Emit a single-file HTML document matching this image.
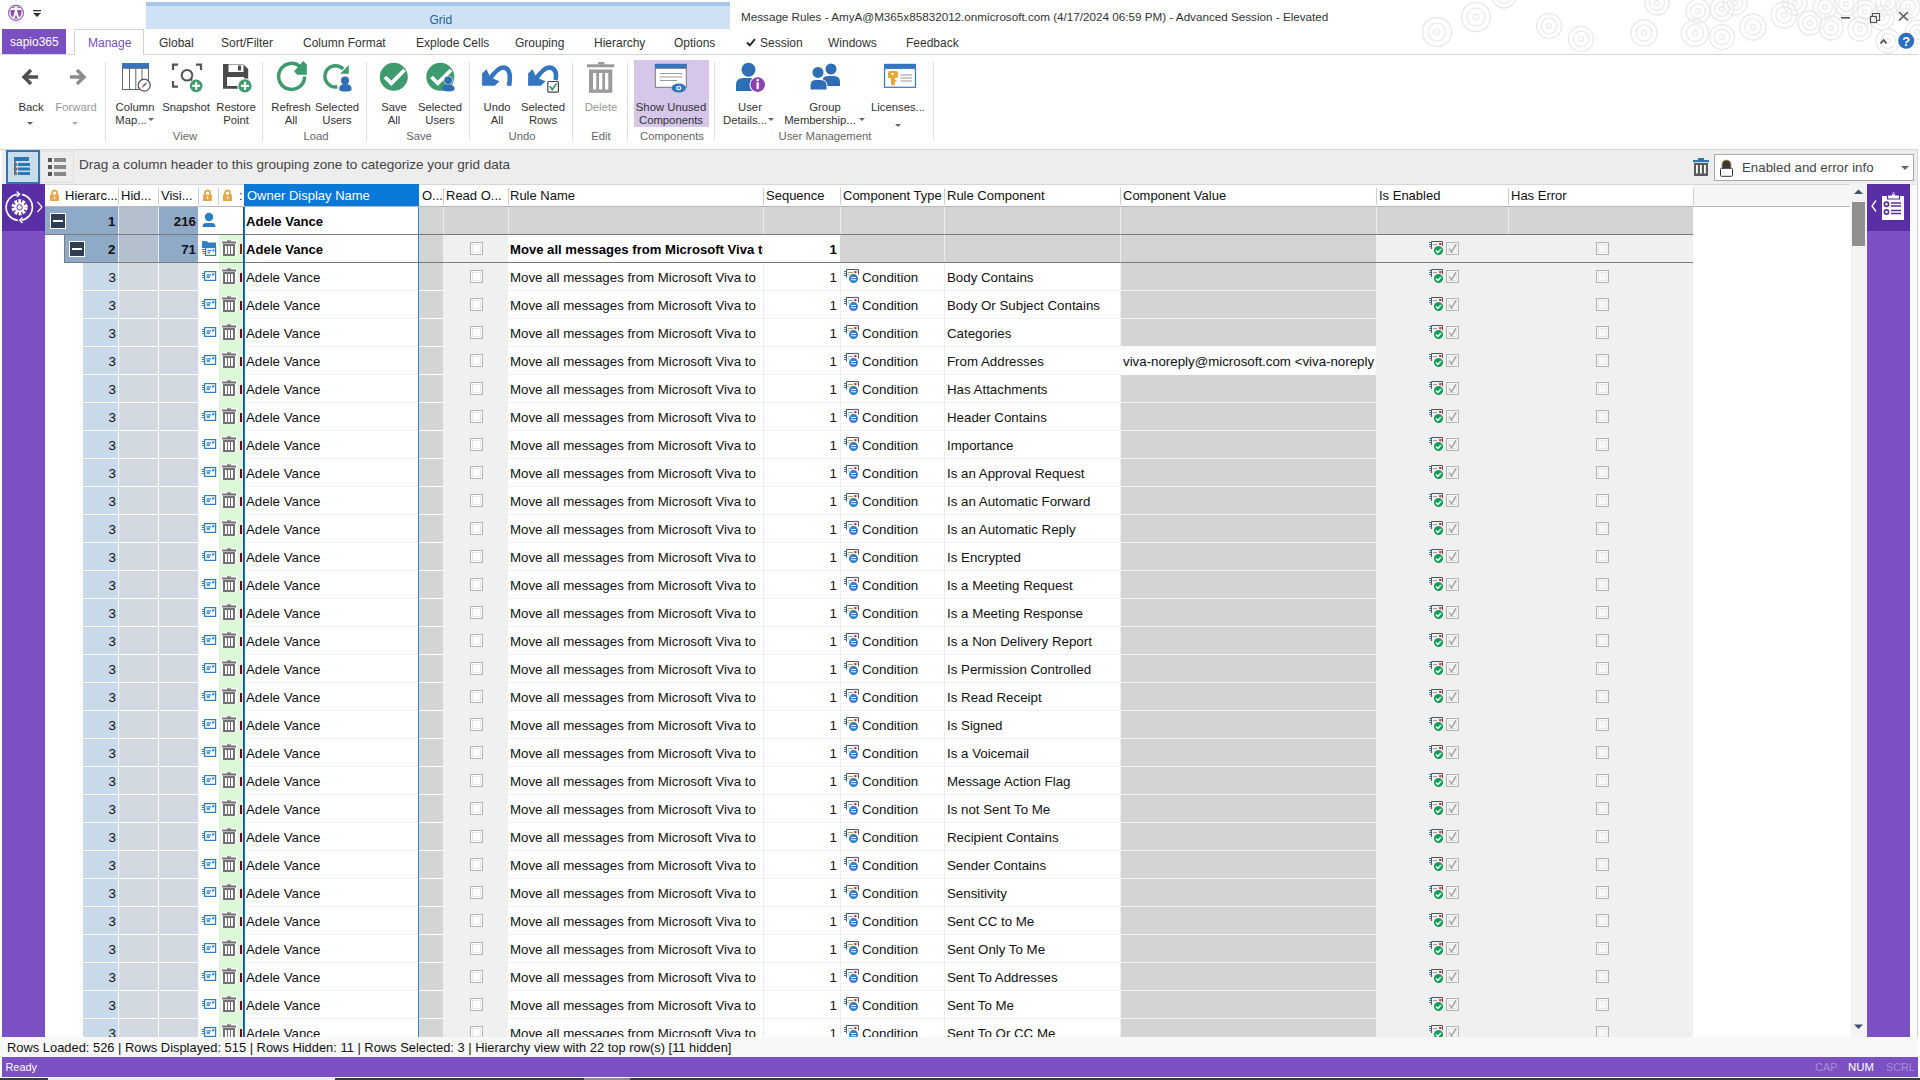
<!DOCTYPE html><html><head><meta charset="utf-8"><style>
*{margin:0;padding:0;box-sizing:border-box}
html,body{width:1920px;height:1080px;overflow:hidden;background:#fff;font-family:"Liberation Sans",sans-serif;color:#222}
.a{position:absolute}
.t{position:absolute;white-space:nowrap;line-height:1}
</style></head><body>
<svg class="a" style="left:0;top:0" width="1920" height="56"><circle cx="1437" cy="32" r="14.5" fill="none" stroke="#e9e9e9" stroke-width="1.3"/><circle cx="1437" cy="32" r="9.0" fill="none" stroke="#e9e9e9" stroke-width="1.2"/><circle cx="1437" cy="32" r="2.9" fill="none" stroke="#e9e9e9" stroke-width="1.1"/><circle cx="1476" cy="17" r="14.5" fill="none" stroke="#e9e9e9" stroke-width="1.3"/><circle cx="1476" cy="17" r="9.0" fill="none" stroke="#e9e9e9" stroke-width="1.2"/><circle cx="1476" cy="17" r="2.9" fill="none" stroke="#e9e9e9" stroke-width="1.1"/><circle cx="1504" cy="-4" r="12" fill="none" stroke="#e9e9e9" stroke-width="1.3"/><circle cx="1504" cy="-4" r="7.4" fill="none" stroke="#e9e9e9" stroke-width="1.2"/><circle cx="1504" cy="-4" r="2.4" fill="none" stroke="#e9e9e9" stroke-width="1.1"/><circle cx="1549" cy="26" r="12.5" fill="none" stroke="#e9e9e9" stroke-width="1.3"/><circle cx="1549" cy="26" r="7.8" fill="none" stroke="#e9e9e9" stroke-width="1.2"/><circle cx="1549" cy="26" r="2.5" fill="none" stroke="#e9e9e9" stroke-width="1.1"/><circle cx="1581" cy="39" r="12.5" fill="none" stroke="#e9e9e9" stroke-width="1.3"/><circle cx="1581" cy="39" r="7.8" fill="none" stroke="#e9e9e9" stroke-width="1.2"/><circle cx="1581" cy="39" r="2.5" fill="none" stroke="#e9e9e9" stroke-width="1.1"/><circle cx="1644" cy="33" r="13" fill="none" stroke="#e9e9e9" stroke-width="1.3"/><circle cx="1644" cy="33" r="8.1" fill="none" stroke="#e9e9e9" stroke-width="1.2"/><circle cx="1644" cy="33" r="2.6" fill="none" stroke="#e9e9e9" stroke-width="1.1"/><circle cx="1657" cy="3" r="12" fill="none" stroke="#e9e9e9" stroke-width="1.3"/><circle cx="1657" cy="3" r="7.4" fill="none" stroke="#e9e9e9" stroke-width="1.2"/><circle cx="1657" cy="3" r="2.4" fill="none" stroke="#e9e9e9" stroke-width="1.1"/><circle cx="1698" cy="11" r="12" fill="none" stroke="#e9e9e9" stroke-width="1.3"/><circle cx="1698" cy="11" r="7.4" fill="none" stroke="#e9e9e9" stroke-width="1.2"/><circle cx="1698" cy="11" r="2.4" fill="none" stroke="#e9e9e9" stroke-width="1.1"/><circle cx="1695" cy="33" r="13.5" fill="none" stroke="#e9e9e9" stroke-width="1.3"/><circle cx="1695" cy="33" r="8.4" fill="none" stroke="#e9e9e9" stroke-width="1.2"/><circle cx="1695" cy="33" r="2.7" fill="none" stroke="#e9e9e9" stroke-width="1.1"/><circle cx="1722" cy="37" r="12.5" fill="none" stroke="#e9e9e9" stroke-width="1.3"/><circle cx="1722" cy="37" r="7.8" fill="none" stroke="#e9e9e9" stroke-width="1.2"/><circle cx="1722" cy="37" r="2.5" fill="none" stroke="#e9e9e9" stroke-width="1.1"/><circle cx="1722" cy="9" r="12" fill="none" stroke="#e9e9e9" stroke-width="1.3"/><circle cx="1722" cy="9" r="7.4" fill="none" stroke="#e9e9e9" stroke-width="1.2"/><circle cx="1722" cy="9" r="2.4" fill="none" stroke="#e9e9e9" stroke-width="1.1"/><circle cx="1735" cy="3" r="12" fill="none" stroke="#e9e9e9" stroke-width="1.3"/><circle cx="1735" cy="3" r="7.4" fill="none" stroke="#e9e9e9" stroke-width="1.2"/><circle cx="1735" cy="3" r="2.4" fill="none" stroke="#e9e9e9" stroke-width="1.1"/><circle cx="1753" cy="27" r="13" fill="none" stroke="#e9e9e9" stroke-width="1.3"/><circle cx="1753" cy="27" r="8.1" fill="none" stroke="#e9e9e9" stroke-width="1.2"/><circle cx="1753" cy="27" r="2.6" fill="none" stroke="#e9e9e9" stroke-width="1.1"/><circle cx="1784" cy="15" r="13" fill="none" stroke="#e9e9e9" stroke-width="1.3"/><circle cx="1784" cy="15" r="8.1" fill="none" stroke="#e9e9e9" stroke-width="1.2"/><circle cx="1784" cy="15" r="2.6" fill="none" stroke="#e9e9e9" stroke-width="1.1"/><circle cx="1795" cy="3" r="12" fill="none" stroke="#e9e9e9" stroke-width="1.3"/><circle cx="1795" cy="3" r="7.4" fill="none" stroke="#e9e9e9" stroke-width="1.2"/><circle cx="1795" cy="3" r="2.4" fill="none" stroke="#e9e9e9" stroke-width="1.1"/><circle cx="1810" cy="23" r="12" fill="none" stroke="#e9e9e9" stroke-width="1.3"/><circle cx="1810" cy="23" r="7.4" fill="none" stroke="#e9e9e9" stroke-width="1.2"/><circle cx="1810" cy="23" r="2.4" fill="none" stroke="#e9e9e9" stroke-width="1.1"/><circle cx="1825" cy="7" r="12" fill="none" stroke="#e9e9e9" stroke-width="1.3"/><circle cx="1825" cy="7" r="7.4" fill="none" stroke="#e9e9e9" stroke-width="1.2"/><circle cx="1825" cy="7" r="2.4" fill="none" stroke="#e9e9e9" stroke-width="1.1"/><circle cx="1831" cy="28" r="12" fill="none" stroke="#e9e9e9" stroke-width="1.3"/><circle cx="1831" cy="28" r="7.4" fill="none" stroke="#e9e9e9" stroke-width="1.2"/><circle cx="1831" cy="28" r="2.4" fill="none" stroke="#e9e9e9" stroke-width="1.1"/><circle cx="1846" cy="4" r="12" fill="none" stroke="#e9e9e9" stroke-width="1.3"/><circle cx="1846" cy="4" r="7.4" fill="none" stroke="#e9e9e9" stroke-width="1.2"/><circle cx="1846" cy="4" r="2.4" fill="none" stroke="#e9e9e9" stroke-width="1.1"/><circle cx="1860" cy="29" r="12" fill="none" stroke="#e9e9e9" stroke-width="1.3"/><circle cx="1860" cy="29" r="7.4" fill="none" stroke="#e9e9e9" stroke-width="1.2"/><circle cx="1860" cy="29" r="2.4" fill="none" stroke="#e9e9e9" stroke-width="1.1"/><circle cx="1865" cy="12" r="12" fill="none" stroke="#e9e9e9" stroke-width="1.3"/><circle cx="1865" cy="12" r="7.4" fill="none" stroke="#e9e9e9" stroke-width="1.2"/><circle cx="1865" cy="12" r="2.4" fill="none" stroke="#e9e9e9" stroke-width="1.1"/><circle cx="1882" cy="18" r="12" fill="none" stroke="#e9e9e9" stroke-width="1.3"/><circle cx="1882" cy="18" r="7.4" fill="none" stroke="#e9e9e9" stroke-width="1.2"/><circle cx="1882" cy="18" r="2.4" fill="none" stroke="#e9e9e9" stroke-width="1.1"/><circle cx="1888" cy="41" r="12" fill="none" stroke="#e9e9e9" stroke-width="1.3"/><circle cx="1888" cy="41" r="7.4" fill="none" stroke="#e9e9e9" stroke-width="1.2"/><circle cx="1888" cy="41" r="2.4" fill="none" stroke="#e9e9e9" stroke-width="1.1"/><circle cx="1888" cy="3" r="12" fill="none" stroke="#e9e9e9" stroke-width="1.3"/><circle cx="1888" cy="3" r="7.4" fill="none" stroke="#e9e9e9" stroke-width="1.2"/><circle cx="1888" cy="3" r="2.4" fill="none" stroke="#e9e9e9" stroke-width="1.1"/><circle cx="1908" cy="7" r="12" fill="none" stroke="#e9e9e9" stroke-width="1.3"/><circle cx="1908" cy="7" r="7.4" fill="none" stroke="#e9e9e9" stroke-width="1.2"/><circle cx="1908" cy="7" r="2.4" fill="none" stroke="#e9e9e9" stroke-width="1.1"/><circle cx="1917" cy="32" r="12" fill="none" stroke="#e9e9e9" stroke-width="1.3"/><circle cx="1917" cy="32" r="7.4" fill="none" stroke="#e9e9e9" stroke-width="1.2"/><circle cx="1917" cy="32" r="2.4" fill="none" stroke="#e9e9e9" stroke-width="1.1"/></svg>
<svg class="a" style="left:4px;top:2px" width="24" height="24"><circle cx="12" cy="10.9" r="7.5" fill="#fff" stroke="#9050b0" stroke-width="1.1"/><path d="M8 5.9 Q9.5 4 11 5.9Z M13 5.9 Q14.5 4 16 5.9Z" fill="#9050b0"/><path d="M6.4 8 H11 L9.4 14.2 Q8.5 15.6 7.4 14.2 Q6 11 6.4 8Z M17.6 8 H13 L14.6 14.2 Q15.5 15.6 16.6 14.2 Q18 11 17.6 8Z M10.4 16.7 L12 12.5 L13.6 16.7Z" fill="#9050b0"/></svg>
<svg class="a" style="left:33px;top:10px" width="9" height="8"><rect x="0" y="0" width="8" height="1.3" fill="#333"/><path d="M0 3 L8 3 L4 7Z" fill="#333"/></svg>
<div class="a" style="left:146px;top:2px;width:584px;height:4px;background:#a5c8e8"></div>
<div class="a" style="left:146px;top:6px;width:584px;height:23px;background:#cfe2f5"></div>
<div class="t" style="left:429.5px;top:14px;font-size:12px;color:#1f5d9e;">Grid</div>
<div class="t" style="left:741px;top:10.5px;font-size:11.68px;color:#333;">Message Rules - AmyA@M365x85832012.onmicrosoft.com (4/17/2024 06:59 PM) - Advanced Session - Elevated</div>
<svg class="a" style="left:1830px;top:0px" width="90" height="54"><rect x="11" y="17" width="9" height="1.6" fill="#555"/><rect x="40.5" y="16.5" width="6" height="6" fill="none" stroke="#555" stroke-width="1.2"/><path d="M42.5 16.5 V13.5 H49.5 V20.5 H46.5" fill="none" stroke="#555" stroke-width="1.2"/><path d="M69 12 L78 20.5 M78 12 L69 20.5" stroke="#555" stroke-width="1.5"/><path d="M50.5 43.5 L53.5 40 L56.5 43.5" fill="none" stroke="#444" stroke-width="1.6"/><circle cx="76.2" cy="40.8" r="8" fill="#2a6fc0"/><text x="76.2" y="45.5" text-anchor="middle" font-family="Liberation Sans" font-weight="bold" font-size="13" fill="#fff">?</text></svg>
<div class="a" style="left:2px;top:29px;width:64px;height:25px;background:#7a4fc2"></div>
<div class="t" style="left:10px;top:36px;font-size:12px;color:#fff;">sapio365</div>
<div class="a" style="left:0px;top:54px;width:1918px;height:1px;background:#d6d6d6"></div>
<div class="a" style="left:74px;top:29px;width:70px;height:26px;background:#fff;border:1px solid #d2d2d2;border-bottom:none"></div>
<div class="t" style="left:88px;top:37px;font-size:12px;color:#7a4fc2;">Manage</div>
<div class="t" style="left:159px;top:37px;font-size:12px;color:#333;">Global</div>
<div class="t" style="left:221px;top:37px;font-size:12px;color:#333;">Sort/Filter</div>
<div class="t" style="left:303px;top:37px;font-size:12px;color:#333;">Column Format</div>
<div class="t" style="left:416px;top:37px;font-size:12px;color:#333;">Explode Cells</div>
<div class="t" style="left:515px;top:37px;font-size:12px;color:#333;">Grouping</div>
<div class="t" style="left:594px;top:37px;font-size:12px;color:#333;">Hierarchy</div>
<div class="t" style="left:674px;top:37px;font-size:12px;color:#333;">Options</div>
<div class="t" style="left:760px;top:37px;font-size:12px;color:#333;">Session</div>
<div class="t" style="left:828px;top:37px;font-size:12px;color:#333;">Windows</div>
<div class="t" style="left:906px;top:37px;font-size:12px;color:#333;">Feedback</div>
<svg class="a" style="left:746px;top:38px" width="10" height="9"><path d="M1 4.5 L3.8 7.3 L9 1.2" fill="none" stroke="#2a2a2a" stroke-width="2"/></svg>
<div class="a" style="left:0px;top:149px;width:1918px;height:1px;background:#d6d6d6"></div>
<div class="a" style="left:105px;top:62px;width:1px;height:80px;background:#e2e2e2"></div>
<div class="a" style="left:262px;top:62px;width:1px;height:80px;background:#e2e2e2"></div>
<div class="a" style="left:366px;top:62px;width:1px;height:80px;background:#e2e2e2"></div>
<div class="a" style="left:469px;top:62px;width:1px;height:80px;background:#e2e2e2"></div>
<div class="a" style="left:572px;top:62px;width:1px;height:80px;background:#e2e2e2"></div>
<div class="a" style="left:627px;top:62px;width:1px;height:80px;background:#e2e2e2"></div>
<div class="a" style="left:714px;top:62px;width:1px;height:80px;background:#e2e2e2"></div>
<div class="a" style="left:933px;top:62px;width:1px;height:80px;background:#e2e2e2"></div>
<svg class="a" style="left:0px;top:0px" width="960" height="150"><path d="M31 70 L24 77 L31 84 M24 77 H38" fill="none" stroke="#505050" stroke-width="3.4"/><path d="M77 70 L84 77 L77 84 M84 77 H70" fill="none" stroke="#8c8c8c" stroke-width="3.4"/><rect x="122" y="63" width="27" height="5.3" fill="#3574c0"/><rect x="122.5" y="68.3" width="26" height="21.2" fill="#fff" stroke="#666" stroke-width="1"/><path d="M129.5 68 V90 M135.8 68 V90 M142 68 V80" stroke="#666" stroke-width="1"/><circle cx="144.2" cy="85.2" r="6" fill="#fff" stroke="#555" stroke-width="1.2"/><path d="M141.2 88.2 L143.6 84.6 L147.2 82.2 L144.8 85.8Z" fill="#e04a2a"/><path d="M143.6 84.6 L147.2 82.2 L144.8 85.8Z" fill="#3574c0"/><path d="M173 70 V64.7 H178 M196 64.7 H201 V70 M173 81 V86.6 H178" fill="none" stroke="#555" stroke-width="2.2"/><circle cx="187" cy="75.3" r="5.3" fill="none" stroke="#555" stroke-width="2"/><path d="M190.5 79 L193 81.5" stroke="#555" stroke-width="2"/><circle cx="196.2" cy="85.9" r="7" fill="#fff"/><circle cx="196.2" cy="85.9" r="6.3" fill="#3d9b6e"/><path d="M196.2 82 V89.8 M192.3 85.9 H200.1" stroke="#fff" stroke-width="2.2"/><path d="M223 64 H243 L248.2 69 V88.7 H223Z" fill="#4b4b4b"/><rect x="228.5" y="64.5" width="15" height="7.5" fill="#fff"/><rect x="238" y="65.5" width="3" height="5" fill="#4b4b4b"/><rect x="227" y="77" width="17" height="9" fill="#fff"/><circle cx="245" cy="85.9" r="7.6" fill="#fff"/><circle cx="245" cy="85.9" r="6.6" fill="#3d9b6e"/><path d="M245 81.8 V90 M240.9 85.9 H249.1" stroke="#fff" stroke-width="2.2"/><path d="M304.6 76.4 A13 13 0 1 1 299.9 66.4" fill="none" stroke="#3d9b6e" stroke-width="3.5"/><path d="M303.3 60.9 L306.8 64.4 V74.75 H297.2 L294.1 71.2Z" fill="#3d9b6e"/><path d="M337.4 86.8 A10.6 10.6 0 1 1 343.1 68.9" fill="none" stroke="#3d9b6e" stroke-width="3.5"/><path d="M348.8 65.1 V73.8 H340.1Z" fill="#3d9b6e"/><circle cx="345" cy="80.4" r="4" fill="#2f6db5"/><path d="M339.2 89 Q339.2 84.1 345.4 84.1 Q351.6 84.1 351.6 89 Q351.6 91.6 345.4 91.6 Q339.2 91.6 339.2 89Z" fill="#2f6db5"/><circle cx="393.8" cy="76.8" r="14" fill="#3d9b6e"/><path d="M385 77 L391.3 83.3 L404.5 70" fill="none" stroke="#fff" stroke-width="3.8"/><circle cx="440.3" cy="76.8" r="14" fill="#3d9b6e"/><path d="M431.5 77 L437.8 83.3 L451 70" fill="none" stroke="#fff" stroke-width="3.8"/><circle cx="448.2" cy="80.3" r="4.6" fill="#cfe3d8"/><circle cx="448.2" cy="80.3" r="3.8" fill="#2f6db5"/><path d="M442 89 Q442 84.5 448.3 84.5 Q454.6 84.5 454.6 89 Q454.6 91.4 448.3 91.4 Q442 91.4 442 89Z" fill="#2f6db5"/><path d="M489.5 79.5 C494 73, 499 67.5, 503 67.5 C508 67.5, 511.5 72, 509 85.8" fill="none" stroke="#3574c0" stroke-width="4.6"/><path d="M482.1 73.5 L486.5 69.2 L490.5 77.5 L499.5 81.3 L494.8 85.8 L482.1 85.8Z" fill="#3574c0"/><path d="M535.5 79.5 C540 73, 545 67.5, 549 67.5 C554 67.5, 557.5 72, 555.5 80" fill="none" stroke="#3574c0" stroke-width="4.6"/><path d="M528.1 73.5 L532.5 69.2 L536.5 77.5 L545.5 81.3 L540.8 85.8 L528.1 85.8Z" fill="#3574c0"/><rect x="547.8" y="81.5" width="10.6" height="10.6" rx="1" fill="#fff" stroke="#444" stroke-width="1.2"/><path d="M549.8 86.3 L552.3 89.6 L556.6 83.5" fill="none" stroke="#3d9b6e" stroke-width="1.8"/><rect x="598" y="62" width="6.5" height="2.5" fill="#9b9b9b"/><rect x="586.8" y="64.3" width="27.4" height="3" fill="#9b9b9b"/><rect x="589" y="69.5" width="23.3" height="23.3" fill="#9b9b9b"/><rect x="593" y="73" width="3.3" height="16.5" fill="#fff"/><rect x="599" y="73" width="3.3" height="16.5" fill="#fff"/><rect x="605" y="73" width="3.3" height="16.5" fill="#fff"/></svg>
<div class="t" style="left:-29px;width:120px;text-align:center;top:101.5px;font-size:11.3px;color:#333">Back</div>
<svg class="a" style="left:27px;top:122px" width="6" height="4"><path d="M0 0 H6 L3 3Z" fill="#666"/></svg>
<div class="t" style="left:16px;width:120px;text-align:center;top:101.5px;font-size:11.3px;color:#999">Forward</div>
<svg class="a" style="left:72px;top:122px" width="6" height="4"><path d="M0 0 H6 L3 3Z" fill="#aaa"/></svg>
<div class="t" style="left:75px;width:120px;text-align:center;top:101.5px;font-size:11.3px;color:#333">Column</div>
<div class="t" style="left:71px;width:120px;text-align:center;top:114.5px;font-size:11.3px;color:#333">Map...</div>
<svg class="a" style="left:148px;top:118px" width="6" height="4"><path d="M0 0 H6 L3 3Z" fill="#666"/></svg>
<div class="t" style="left:126px;width:120px;text-align:center;top:101.5px;font-size:11.3px;color:#333">Snapshot</div>
<div class="t" style="left:176px;width:120px;text-align:center;top:101.5px;font-size:11.3px;color:#333">Restore</div>
<div class="t" style="left:176px;width:120px;text-align:center;top:114.5px;font-size:11.3px;color:#333">Point</div>
<div class="t" style="left:125px;width:120px;text-align:center;top:130.5px;font-size:11.3px;color:#666">View</div>
<div class="t" style="left:231px;width:120px;text-align:center;top:101.5px;font-size:11.3px;color:#333">Refresh</div>
<div class="t" style="left:231px;width:120px;text-align:center;top:114.5px;font-size:11.3px;color:#333">All</div>
<div class="t" style="left:277px;width:120px;text-align:center;top:101.5px;font-size:11.3px;color:#333">Selected</div>
<div class="t" style="left:277px;width:120px;text-align:center;top:114.5px;font-size:11.3px;color:#333">Users</div>
<div class="t" style="left:256px;width:120px;text-align:center;top:130.5px;font-size:11.3px;color:#666">Load</div>
<div class="t" style="left:334px;width:120px;text-align:center;top:101.5px;font-size:11.3px;color:#333">Save</div>
<div class="t" style="left:334px;width:120px;text-align:center;top:114.5px;font-size:11.3px;color:#333">All</div>
<div class="t" style="left:380px;width:120px;text-align:center;top:101.5px;font-size:11.3px;color:#333">Selected</div>
<div class="t" style="left:380px;width:120px;text-align:center;top:114.5px;font-size:11.3px;color:#333">Users</div>
<div class="t" style="left:359px;width:120px;text-align:center;top:130.5px;font-size:11.3px;color:#666">Save</div>
<div class="t" style="left:437px;width:120px;text-align:center;top:101.5px;font-size:11.3px;color:#333">Undo</div>
<div class="t" style="left:437px;width:120px;text-align:center;top:114.5px;font-size:11.3px;color:#333">All</div>
<div class="t" style="left:483px;width:120px;text-align:center;top:101.5px;font-size:11.3px;color:#333">Selected</div>
<div class="t" style="left:483px;width:120px;text-align:center;top:114.5px;font-size:11.3px;color:#333">Rows</div>
<div class="t" style="left:462px;width:120px;text-align:center;top:130.5px;font-size:11.3px;color:#666">Undo</div>
<div class="t" style="left:541px;width:120px;text-align:center;top:101.5px;font-size:11.3px;color:#999">Delete</div>
<div class="t" style="left:541px;width:120px;text-align:center;top:130.5px;font-size:11.3px;color:#666">Edit</div>
<div class="a" style="left:634px;top:60px;width:75px;height:67px;background:#d5c6ea"></div>
<svg class="a" style="left:0px;top:0px" width="960" height="150"><rect x="654.8" y="63.8" width="32" height="4.5" fill="#3574c0"/><rect x="655.3" y="68.3" width="31" height="19" fill="#fff" stroke="#777" stroke-width="1"/><path d="M660 73.5 H682 M660 77 H682 M660 80.5 H677" stroke="#9a9a9a" stroke-width="1"/><ellipse cx="678.75" cy="88" rx="7.2" ry="4.6" fill="#3574c0"/><ellipse cx="678.75" cy="88" rx="2.6" ry="2.2" fill="#fff"/><circle cx="678.75" cy="88" r="1.2" fill="#3574c0"/><circle cx="748.5" cy="69.8" r="7" fill="#2f6db5"/><path d="M736 91 V85 Q736 78 743 78 H755 Q762 78 762 85 V91Z" fill="#2f6db5"/><circle cx="757.7" cy="84.6" r="8.3" fill="#fff"/><circle cx="757.7" cy="84.6" r="7.3" fill="#8b3fb0"/><rect x="756.5" y="82.3" width="2.4" height="6.8" fill="#fff"/><rect x="756.5" y="79" width="2.4" height="2.2" fill="#fff"/><circle cx="831" cy="69" r="5.5" fill="#2f6db5"/><path d="M822 86 V82 Q822 76 828 76 H834 Q840 76 840 82 V86Z" fill="#2f6db5"/><circle cx="818" cy="72.4" r="6.3" fill="#fff"/><circle cx="818" cy="72.4" r="5.5" fill="#2f6db5"/><path d="M810 90 V86 Q810 79.5 816 79.5 H820 Q827 79.5 827 86 V90Z" fill="#2f6db5" stroke="#fff" stroke-width="1"/><rect x="884" y="63.8" width="32" height="4.5" fill="#3574c0"/><rect x="884.5" y="68.3" width="31" height="19" fill="#fff" stroke="#3574c0" stroke-width="1.2"/><path d="M888 73 Q888 71 890 71 H896 Q898 71 898 73 V76 Q898 78 896 78 H888Z" fill="#e8a838"/><rect x="891" y="73" width="3" height="1.6" fill="#fff"/><path d="M891 78 H895 V84 L893 86 L891 84Z" fill="#e8a838"/><rect x="895" y="80" width="1.5" height="1.5" fill="#e8a838"/><path d="M900.5 75 H912 M900.5 78 H912 M900.5 81 H912" stroke="#999" stroke-width="1"/></svg>
<div class="t" style="left:611px;width:120px;text-align:center;top:101.5px;font-size:11.3px;color:#333">Show Unused</div>
<div class="t" style="left:611px;width:120px;text-align:center;top:114.5px;font-size:11.3px;color:#333">Components</div>
<div class="t" style="left:612px;width:120px;text-align:center;top:130.5px;font-size:11.3px;color:#666">Components</div>
<div class="t" style="left:690px;width:120px;text-align:center;top:101.5px;font-size:11.3px;color:#333">User</div>
<div class="t" style="left:685px;width:120px;text-align:center;top:114.5px;font-size:11.3px;color:#333">Details...</div>
<svg class="a" style="left:768px;top:118px" width="6" height="4"><path d="M0 0 H6 L3 3Z" fill="#666"/></svg>
<div class="t" style="left:765px;width:120px;text-align:center;top:101.5px;font-size:11.3px;color:#333">Group</div>
<div class="t" style="left:760px;width:120px;text-align:center;top:114.5px;font-size:11.3px;color:#333">Membership...</div>
<svg class="a" style="left:859px;top:118px" width="6" height="4"><path d="M0 0 H6 L3 3Z" fill="#666"/></svg>
<div class="t" style="left:838px;width:120px;text-align:center;top:101.5px;font-size:11.3px;color:#333">Licenses...</div>
<svg class="a" style="left:895px;top:124px" width="6" height="4"><path d="M0 0 H6 L3 3Z" fill="#666"/></svg>
<div class="t" style="left:765px;width:120px;text-align:center;top:130.5px;font-size:11.3px;color:#666">User Management</div>
<div class="a" style="left:2px;top:150px;width:1916px;height:34px;background:#ededed;border-right:1px solid #d8d8d8"></div>
<div class="a" style="left:6px;top:150px;width:34px;height:34px;background:#c9dcec;border:2px solid #2e75b6"></div>
<svg class="a" style="left:14px;top:157px" width="18" height="20"><rect x="0" y="0" width="15" height="4" fill="#2e75b6"/><rect x="4" y="6" width="12" height="3" fill="#2e75b6"/><rect x="4" y="10.5" width="12" height="3" fill="#2e75b6"/><rect x="4" y="15" width="12" height="3" fill="#2e75b6"/><path d="M1 4 V17" stroke="#444" stroke-width="1"/><circle cx="1.5" cy="7.5" r="1.3" fill="none" stroke="#444"/><circle cx="1.5" cy="12" r="1.3" fill="none" stroke="#444"/><circle cx="1.5" cy="16.5" r="1.3" fill="none" stroke="#444"/></svg>
<div class="a" style="left:40px;top:151px;width:34px;height:32px;border:1px solid #dedede"></div>
<svg class="a" style="left:47px;top:157px" width="20" height="20"><rect x="1" y="1" width="4" height="4" fill="#555"/><rect x="7" y="1" width="12" height="4" fill="#888"/><rect x="1" y="8" width="4" height="4" fill="#555"/><rect x="7" y="8" width="12" height="4" fill="#888"/><rect x="1" y="15" width="4" height="4" fill="#555"/><rect x="7" y="15" width="12" height="4" fill="#888"/></svg>
<div class="t" style="left:79px;top:157.5px;font-size:13.54px;color:#444;">Drag a column header to this grouping zone to categorize your grid data</div>
<svg class="a" style="left:1692px;top:157px" width="18" height="20"><rect x="6" y="1" width="6" height="2" fill="#2e75b6"/><rect x="1" y="3" width="16" height="2.2" fill="#2e75b6"/><rect x="2" y="6" width="14" height="13" fill="#5a5a5a"/><rect x="4" y="8" width="1.8" height="8.5" fill="#fff"/><rect x="8" y="8" width="1.8" height="8.5" fill="#fff"/><rect x="12" y="8" width="1.8" height="8.5" fill="#fff"/></svg>
<div class="a" style="left:1714px;top:154px;width:200px;height:27px;background:#fff;border:1px solid #a9a9a9"></div>
<svg class="a" style="left:1719px;top:159px" width="15" height="18"><path d="M3 9.5 V5.5 A4.5 4.5 0 0 1 12 5.5 V9.5Z" fill="#3a3a3a"/><path d="M3 9.5 V5.5 A4.5 4.5 0 0 1 12 5.5 V9.5" fill="none" stroke="#c89040" stroke-width="0.8"/><rect x="1.5" y="9.3" width="12" height="8" rx="1" fill="#fff" stroke="#333" stroke-width="1"/></svg>
<div class="t" style="left:1742px;top:161px;font-size:13.3px;color:#444;">Enabled and error info</div>
<svg class="a" style="left:1901px;top:166px" width="8" height="5"><path d="M0 0 H8 L4 4Z" fill="#666"/></svg>
<div class="a" style="left:2px;top:184px;width:43px;height:853px;background:#7a50c2"></div>
<div class="a" style="left:2px;top:184px;width:43px;height:47px;background:#5a2fa6"></div>
<svg class="a" style="left:0px;top:184px" width="45" height="47"><path d="M17.5 10.2 A13.2 13.2 0 0 0 17.8 36.4" fill="none" stroke="#fff" stroke-width="1.6"/><path d="M22 10.4 A13.2 13.2 0 0 1 21.5 36.3" fill="none" stroke="#fff" stroke-width="1.6"/><path d="M16.8 7.5 L19.5 10.2 L16.8 12.9" fill="none" stroke="#fff" stroke-width="1.5"/><path d="M22.5 33.5 L19.8 36.3 L22.5 39" fill="none" stroke="#fff" stroke-width="1.5"/><circle cx="19.6" cy="23.3" r="6.4" fill="none" stroke="#fff" stroke-width="3.4" stroke-dasharray="2.7 1.32"/><circle cx="19.6" cy="23.3" r="5.2" fill="#fff"/><circle cx="19.6" cy="23.3" r="2.7" fill="none" stroke="#5a2fa6" stroke-width="1"/><path d="M37.5 17.8 L42 23 L37.5 28" fill="none" stroke="#fff" stroke-width="1.2"/></svg>
<div class="a" style="left:1867px;top:184px;width:43px;height:853px;background:#7a50c2"></div>
<div class="a" style="left:1867px;top:184px;width:43px;height:47px;background:#5a2fa6"></div>
<svg class="a" style="left:1867px;top:184px" width="43" height="47"><path d="M9 16.5 L5 22 L9 27.5" fill="none" stroke="#fff" stroke-width="1.3"/><rect x="15" y="12" width="22" height="24" fill="#fff"/><path d="M20.5 15 V11 H24.5 Q25 7.5 26.5 7.5 Q28 7.5 28.5 11 H32.5 V15Z" fill="#fff" stroke="#5a2fa6" stroke-width="1.2"/><circle cx="26.5" cy="9.8" r="0.8" fill="#5a2fa6"/><circle cx="19.5" cy="20.3" r="2.1" fill="none" stroke="#5a2fa6" stroke-width="1.7"/><circle cx="19.5" cy="28" r="2.1" fill="none" stroke="#5a2fa6" stroke-width="1.7"/><path d="M24 19 H34 M24 22 H34 M24 26.5 H34 M24 29.5 H34" stroke="#5a2fa6" stroke-width="1.3"/></svg>
<div class="a" style="left:1910px;top:184px;width:8px;height:853px;background:#fafafa;border-right:1px solid #d0d0d0;border-top:1px solid #e0e0e0"></div>
<div class="a" style="left:1850px;top:184px;width:17px;height:853px;background:#f3f3f3;border-left:1px solid #fafafa"></div>
<svg class="a" style="left:1854px;top:189px" width="9" height="6"><path d="M0 5 L4.5 0.5 L9 5Z" fill="#3f4f6a"/></svg>
<div class="a" style="left:1852px;top:202px;width:13px;height:44px;background:#8f8f8f"></div>
<svg class="a" style="left:1854px;top:1024px" width="9" height="6"><path d="M0 0.5 L4.5 5 L9 0.5Z" fill="#3f4f6a"/></svg>
<div class="a" style="left:45px;top:184px;width:1805px;height:22px;background:#fff"></div>
<div class="a" style="left:1693px;top:184px;width:157px;height:22px;background:#f6f6f6"></div>
<div class="a" style="left:45px;top:206px;width:1805px;height:1px;background:#b9b9b9"></div>
<div class="a" style="left:45px;top:184px;width:1805px;height:1px;background:#d6d6d6"></div>
<div class="a" style="left:244px;top:184px;width:175px;height:22px;background:#0a78d7"></div>
<div class="a" style="left:118px;top:188px;width:1px;height:17px;background:#cfcfcf"></div>
<div class="a" style="left:158px;top:188px;width:1px;height:17px;background:#cfcfcf"></div>
<div class="a" style="left:198px;top:188px;width:1px;height:17px;background:#cfcfcf"></div>
<div class="a" style="left:218px;top:188px;width:1px;height:17px;background:#cfcfcf"></div>
<div class="a" style="left:443px;top:188px;width:1px;height:17px;background:#cfcfcf"></div>
<div class="a" style="left:508px;top:188px;width:1px;height:17px;background:#cfcfcf"></div>
<div class="a" style="left:763px;top:188px;width:1px;height:17px;background:#cfcfcf"></div>
<div class="a" style="left:840px;top:188px;width:1px;height:17px;background:#cfcfcf"></div>
<div class="a" style="left:944px;top:188px;width:1px;height:17px;background:#cfcfcf"></div>
<div class="a" style="left:1120px;top:188px;width:1px;height:17px;background:#cfcfcf"></div>
<div class="a" style="left:1376px;top:188px;width:1px;height:17px;background:#cfcfcf"></div>
<div class="a" style="left:1508px;top:188px;width:1px;height:17px;background:#cfcfcf"></div>
<div class="a" style="left:1693px;top:188px;width:1px;height:17px;background:#cfcfcf"></div>
<svg class="a" style="left:50px;top:189px" width="9" height="12"><path d="M2 6 V4 A2.5 2.5 0 0 1 7 4 V6" fill="none" stroke="#e3a94a" stroke-width="1.8"/><rect x="0" y="5.5" width="9" height="6.5" fill="#e3a94a"/><rect x="4" y="7.5" width="1.2" height="2.5" fill="#fff"/></svg>
<svg class="a" style="left:203px;top:189px" width="9" height="12"><path d="M2 6 V4 A2.5 2.5 0 0 1 7 4 V6" fill="none" stroke="#e3a94a" stroke-width="1.8"/><rect x="0" y="5.5" width="9" height="6.5" fill="#e3a94a"/><rect x="4" y="7.5" width="1.2" height="2.5" fill="#fff"/></svg>
<svg class="a" style="left:223px;top:189px" width="9" height="12"><path d="M2 6 V4 A2.5 2.5 0 0 1 7 4 V6" fill="none" stroke="#e3a94a" stroke-width="1.8"/><rect x="0" y="5.5" width="9" height="6.5" fill="#e3a94a"/><rect x="4" y="7.5" width="1.2" height="2.5" fill="#fff"/></svg>
<div class="t" style="left:65px;top:188.5px;font-size:13.0px;color:#111;">Hierarc...</div>
<div class="t" style="left:121px;top:188.5px;font-size:13.0px;color:#111;">Hid...</div>
<div class="t" style="left:161px;top:188.5px;font-size:13.0px;color:#111;">Visi...</div>
<div class="t" style="left:239px;top:188.5px;font-size:13.0px;color:#111;">:</div>
<div class="t" style="left:247px;top:188.5px;font-size:13.0px;color:#fff;">Owner Display Name</div>
<div class="t" style="left:422px;top:188.5px;font-size:13.0px;color:#111;">O...</div>
<div class="t" style="left:446px;top:188.5px;font-size:13.0px;color:#111;">Read O...</div>
<div class="t" style="left:510px;top:188.5px;font-size:13.0px;color:#111;">Rule Name</div>
<div class="t" style="left:766px;top:188.5px;font-size:13.0px;color:#111;">Sequence</div>
<div class="t" style="left:843px;top:188.5px;font-size:13.0px;color:#111;">Component Type</div>
<div class="t" style="left:947px;top:188.5px;font-size:13.0px;color:#111;">Rule Component</div>
<div class="t" style="left:1123px;top:188.5px;font-size:13.0px;color:#111;">Component Value</div>
<div class="t" style="left:1379px;top:188.5px;font-size:13.0px;color:#111;">Is Enabled</div>
<div class="t" style="left:1511px;top:188.5px;font-size:13.0px;color:#111;">Has Error</div>
<div class="a" style="left:45px;top:207px;width:73px;height:27px;background:#8eaac8"></div>
<div class="a" style="left:118px;top:207px;width:1px;height:27px;background:#e8edf2"></div>
<div class="a" style="left:119px;top:207px;width:39px;height:27px;background:#b4c0cd"></div>
<div class="a" style="left:158px;top:207px;width:1px;height:27px;background:#e8edf2"></div>
<div class="a" style="left:159px;top:207px;width:39px;height:27px;background:#8eaac8"></div>
<div class="a" style="left:198px;top:207px;width:46px;height:27px;background:#fff"></div>
<div class="a" style="left:50px;top:213px;width:16px;height:16px;background:#2f3e52;border:1px solid #fff"><div class="a" style="left:2px;top:6px;width:10px;height:2px;background:#fff"></div></div>
<div class="t" style="left:15.5px;width:100px;text-align:right;top:215px;font-size:13.3px;color:#111;font-weight:bold">1</div>
<div class="t" style="left:96px;width:100px;text-align:right;top:215px;font-size:13.3px;color:#111;font-weight:bold">216</div>
<svg class="a" style="left:202px;top:212px" width="16" height="16"><circle cx="7" cy="5" r="4.2" fill="#2f7ec1"/><path d="M0.5 15 Q0.5 11 4 11 H10 Q13.5 11 13.5 15Z" fill="#2f7ec1"/></svg>
<div class="a" style="left:244px;top:207px;width:175px;height:27px;background:#fff"></div>
<div class="t" style="left:246px;top:214.5px;font-size:13.1px;color:#000;font-weight:bold">Adele Vance</div>
<div class="a" style="left:419px;top:207px;width:1274px;height:27px;background:#d4d4d4"></div>
<div class="a" style="left:443px;top:207px;width:1px;height:27px;background:#ebebeb"></div>
<div class="a" style="left:508px;top:207px;width:1px;height:27px;background:#ebebeb"></div>
<div class="a" style="left:763px;top:207px;width:1px;height:27px;background:#ebebeb"></div>
<div class="a" style="left:840px;top:207px;width:1px;height:27px;background:#ebebeb"></div>
<div class="a" style="left:944px;top:207px;width:1px;height:27px;background:#ebebeb"></div>
<div class="a" style="left:1120px;top:207px;width:1px;height:27px;background:#ebebeb"></div>
<div class="a" style="left:1376px;top:207px;width:1px;height:27px;background:#ebebeb"></div>
<div class="a" style="left:1508px;top:207px;width:1px;height:27px;background:#ebebeb"></div>
<div class="a" style="left:45px;top:234px;width:1648px;height:1px;background:#7c7c7c"></div>
<div class="a" style="left:64px;top:235px;width:54px;height:27px;background:#8eaac8"></div>
<div class="a" style="left:118px;top:235px;width:1px;height:27px;background:#e8edf2"></div>
<div class="a" style="left:119px;top:235px;width:39px;height:27px;background:#b4c0cd"></div>
<div class="a" style="left:158px;top:235px;width:1px;height:27px;background:#e8edf2"></div>
<div class="a" style="left:159px;top:235px;width:39px;height:27px;background:#8eaac8"></div>
<div class="a" style="left:198px;top:235px;width:21px;height:27px;background:#fff"></div>
<div class="a" style="left:219px;top:235px;width:25px;height:27px;background:#dcf8d8"></div>
<div class="a" style="left:69px;top:241px;width:16px;height:16px;background:#2f3e52;border:1px solid #fff"><div class="a" style="left:2px;top:6px;width:10px;height:2px;background:#fff"></div></div>
<div class="t" style="left:15.5px;width:100px;text-align:right;top:243px;font-size:13.3px;color:#111;font-weight:bold">2</div>
<div class="t" style="left:96px;width:100px;text-align:right;top:243px;font-size:13.3px;color:#111;font-weight:bold">71</div>
<svg class="a" style="left:200px;top:240px" width="17" height="17"><path d="M2 8 V1.5 Q2 1 2.6 1 H6.8 L8.2 2.6 H16 V7 H5 V8Z" fill="#2f7ec1"/><rect x="5.6" y="7.6" width="10" height="7.8" fill="#fff" stroke="#2f7ec1" stroke-width="1.2"/><path d="M7.5 10.6 H11.5 M7.5 12.6 H10" stroke="#2f7ec1" stroke-width="1.3"/><rect x="12.4" y="9.4" width="2" height="2" fill="#2f7ec1"/><path d="M2 9.5 H5 M2 11.5 H5 M3 13.5 H5" stroke="#2f7ec1" stroke-width="1"/></svg>
<svg class="a" style="left:221px;top:240px" width="16" height="16"><rect x="0" y="0" width="16" height="16" fill="#fff"/><rect x="6" y="0.3" width="4" height="1.5" fill="#737373"/><rect x="1" y="1.5" width="14" height="2" fill="#737373"/><rect x="2" y="4" width="12" height="12" fill="#737373"/><rect x="4" y="6" width="2" height="8" fill="#fff"/><rect x="7" y="6" width="2" height="8" fill="#fff"/><rect x="10" y="6" width="2" height="8" fill="#fff"/></svg>
<div class="a" style="left:240px;top:244px;width:1.5px;height:10px;background:#7a2a10"></div>
<div class="a" style="left:244px;top:235px;width:175px;height:27px;background:#fff"></div>
<div class="t" style="left:246px;top:242.5px;font-size:13.1px;color:#000;font-weight:bold">Adele Vance</div>
<div class="a" style="left:419px;top:235px;width:24px;height:27px;background:#d4d4d4"></div>
<div class="a" style="left:443px;top:235px;width:65px;height:27px;background:#f0f0f0"></div>
<div class="a" style="left:470px;top:242px;width:13px;height:13px;border:1px solid #b4b4b4;background:#fcfcfc"><div class="a" style="left:1px;top:1px;width:9px;height:9px;border:1px solid #e6e6e6"></div></div>
<div class="a" style="left:508px;top:235px;width:255px;height:27px;background:#fff;overflow:hidden"><div class="t" style="left:2px;top:8px;font-size:13.1px;font-weight:bold;color:#000">Move all messages from Microsoft Viva to</div></div>
<div class="a" style="left:763px;top:235px;width:77px;height:27px;background:#fff"></div>
<div class="t" style="left:737px;width:100px;text-align:right;top:243px;font-size:13.3px;color:#000;font-weight:bold">1</div>
<div class="a" style="left:840px;top:235px;width:536px;height:27px;background:#d4d4d4"></div>
<div class="a" style="left:944px;top:235px;width:1px;height:27px;background:#ebebeb"></div>
<div class="a" style="left:1120px;top:235px;width:1px;height:27px;background:#ebebeb"></div>
<div class="a" style="left:1376px;top:235px;width:317px;height:27px;background:#f0f0f0"></div>
<svg class="a" style="left:1428px;top:240px" width="16" height="16"><path d="M3.5 9 V1.5 H14.5 V6" fill="none" stroke="#555" stroke-width="1"/><rect x="11.2" y="3" width="2.2" height="2.2" fill="#d42a2a"/><path d="M5.2 4.5 H9" stroke="#9a9a9a" stroke-width="1"/><path d="M1 2.5 H3 M1 4.5 H3 M1 6.5 H3" stroke="#2f7ec1" stroke-width="1"/><circle cx="10.5" cy="10.6" r="5.3" fill="#fff"/><circle cx="10.5" cy="10.6" r="4.6" fill="#16a05a"/><path d="M8 10.6 L9.8 12.4 L13 9" fill="none" stroke="#fff" stroke-width="1.4"/></svg>
<div class="a" style="left:1446px;top:242px;width:13px;height:13px;border:1px solid #b4b4b4;background:#f7f7f7"><div class="a" style="left:1px;top:1px;width:9px;height:9px;border:1px solid #e6e6e6"></div></div><svg class="a" style="left:1446px;top:242px" width="13" height="13"><path d="M3.5 6.5 L5.5 10 L10 2.5" fill="none" stroke="#a4a4a4" stroke-width="1.5"/></svg>
<div class="a" style="left:1596px;top:242px;width:13px;height:13px;border:1px solid #b4b4b4;background:#f7f7f7"><div class="a" style="left:1px;top:1px;width:9px;height:9px;border:1px solid #e6e6e6"></div></div>
<div class="a" style="left:64px;top:262px;width:1629px;height:1px;background:#7c7c7c"></div>
<div class="a" style="left:64px;top:235px;width:1px;height:27px;background:#7c7c7c"></div>
<div class="a" style="left:83px;top:263px;width:35px;height:27px;background:#c8d9e9"></div>
<div class="a" style="left:119px;top:263px;width:39px;height:27px;background:#d3d9e0"></div>
<div class="a" style="left:159px;top:263px;width:39px;height:27px;background:#d3d9e0"></div>
<div class="a" style="left:83px;top:290px;width:115px;height:1px;background:#fff"></div>
<div class="a" style="left:118px;top:263px;width:1px;height:28px;background:#fff"></div>
<div class="a" style="left:158px;top:263px;width:1px;height:28px;background:#fff"></div>
<div class="t" style="left:16px;width:100px;text-align:right;top:271px;font-size:13.3px;color:#111;">3</div>
<svg class="a" style="left:200px;top:269px" width="17" height="17"><rect x="4.6" y="2.6" width="11" height="8.8" fill="#fff" stroke="#2f7ec1" stroke-width="1.2"/><path d="M6.5 5.8 H11 M6.5 8 H10" stroke="#2f7ec1" stroke-width="1.3"/><rect x="12.2" y="4.3" width="2.1" height="2.1" fill="#2f7ec1"/><path d="M2 4.5 H4.6 M2 6.5 H4.6 M2 8.5 H4.6" stroke="#2f7ec1" stroke-width="1"/></svg>
<div class="a" style="left:219px;top:263px;width:25px;height:28px;background:#dcf8d8"></div>
<svg class="a" style="left:221px;top:268px" width="16" height="16"><rect x="0" y="0" width="16" height="16" fill="#fff"/><rect x="6" y="0.3" width="4" height="1.5" fill="#737373"/><rect x="1" y="1.5" width="14" height="2" fill="#737373"/><rect x="2" y="4" width="12" height="12" fill="#737373"/><rect x="4" y="6" width="2" height="8" fill="#fff"/><rect x="7" y="6" width="2" height="8" fill="#fff"/><rect x="10" y="6" width="2" height="8" fill="#fff"/></svg>
<div class="a" style="left:240px;top:273px;width:1.5px;height:9px;background:#6b0a2a"></div>
<div class="t" style="left:246px;top:271px;font-size:13.3px;color:#111;">Adele Vance</div>
<div class="a" style="left:244px;top:290px;width:175px;height:1px;background:#f0f0f0"></div>
<div class="a" style="left:419px;top:263px;width:24px;height:28px;background:#d4d4d4"></div>
<div class="a" style="left:419px;top:290px;width:24px;height:1px;background:#fff"></div>
<div class="a" style="left:443px;top:263px;width:65px;height:28px;background:#f0f0f0"></div>
<div class="a" style="left:470px;top:270px;width:13px;height:13px;border:1px solid #b4b4b4;background:#fcfcfc"><div class="a" style="left:1px;top:1px;width:9px;height:9px;border:1px solid #e6e6e6"></div></div>
<div class="t" style="left:510px;top:271px;font-size:13.3px;color:#111;">Move all messages from Microsoft Viva to</div>
<div class="a" style="left:508px;top:290px;width:612px;height:1px;background:#f0f0f0"></div>
<div class="t" style="left:737px;width:100px;text-align:right;top:271px;font-size:13.3px;color:#111;">1</div>
<svg class="a" style="left:844px;top:269px" width="16" height="16"><path d="M2.5 8.5 V0.5 H14.5 V5.5" fill="none" stroke="#555" stroke-width="1"/><rect x="10.3" y="2" width="2.2" height="2.2" fill="#d42a2a"/><path d="M4.2 3.5 H9" stroke="#9a9a9a" stroke-width="1"/><rect x="4.2" y="5.2" width="1.2" height="1.2" fill="#999"/><path d="M0 2.5 H2 M0 4.5 H2 M0 6.5 H2" stroke="#2f7ec1" stroke-width="1"/><circle cx="9.5" cy="9.6" r="4.7" fill="#fff"/><circle cx="9.5" cy="9.6" r="4.5" fill="#2f7ec1"/><path d="M7 8.5 H12 M7 10.8 H12" stroke="#fff" stroke-width="1.1"/></svg>
<div class="t" style="left:862px;top:271px;font-size:13.3px;color:#111;">Condition</div>
<div class="t" style="left:947px;top:271px;font-size:13.3px;color:#111;">Body Contains</div>
<div class="a" style="left:1120px;top:263px;width:256px;height:28px;background:#d4d4d4"></div>
<div class="a" style="left:1120px;top:290px;width:256px;height:1px;background:#f4f4f4"></div>
<div class="a" style="left:1120px;top:263px;width:1px;height:28px;background:#f0f0f0"></div>
<div class="a" style="left:1376px;top:263px;width:317px;height:28px;background:#f0f0f0"></div>
<svg class="a" style="left:1428px;top:268px" width="16" height="16"><path d="M3.5 9 V1.5 H14.5 V6" fill="none" stroke="#555" stroke-width="1"/><rect x="11.2" y="3" width="2.2" height="2.2" fill="#d42a2a"/><path d="M5.2 4.5 H9" stroke="#9a9a9a" stroke-width="1"/><path d="M1 2.5 H3 M1 4.5 H3 M1 6.5 H3" stroke="#2f7ec1" stroke-width="1"/><circle cx="10.5" cy="10.6" r="5.3" fill="#fff"/><circle cx="10.5" cy="10.6" r="4.6" fill="#16a05a"/><path d="M8 10.6 L9.8 12.4 L13 9" fill="none" stroke="#fff" stroke-width="1.4"/></svg>
<div class="a" style="left:1446px;top:270px;width:13px;height:13px;border:1px solid #b4b4b4;background:#f7f7f7"><div class="a" style="left:1px;top:1px;width:9px;height:9px;border:1px solid #e6e6e6"></div></div><svg class="a" style="left:1446px;top:270px" width="13" height="13"><path d="M3.5 6.5 L5.5 10 L10 2.5" fill="none" stroke="#a4a4a4" stroke-width="1.5"/></svg>
<div class="a" style="left:1596px;top:270px;width:13px;height:13px;border:1px solid #b4b4b4;background:#f7f7f7"><div class="a" style="left:1px;top:1px;width:9px;height:9px;border:1px solid #e6e6e6"></div></div>
<div class="a" style="left:83px;top:291px;width:35px;height:27px;background:#c8d9e9"></div>
<div class="a" style="left:119px;top:291px;width:39px;height:27px;background:#d3d9e0"></div>
<div class="a" style="left:159px;top:291px;width:39px;height:27px;background:#d3d9e0"></div>
<div class="a" style="left:83px;top:318px;width:115px;height:1px;background:#fff"></div>
<div class="a" style="left:118px;top:291px;width:1px;height:28px;background:#fff"></div>
<div class="a" style="left:158px;top:291px;width:1px;height:28px;background:#fff"></div>
<div class="t" style="left:16px;width:100px;text-align:right;top:299px;font-size:13.3px;color:#111;">3</div>
<svg class="a" style="left:200px;top:297px" width="17" height="17"><rect x="4.6" y="2.6" width="11" height="8.8" fill="#fff" stroke="#2f7ec1" stroke-width="1.2"/><path d="M6.5 5.8 H11 M6.5 8 H10" stroke="#2f7ec1" stroke-width="1.3"/><rect x="12.2" y="4.3" width="2.1" height="2.1" fill="#2f7ec1"/><path d="M2 4.5 H4.6 M2 6.5 H4.6 M2 8.5 H4.6" stroke="#2f7ec1" stroke-width="1"/></svg>
<div class="a" style="left:219px;top:291px;width:25px;height:28px;background:#dcf8d8"></div>
<svg class="a" style="left:221px;top:296px" width="16" height="16"><rect x="0" y="0" width="16" height="16" fill="#fff"/><rect x="6" y="0.3" width="4" height="1.5" fill="#737373"/><rect x="1" y="1.5" width="14" height="2" fill="#737373"/><rect x="2" y="4" width="12" height="12" fill="#737373"/><rect x="4" y="6" width="2" height="8" fill="#fff"/><rect x="7" y="6" width="2" height="8" fill="#fff"/><rect x="10" y="6" width="2" height="8" fill="#fff"/></svg>
<div class="a" style="left:240px;top:301px;width:1.5px;height:9px;background:#6b0a2a"></div>
<div class="t" style="left:246px;top:299px;font-size:13.3px;color:#111;">Adele Vance</div>
<div class="a" style="left:244px;top:318px;width:175px;height:1px;background:#f0f0f0"></div>
<div class="a" style="left:419px;top:291px;width:24px;height:28px;background:#d4d4d4"></div>
<div class="a" style="left:419px;top:318px;width:24px;height:1px;background:#fff"></div>
<div class="a" style="left:443px;top:291px;width:65px;height:28px;background:#f0f0f0"></div>
<div class="a" style="left:470px;top:298px;width:13px;height:13px;border:1px solid #b4b4b4;background:#fcfcfc"><div class="a" style="left:1px;top:1px;width:9px;height:9px;border:1px solid #e6e6e6"></div></div>
<div class="t" style="left:510px;top:299px;font-size:13.3px;color:#111;">Move all messages from Microsoft Viva to</div>
<div class="a" style="left:508px;top:318px;width:612px;height:1px;background:#f0f0f0"></div>
<div class="t" style="left:737px;width:100px;text-align:right;top:299px;font-size:13.3px;color:#111;">1</div>
<svg class="a" style="left:844px;top:297px" width="16" height="16"><path d="M2.5 8.5 V0.5 H14.5 V5.5" fill="none" stroke="#555" stroke-width="1"/><rect x="10.3" y="2" width="2.2" height="2.2" fill="#d42a2a"/><path d="M4.2 3.5 H9" stroke="#9a9a9a" stroke-width="1"/><rect x="4.2" y="5.2" width="1.2" height="1.2" fill="#999"/><path d="M0 2.5 H2 M0 4.5 H2 M0 6.5 H2" stroke="#2f7ec1" stroke-width="1"/><circle cx="9.5" cy="9.6" r="4.7" fill="#fff"/><circle cx="9.5" cy="9.6" r="4.5" fill="#2f7ec1"/><path d="M7 8.5 H12 M7 10.8 H12" stroke="#fff" stroke-width="1.1"/></svg>
<div class="t" style="left:862px;top:299px;font-size:13.3px;color:#111;">Condition</div>
<div class="t" style="left:947px;top:299px;font-size:13.3px;color:#111;">Body Or Subject Contains</div>
<div class="a" style="left:1120px;top:291px;width:256px;height:28px;background:#d4d4d4"></div>
<div class="a" style="left:1120px;top:318px;width:256px;height:1px;background:#f4f4f4"></div>
<div class="a" style="left:1120px;top:291px;width:1px;height:28px;background:#f0f0f0"></div>
<div class="a" style="left:1376px;top:291px;width:317px;height:28px;background:#f0f0f0"></div>
<svg class="a" style="left:1428px;top:296px" width="16" height="16"><path d="M3.5 9 V1.5 H14.5 V6" fill="none" stroke="#555" stroke-width="1"/><rect x="11.2" y="3" width="2.2" height="2.2" fill="#d42a2a"/><path d="M5.2 4.5 H9" stroke="#9a9a9a" stroke-width="1"/><path d="M1 2.5 H3 M1 4.5 H3 M1 6.5 H3" stroke="#2f7ec1" stroke-width="1"/><circle cx="10.5" cy="10.6" r="5.3" fill="#fff"/><circle cx="10.5" cy="10.6" r="4.6" fill="#16a05a"/><path d="M8 10.6 L9.8 12.4 L13 9" fill="none" stroke="#fff" stroke-width="1.4"/></svg>
<div class="a" style="left:1446px;top:298px;width:13px;height:13px;border:1px solid #b4b4b4;background:#f7f7f7"><div class="a" style="left:1px;top:1px;width:9px;height:9px;border:1px solid #e6e6e6"></div></div><svg class="a" style="left:1446px;top:298px" width="13" height="13"><path d="M3.5 6.5 L5.5 10 L10 2.5" fill="none" stroke="#a4a4a4" stroke-width="1.5"/></svg>
<div class="a" style="left:1596px;top:298px;width:13px;height:13px;border:1px solid #b4b4b4;background:#f7f7f7"><div class="a" style="left:1px;top:1px;width:9px;height:9px;border:1px solid #e6e6e6"></div></div>
<div class="a" style="left:83px;top:319px;width:35px;height:27px;background:#c8d9e9"></div>
<div class="a" style="left:119px;top:319px;width:39px;height:27px;background:#d3d9e0"></div>
<div class="a" style="left:159px;top:319px;width:39px;height:27px;background:#d3d9e0"></div>
<div class="a" style="left:83px;top:346px;width:115px;height:1px;background:#fff"></div>
<div class="a" style="left:118px;top:319px;width:1px;height:28px;background:#fff"></div>
<div class="a" style="left:158px;top:319px;width:1px;height:28px;background:#fff"></div>
<div class="t" style="left:16px;width:100px;text-align:right;top:327px;font-size:13.3px;color:#111;">3</div>
<svg class="a" style="left:200px;top:325px" width="17" height="17"><rect x="4.6" y="2.6" width="11" height="8.8" fill="#fff" stroke="#2f7ec1" stroke-width="1.2"/><path d="M6.5 5.8 H11 M6.5 8 H10" stroke="#2f7ec1" stroke-width="1.3"/><rect x="12.2" y="4.3" width="2.1" height="2.1" fill="#2f7ec1"/><path d="M2 4.5 H4.6 M2 6.5 H4.6 M2 8.5 H4.6" stroke="#2f7ec1" stroke-width="1"/></svg>
<div class="a" style="left:219px;top:319px;width:25px;height:28px;background:#dcf8d8"></div>
<svg class="a" style="left:221px;top:324px" width="16" height="16"><rect x="0" y="0" width="16" height="16" fill="#fff"/><rect x="6" y="0.3" width="4" height="1.5" fill="#737373"/><rect x="1" y="1.5" width="14" height="2" fill="#737373"/><rect x="2" y="4" width="12" height="12" fill="#737373"/><rect x="4" y="6" width="2" height="8" fill="#fff"/><rect x="7" y="6" width="2" height="8" fill="#fff"/><rect x="10" y="6" width="2" height="8" fill="#fff"/></svg>
<div class="a" style="left:240px;top:329px;width:1.5px;height:9px;background:#6b0a2a"></div>
<div class="t" style="left:246px;top:327px;font-size:13.3px;color:#111;">Adele Vance</div>
<div class="a" style="left:244px;top:346px;width:175px;height:1px;background:#f0f0f0"></div>
<div class="a" style="left:419px;top:319px;width:24px;height:28px;background:#d4d4d4"></div>
<div class="a" style="left:419px;top:346px;width:24px;height:1px;background:#fff"></div>
<div class="a" style="left:443px;top:319px;width:65px;height:28px;background:#f0f0f0"></div>
<div class="a" style="left:470px;top:326px;width:13px;height:13px;border:1px solid #b4b4b4;background:#fcfcfc"><div class="a" style="left:1px;top:1px;width:9px;height:9px;border:1px solid #e6e6e6"></div></div>
<div class="t" style="left:510px;top:327px;font-size:13.3px;color:#111;">Move all messages from Microsoft Viva to</div>
<div class="a" style="left:508px;top:346px;width:612px;height:1px;background:#f0f0f0"></div>
<div class="t" style="left:737px;width:100px;text-align:right;top:327px;font-size:13.3px;color:#111;">1</div>
<svg class="a" style="left:844px;top:325px" width="16" height="16"><path d="M2.5 8.5 V0.5 H14.5 V5.5" fill="none" stroke="#555" stroke-width="1"/><rect x="10.3" y="2" width="2.2" height="2.2" fill="#d42a2a"/><path d="M4.2 3.5 H9" stroke="#9a9a9a" stroke-width="1"/><rect x="4.2" y="5.2" width="1.2" height="1.2" fill="#999"/><path d="M0 2.5 H2 M0 4.5 H2 M0 6.5 H2" stroke="#2f7ec1" stroke-width="1"/><circle cx="9.5" cy="9.6" r="4.7" fill="#fff"/><circle cx="9.5" cy="9.6" r="4.5" fill="#2f7ec1"/><path d="M7 8.5 H12 M7 10.8 H12" stroke="#fff" stroke-width="1.1"/></svg>
<div class="t" style="left:862px;top:327px;font-size:13.3px;color:#111;">Condition</div>
<div class="t" style="left:947px;top:327px;font-size:13.3px;color:#111;">Categories</div>
<div class="a" style="left:1120px;top:319px;width:256px;height:28px;background:#d4d4d4"></div>
<div class="a" style="left:1120px;top:346px;width:256px;height:1px;background:#f4f4f4"></div>
<div class="a" style="left:1120px;top:319px;width:1px;height:28px;background:#f0f0f0"></div>
<div class="a" style="left:1376px;top:319px;width:317px;height:28px;background:#f0f0f0"></div>
<svg class="a" style="left:1428px;top:324px" width="16" height="16"><path d="M3.5 9 V1.5 H14.5 V6" fill="none" stroke="#555" stroke-width="1"/><rect x="11.2" y="3" width="2.2" height="2.2" fill="#d42a2a"/><path d="M5.2 4.5 H9" stroke="#9a9a9a" stroke-width="1"/><path d="M1 2.5 H3 M1 4.5 H3 M1 6.5 H3" stroke="#2f7ec1" stroke-width="1"/><circle cx="10.5" cy="10.6" r="5.3" fill="#fff"/><circle cx="10.5" cy="10.6" r="4.6" fill="#16a05a"/><path d="M8 10.6 L9.8 12.4 L13 9" fill="none" stroke="#fff" stroke-width="1.4"/></svg>
<div class="a" style="left:1446px;top:326px;width:13px;height:13px;border:1px solid #b4b4b4;background:#f7f7f7"><div class="a" style="left:1px;top:1px;width:9px;height:9px;border:1px solid #e6e6e6"></div></div><svg class="a" style="left:1446px;top:326px" width="13" height="13"><path d="M3.5 6.5 L5.5 10 L10 2.5" fill="none" stroke="#a4a4a4" stroke-width="1.5"/></svg>
<div class="a" style="left:1596px;top:326px;width:13px;height:13px;border:1px solid #b4b4b4;background:#f7f7f7"><div class="a" style="left:1px;top:1px;width:9px;height:9px;border:1px solid #e6e6e6"></div></div>
<div class="a" style="left:83px;top:347px;width:35px;height:27px;background:#c8d9e9"></div>
<div class="a" style="left:119px;top:347px;width:39px;height:27px;background:#d3d9e0"></div>
<div class="a" style="left:159px;top:347px;width:39px;height:27px;background:#d3d9e0"></div>
<div class="a" style="left:83px;top:374px;width:115px;height:1px;background:#fff"></div>
<div class="a" style="left:118px;top:347px;width:1px;height:28px;background:#fff"></div>
<div class="a" style="left:158px;top:347px;width:1px;height:28px;background:#fff"></div>
<div class="t" style="left:16px;width:100px;text-align:right;top:355px;font-size:13.3px;color:#111;">3</div>
<svg class="a" style="left:200px;top:353px" width="17" height="17"><rect x="4.6" y="2.6" width="11" height="8.8" fill="#fff" stroke="#2f7ec1" stroke-width="1.2"/><path d="M6.5 5.8 H11 M6.5 8 H10" stroke="#2f7ec1" stroke-width="1.3"/><rect x="12.2" y="4.3" width="2.1" height="2.1" fill="#2f7ec1"/><path d="M2 4.5 H4.6 M2 6.5 H4.6 M2 8.5 H4.6" stroke="#2f7ec1" stroke-width="1"/></svg>
<div class="a" style="left:219px;top:347px;width:25px;height:28px;background:#dcf8d8"></div>
<svg class="a" style="left:221px;top:352px" width="16" height="16"><rect x="0" y="0" width="16" height="16" fill="#fff"/><rect x="6" y="0.3" width="4" height="1.5" fill="#737373"/><rect x="1" y="1.5" width="14" height="2" fill="#737373"/><rect x="2" y="4" width="12" height="12" fill="#737373"/><rect x="4" y="6" width="2" height="8" fill="#fff"/><rect x="7" y="6" width="2" height="8" fill="#fff"/><rect x="10" y="6" width="2" height="8" fill="#fff"/></svg>
<div class="a" style="left:240px;top:357px;width:1.5px;height:9px;background:#6b0a2a"></div>
<div class="t" style="left:246px;top:355px;font-size:13.3px;color:#111;">Adele Vance</div>
<div class="a" style="left:244px;top:374px;width:175px;height:1px;background:#f0f0f0"></div>
<div class="a" style="left:419px;top:347px;width:24px;height:28px;background:#d4d4d4"></div>
<div class="a" style="left:419px;top:374px;width:24px;height:1px;background:#fff"></div>
<div class="a" style="left:443px;top:347px;width:65px;height:28px;background:#f0f0f0"></div>
<div class="a" style="left:470px;top:354px;width:13px;height:13px;border:1px solid #b4b4b4;background:#fcfcfc"><div class="a" style="left:1px;top:1px;width:9px;height:9px;border:1px solid #e6e6e6"></div></div>
<div class="t" style="left:510px;top:355px;font-size:13.3px;color:#111;">Move all messages from Microsoft Viva to</div>
<div class="a" style="left:508px;top:374px;width:612px;height:1px;background:#f0f0f0"></div>
<div class="t" style="left:737px;width:100px;text-align:right;top:355px;font-size:13.3px;color:#111;">1</div>
<svg class="a" style="left:844px;top:353px" width="16" height="16"><path d="M2.5 8.5 V0.5 H14.5 V5.5" fill="none" stroke="#555" stroke-width="1"/><rect x="10.3" y="2" width="2.2" height="2.2" fill="#d42a2a"/><path d="M4.2 3.5 H9" stroke="#9a9a9a" stroke-width="1"/><rect x="4.2" y="5.2" width="1.2" height="1.2" fill="#999"/><path d="M0 2.5 H2 M0 4.5 H2 M0 6.5 H2" stroke="#2f7ec1" stroke-width="1"/><circle cx="9.5" cy="9.6" r="4.7" fill="#fff"/><circle cx="9.5" cy="9.6" r="4.5" fill="#2f7ec1"/><path d="M7 8.5 H12 M7 10.8 H12" stroke="#fff" stroke-width="1.1"/></svg>
<div class="t" style="left:862px;top:355px;font-size:13.3px;color:#111;">Condition</div>
<div class="t" style="left:947px;top:355px;font-size:13.3px;color:#111;">From Addresses</div>
<div class="a" style="left:1120px;top:347px;width:256px;height:28px;background:#fcfcfc"></div>
<div class="t" style="left:1123px;top:355px;font-size:13.3px;color:#111;">viva-noreply@microsoft.com &lt;viva-noreply</div>
<div class="a" style="left:1376px;top:347px;width:317px;height:28px;background:#f0f0f0"></div>
<svg class="a" style="left:1428px;top:352px" width="16" height="16"><path d="M3.5 9 V1.5 H14.5 V6" fill="none" stroke="#555" stroke-width="1"/><rect x="11.2" y="3" width="2.2" height="2.2" fill="#d42a2a"/><path d="M5.2 4.5 H9" stroke="#9a9a9a" stroke-width="1"/><path d="M1 2.5 H3 M1 4.5 H3 M1 6.5 H3" stroke="#2f7ec1" stroke-width="1"/><circle cx="10.5" cy="10.6" r="5.3" fill="#fff"/><circle cx="10.5" cy="10.6" r="4.6" fill="#16a05a"/><path d="M8 10.6 L9.8 12.4 L13 9" fill="none" stroke="#fff" stroke-width="1.4"/></svg>
<div class="a" style="left:1446px;top:354px;width:13px;height:13px;border:1px solid #b4b4b4;background:#f7f7f7"><div class="a" style="left:1px;top:1px;width:9px;height:9px;border:1px solid #e6e6e6"></div></div><svg class="a" style="left:1446px;top:354px" width="13" height="13"><path d="M3.5 6.5 L5.5 10 L10 2.5" fill="none" stroke="#a4a4a4" stroke-width="1.5"/></svg>
<div class="a" style="left:1596px;top:354px;width:13px;height:13px;border:1px solid #b4b4b4;background:#f7f7f7"><div class="a" style="left:1px;top:1px;width:9px;height:9px;border:1px solid #e6e6e6"></div></div>
<div class="a" style="left:83px;top:375px;width:35px;height:27px;background:#c8d9e9"></div>
<div class="a" style="left:119px;top:375px;width:39px;height:27px;background:#d3d9e0"></div>
<div class="a" style="left:159px;top:375px;width:39px;height:27px;background:#d3d9e0"></div>
<div class="a" style="left:83px;top:402px;width:115px;height:1px;background:#fff"></div>
<div class="a" style="left:118px;top:375px;width:1px;height:28px;background:#fff"></div>
<div class="a" style="left:158px;top:375px;width:1px;height:28px;background:#fff"></div>
<div class="t" style="left:16px;width:100px;text-align:right;top:383px;font-size:13.3px;color:#111;">3</div>
<svg class="a" style="left:200px;top:381px" width="17" height="17"><rect x="4.6" y="2.6" width="11" height="8.8" fill="#fff" stroke="#2f7ec1" stroke-width="1.2"/><path d="M6.5 5.8 H11 M6.5 8 H10" stroke="#2f7ec1" stroke-width="1.3"/><rect x="12.2" y="4.3" width="2.1" height="2.1" fill="#2f7ec1"/><path d="M2 4.5 H4.6 M2 6.5 H4.6 M2 8.5 H4.6" stroke="#2f7ec1" stroke-width="1"/></svg>
<div class="a" style="left:219px;top:375px;width:25px;height:28px;background:#dcf8d8"></div>
<svg class="a" style="left:221px;top:380px" width="16" height="16"><rect x="0" y="0" width="16" height="16" fill="#fff"/><rect x="6" y="0.3" width="4" height="1.5" fill="#737373"/><rect x="1" y="1.5" width="14" height="2" fill="#737373"/><rect x="2" y="4" width="12" height="12" fill="#737373"/><rect x="4" y="6" width="2" height="8" fill="#fff"/><rect x="7" y="6" width="2" height="8" fill="#fff"/><rect x="10" y="6" width="2" height="8" fill="#fff"/></svg>
<div class="a" style="left:240px;top:385px;width:1.5px;height:9px;background:#6b0a2a"></div>
<div class="t" style="left:246px;top:383px;font-size:13.3px;color:#111;">Adele Vance</div>
<div class="a" style="left:244px;top:402px;width:175px;height:1px;background:#f0f0f0"></div>
<div class="a" style="left:419px;top:375px;width:24px;height:28px;background:#d4d4d4"></div>
<div class="a" style="left:419px;top:402px;width:24px;height:1px;background:#fff"></div>
<div class="a" style="left:443px;top:375px;width:65px;height:28px;background:#f0f0f0"></div>
<div class="a" style="left:470px;top:382px;width:13px;height:13px;border:1px solid #b4b4b4;background:#fcfcfc"><div class="a" style="left:1px;top:1px;width:9px;height:9px;border:1px solid #e6e6e6"></div></div>
<div class="t" style="left:510px;top:383px;font-size:13.3px;color:#111;">Move all messages from Microsoft Viva to</div>
<div class="a" style="left:508px;top:402px;width:612px;height:1px;background:#f0f0f0"></div>
<div class="t" style="left:737px;width:100px;text-align:right;top:383px;font-size:13.3px;color:#111;">1</div>
<svg class="a" style="left:844px;top:381px" width="16" height="16"><path d="M2.5 8.5 V0.5 H14.5 V5.5" fill="none" stroke="#555" stroke-width="1"/><rect x="10.3" y="2" width="2.2" height="2.2" fill="#d42a2a"/><path d="M4.2 3.5 H9" stroke="#9a9a9a" stroke-width="1"/><rect x="4.2" y="5.2" width="1.2" height="1.2" fill="#999"/><path d="M0 2.5 H2 M0 4.5 H2 M0 6.5 H2" stroke="#2f7ec1" stroke-width="1"/><circle cx="9.5" cy="9.6" r="4.7" fill="#fff"/><circle cx="9.5" cy="9.6" r="4.5" fill="#2f7ec1"/><path d="M7 8.5 H12 M7 10.8 H12" stroke="#fff" stroke-width="1.1"/></svg>
<div class="t" style="left:862px;top:383px;font-size:13.3px;color:#111;">Condition</div>
<div class="t" style="left:947px;top:383px;font-size:13.3px;color:#111;">Has Attachments</div>
<div class="a" style="left:1120px;top:375px;width:256px;height:28px;background:#d4d4d4"></div>
<div class="a" style="left:1120px;top:402px;width:256px;height:1px;background:#f4f4f4"></div>
<div class="a" style="left:1120px;top:375px;width:1px;height:28px;background:#f0f0f0"></div>
<div class="a" style="left:1376px;top:375px;width:317px;height:28px;background:#f0f0f0"></div>
<svg class="a" style="left:1428px;top:380px" width="16" height="16"><path d="M3.5 9 V1.5 H14.5 V6" fill="none" stroke="#555" stroke-width="1"/><rect x="11.2" y="3" width="2.2" height="2.2" fill="#d42a2a"/><path d="M5.2 4.5 H9" stroke="#9a9a9a" stroke-width="1"/><path d="M1 2.5 H3 M1 4.5 H3 M1 6.5 H3" stroke="#2f7ec1" stroke-width="1"/><circle cx="10.5" cy="10.6" r="5.3" fill="#fff"/><circle cx="10.5" cy="10.6" r="4.6" fill="#16a05a"/><path d="M8 10.6 L9.8 12.4 L13 9" fill="none" stroke="#fff" stroke-width="1.4"/></svg>
<div class="a" style="left:1446px;top:382px;width:13px;height:13px;border:1px solid #b4b4b4;background:#f7f7f7"><div class="a" style="left:1px;top:1px;width:9px;height:9px;border:1px solid #e6e6e6"></div></div><svg class="a" style="left:1446px;top:382px" width="13" height="13"><path d="M3.5 6.5 L5.5 10 L10 2.5" fill="none" stroke="#a4a4a4" stroke-width="1.5"/></svg>
<div class="a" style="left:1596px;top:382px;width:13px;height:13px;border:1px solid #b4b4b4;background:#f7f7f7"><div class="a" style="left:1px;top:1px;width:9px;height:9px;border:1px solid #e6e6e6"></div></div>
<div class="a" style="left:83px;top:403px;width:35px;height:27px;background:#c8d9e9"></div>
<div class="a" style="left:119px;top:403px;width:39px;height:27px;background:#d3d9e0"></div>
<div class="a" style="left:159px;top:403px;width:39px;height:27px;background:#d3d9e0"></div>
<div class="a" style="left:83px;top:430px;width:115px;height:1px;background:#fff"></div>
<div class="a" style="left:118px;top:403px;width:1px;height:28px;background:#fff"></div>
<div class="a" style="left:158px;top:403px;width:1px;height:28px;background:#fff"></div>
<div class="t" style="left:16px;width:100px;text-align:right;top:411px;font-size:13.3px;color:#111;">3</div>
<svg class="a" style="left:200px;top:409px" width="17" height="17"><rect x="4.6" y="2.6" width="11" height="8.8" fill="#fff" stroke="#2f7ec1" stroke-width="1.2"/><path d="M6.5 5.8 H11 M6.5 8 H10" stroke="#2f7ec1" stroke-width="1.3"/><rect x="12.2" y="4.3" width="2.1" height="2.1" fill="#2f7ec1"/><path d="M2 4.5 H4.6 M2 6.5 H4.6 M2 8.5 H4.6" stroke="#2f7ec1" stroke-width="1"/></svg>
<div class="a" style="left:219px;top:403px;width:25px;height:28px;background:#dcf8d8"></div>
<svg class="a" style="left:221px;top:408px" width="16" height="16"><rect x="0" y="0" width="16" height="16" fill="#fff"/><rect x="6" y="0.3" width="4" height="1.5" fill="#737373"/><rect x="1" y="1.5" width="14" height="2" fill="#737373"/><rect x="2" y="4" width="12" height="12" fill="#737373"/><rect x="4" y="6" width="2" height="8" fill="#fff"/><rect x="7" y="6" width="2" height="8" fill="#fff"/><rect x="10" y="6" width="2" height="8" fill="#fff"/></svg>
<div class="a" style="left:240px;top:413px;width:1.5px;height:9px;background:#6b0a2a"></div>
<div class="t" style="left:246px;top:411px;font-size:13.3px;color:#111;">Adele Vance</div>
<div class="a" style="left:244px;top:430px;width:175px;height:1px;background:#f0f0f0"></div>
<div class="a" style="left:419px;top:403px;width:24px;height:28px;background:#d4d4d4"></div>
<div class="a" style="left:419px;top:430px;width:24px;height:1px;background:#fff"></div>
<div class="a" style="left:443px;top:403px;width:65px;height:28px;background:#f0f0f0"></div>
<div class="a" style="left:470px;top:410px;width:13px;height:13px;border:1px solid #b4b4b4;background:#fcfcfc"><div class="a" style="left:1px;top:1px;width:9px;height:9px;border:1px solid #e6e6e6"></div></div>
<div class="t" style="left:510px;top:411px;font-size:13.3px;color:#111;">Move all messages from Microsoft Viva to</div>
<div class="a" style="left:508px;top:430px;width:612px;height:1px;background:#f0f0f0"></div>
<div class="t" style="left:737px;width:100px;text-align:right;top:411px;font-size:13.3px;color:#111;">1</div>
<svg class="a" style="left:844px;top:409px" width="16" height="16"><path d="M2.5 8.5 V0.5 H14.5 V5.5" fill="none" stroke="#555" stroke-width="1"/><rect x="10.3" y="2" width="2.2" height="2.2" fill="#d42a2a"/><path d="M4.2 3.5 H9" stroke="#9a9a9a" stroke-width="1"/><rect x="4.2" y="5.2" width="1.2" height="1.2" fill="#999"/><path d="M0 2.5 H2 M0 4.5 H2 M0 6.5 H2" stroke="#2f7ec1" stroke-width="1"/><circle cx="9.5" cy="9.6" r="4.7" fill="#fff"/><circle cx="9.5" cy="9.6" r="4.5" fill="#2f7ec1"/><path d="M7 8.5 H12 M7 10.8 H12" stroke="#fff" stroke-width="1.1"/></svg>
<div class="t" style="left:862px;top:411px;font-size:13.3px;color:#111;">Condition</div>
<div class="t" style="left:947px;top:411px;font-size:13.3px;color:#111;">Header Contains</div>
<div class="a" style="left:1120px;top:403px;width:256px;height:28px;background:#d4d4d4"></div>
<div class="a" style="left:1120px;top:430px;width:256px;height:1px;background:#f4f4f4"></div>
<div class="a" style="left:1120px;top:403px;width:1px;height:28px;background:#f0f0f0"></div>
<div class="a" style="left:1376px;top:403px;width:317px;height:28px;background:#f0f0f0"></div>
<svg class="a" style="left:1428px;top:408px" width="16" height="16"><path d="M3.5 9 V1.5 H14.5 V6" fill="none" stroke="#555" stroke-width="1"/><rect x="11.2" y="3" width="2.2" height="2.2" fill="#d42a2a"/><path d="M5.2 4.5 H9" stroke="#9a9a9a" stroke-width="1"/><path d="M1 2.5 H3 M1 4.5 H3 M1 6.5 H3" stroke="#2f7ec1" stroke-width="1"/><circle cx="10.5" cy="10.6" r="5.3" fill="#fff"/><circle cx="10.5" cy="10.6" r="4.6" fill="#16a05a"/><path d="M8 10.6 L9.8 12.4 L13 9" fill="none" stroke="#fff" stroke-width="1.4"/></svg>
<div class="a" style="left:1446px;top:410px;width:13px;height:13px;border:1px solid #b4b4b4;background:#f7f7f7"><div class="a" style="left:1px;top:1px;width:9px;height:9px;border:1px solid #e6e6e6"></div></div><svg class="a" style="left:1446px;top:410px" width="13" height="13"><path d="M3.5 6.5 L5.5 10 L10 2.5" fill="none" stroke="#a4a4a4" stroke-width="1.5"/></svg>
<div class="a" style="left:1596px;top:410px;width:13px;height:13px;border:1px solid #b4b4b4;background:#f7f7f7"><div class="a" style="left:1px;top:1px;width:9px;height:9px;border:1px solid #e6e6e6"></div></div>
<div class="a" style="left:83px;top:431px;width:35px;height:27px;background:#c8d9e9"></div>
<div class="a" style="left:119px;top:431px;width:39px;height:27px;background:#d3d9e0"></div>
<div class="a" style="left:159px;top:431px;width:39px;height:27px;background:#d3d9e0"></div>
<div class="a" style="left:83px;top:458px;width:115px;height:1px;background:#fff"></div>
<div class="a" style="left:118px;top:431px;width:1px;height:28px;background:#fff"></div>
<div class="a" style="left:158px;top:431px;width:1px;height:28px;background:#fff"></div>
<div class="t" style="left:16px;width:100px;text-align:right;top:439px;font-size:13.3px;color:#111;">3</div>
<svg class="a" style="left:200px;top:437px" width="17" height="17"><rect x="4.6" y="2.6" width="11" height="8.8" fill="#fff" stroke="#2f7ec1" stroke-width="1.2"/><path d="M6.5 5.8 H11 M6.5 8 H10" stroke="#2f7ec1" stroke-width="1.3"/><rect x="12.2" y="4.3" width="2.1" height="2.1" fill="#2f7ec1"/><path d="M2 4.5 H4.6 M2 6.5 H4.6 M2 8.5 H4.6" stroke="#2f7ec1" stroke-width="1"/></svg>
<div class="a" style="left:219px;top:431px;width:25px;height:28px;background:#dcf8d8"></div>
<svg class="a" style="left:221px;top:436px" width="16" height="16"><rect x="0" y="0" width="16" height="16" fill="#fff"/><rect x="6" y="0.3" width="4" height="1.5" fill="#737373"/><rect x="1" y="1.5" width="14" height="2" fill="#737373"/><rect x="2" y="4" width="12" height="12" fill="#737373"/><rect x="4" y="6" width="2" height="8" fill="#fff"/><rect x="7" y="6" width="2" height="8" fill="#fff"/><rect x="10" y="6" width="2" height="8" fill="#fff"/></svg>
<div class="a" style="left:240px;top:441px;width:1.5px;height:9px;background:#6b0a2a"></div>
<div class="t" style="left:246px;top:439px;font-size:13.3px;color:#111;">Adele Vance</div>
<div class="a" style="left:244px;top:458px;width:175px;height:1px;background:#f0f0f0"></div>
<div class="a" style="left:419px;top:431px;width:24px;height:28px;background:#d4d4d4"></div>
<div class="a" style="left:419px;top:458px;width:24px;height:1px;background:#fff"></div>
<div class="a" style="left:443px;top:431px;width:65px;height:28px;background:#f0f0f0"></div>
<div class="a" style="left:470px;top:438px;width:13px;height:13px;border:1px solid #b4b4b4;background:#fcfcfc"><div class="a" style="left:1px;top:1px;width:9px;height:9px;border:1px solid #e6e6e6"></div></div>
<div class="t" style="left:510px;top:439px;font-size:13.3px;color:#111;">Move all messages from Microsoft Viva to</div>
<div class="a" style="left:508px;top:458px;width:612px;height:1px;background:#f0f0f0"></div>
<div class="t" style="left:737px;width:100px;text-align:right;top:439px;font-size:13.3px;color:#111;">1</div>
<svg class="a" style="left:844px;top:437px" width="16" height="16"><path d="M2.5 8.5 V0.5 H14.5 V5.5" fill="none" stroke="#555" stroke-width="1"/><rect x="10.3" y="2" width="2.2" height="2.2" fill="#d42a2a"/><path d="M4.2 3.5 H9" stroke="#9a9a9a" stroke-width="1"/><rect x="4.2" y="5.2" width="1.2" height="1.2" fill="#999"/><path d="M0 2.5 H2 M0 4.5 H2 M0 6.5 H2" stroke="#2f7ec1" stroke-width="1"/><circle cx="9.5" cy="9.6" r="4.7" fill="#fff"/><circle cx="9.5" cy="9.6" r="4.5" fill="#2f7ec1"/><path d="M7 8.5 H12 M7 10.8 H12" stroke="#fff" stroke-width="1.1"/></svg>
<div class="t" style="left:862px;top:439px;font-size:13.3px;color:#111;">Condition</div>
<div class="t" style="left:947px;top:439px;font-size:13.3px;color:#111;">Importance</div>
<div class="a" style="left:1120px;top:431px;width:256px;height:28px;background:#d4d4d4"></div>
<div class="a" style="left:1120px;top:458px;width:256px;height:1px;background:#f4f4f4"></div>
<div class="a" style="left:1120px;top:431px;width:1px;height:28px;background:#f0f0f0"></div>
<div class="a" style="left:1376px;top:431px;width:317px;height:28px;background:#f0f0f0"></div>
<svg class="a" style="left:1428px;top:436px" width="16" height="16"><path d="M3.5 9 V1.5 H14.5 V6" fill="none" stroke="#555" stroke-width="1"/><rect x="11.2" y="3" width="2.2" height="2.2" fill="#d42a2a"/><path d="M5.2 4.5 H9" stroke="#9a9a9a" stroke-width="1"/><path d="M1 2.5 H3 M1 4.5 H3 M1 6.5 H3" stroke="#2f7ec1" stroke-width="1"/><circle cx="10.5" cy="10.6" r="5.3" fill="#fff"/><circle cx="10.5" cy="10.6" r="4.6" fill="#16a05a"/><path d="M8 10.6 L9.8 12.4 L13 9" fill="none" stroke="#fff" stroke-width="1.4"/></svg>
<div class="a" style="left:1446px;top:438px;width:13px;height:13px;border:1px solid #b4b4b4;background:#f7f7f7"><div class="a" style="left:1px;top:1px;width:9px;height:9px;border:1px solid #e6e6e6"></div></div><svg class="a" style="left:1446px;top:438px" width="13" height="13"><path d="M3.5 6.5 L5.5 10 L10 2.5" fill="none" stroke="#a4a4a4" stroke-width="1.5"/></svg>
<div class="a" style="left:1596px;top:438px;width:13px;height:13px;border:1px solid #b4b4b4;background:#f7f7f7"><div class="a" style="left:1px;top:1px;width:9px;height:9px;border:1px solid #e6e6e6"></div></div>
<div class="a" style="left:83px;top:459px;width:35px;height:27px;background:#c8d9e9"></div>
<div class="a" style="left:119px;top:459px;width:39px;height:27px;background:#d3d9e0"></div>
<div class="a" style="left:159px;top:459px;width:39px;height:27px;background:#d3d9e0"></div>
<div class="a" style="left:83px;top:486px;width:115px;height:1px;background:#fff"></div>
<div class="a" style="left:118px;top:459px;width:1px;height:28px;background:#fff"></div>
<div class="a" style="left:158px;top:459px;width:1px;height:28px;background:#fff"></div>
<div class="t" style="left:16px;width:100px;text-align:right;top:467px;font-size:13.3px;color:#111;">3</div>
<svg class="a" style="left:200px;top:465px" width="17" height="17"><rect x="4.6" y="2.6" width="11" height="8.8" fill="#fff" stroke="#2f7ec1" stroke-width="1.2"/><path d="M6.5 5.8 H11 M6.5 8 H10" stroke="#2f7ec1" stroke-width="1.3"/><rect x="12.2" y="4.3" width="2.1" height="2.1" fill="#2f7ec1"/><path d="M2 4.5 H4.6 M2 6.5 H4.6 M2 8.5 H4.6" stroke="#2f7ec1" stroke-width="1"/></svg>
<div class="a" style="left:219px;top:459px;width:25px;height:28px;background:#dcf8d8"></div>
<svg class="a" style="left:221px;top:464px" width="16" height="16"><rect x="0" y="0" width="16" height="16" fill="#fff"/><rect x="6" y="0.3" width="4" height="1.5" fill="#737373"/><rect x="1" y="1.5" width="14" height="2" fill="#737373"/><rect x="2" y="4" width="12" height="12" fill="#737373"/><rect x="4" y="6" width="2" height="8" fill="#fff"/><rect x="7" y="6" width="2" height="8" fill="#fff"/><rect x="10" y="6" width="2" height="8" fill="#fff"/></svg>
<div class="a" style="left:240px;top:469px;width:1.5px;height:9px;background:#6b0a2a"></div>
<div class="t" style="left:246px;top:467px;font-size:13.3px;color:#111;">Adele Vance</div>
<div class="a" style="left:244px;top:486px;width:175px;height:1px;background:#f0f0f0"></div>
<div class="a" style="left:419px;top:459px;width:24px;height:28px;background:#d4d4d4"></div>
<div class="a" style="left:419px;top:486px;width:24px;height:1px;background:#fff"></div>
<div class="a" style="left:443px;top:459px;width:65px;height:28px;background:#f0f0f0"></div>
<div class="a" style="left:470px;top:466px;width:13px;height:13px;border:1px solid #b4b4b4;background:#fcfcfc"><div class="a" style="left:1px;top:1px;width:9px;height:9px;border:1px solid #e6e6e6"></div></div>
<div class="t" style="left:510px;top:467px;font-size:13.3px;color:#111;">Move all messages from Microsoft Viva to</div>
<div class="a" style="left:508px;top:486px;width:612px;height:1px;background:#f0f0f0"></div>
<div class="t" style="left:737px;width:100px;text-align:right;top:467px;font-size:13.3px;color:#111;">1</div>
<svg class="a" style="left:844px;top:465px" width="16" height="16"><path d="M2.5 8.5 V0.5 H14.5 V5.5" fill="none" stroke="#555" stroke-width="1"/><rect x="10.3" y="2" width="2.2" height="2.2" fill="#d42a2a"/><path d="M4.2 3.5 H9" stroke="#9a9a9a" stroke-width="1"/><rect x="4.2" y="5.2" width="1.2" height="1.2" fill="#999"/><path d="M0 2.5 H2 M0 4.5 H2 M0 6.5 H2" stroke="#2f7ec1" stroke-width="1"/><circle cx="9.5" cy="9.6" r="4.7" fill="#fff"/><circle cx="9.5" cy="9.6" r="4.5" fill="#2f7ec1"/><path d="M7 8.5 H12 M7 10.8 H12" stroke="#fff" stroke-width="1.1"/></svg>
<div class="t" style="left:862px;top:467px;font-size:13.3px;color:#111;">Condition</div>
<div class="t" style="left:947px;top:467px;font-size:13.3px;color:#111;">Is an Approval Request</div>
<div class="a" style="left:1120px;top:459px;width:256px;height:28px;background:#d4d4d4"></div>
<div class="a" style="left:1120px;top:486px;width:256px;height:1px;background:#f4f4f4"></div>
<div class="a" style="left:1120px;top:459px;width:1px;height:28px;background:#f0f0f0"></div>
<div class="a" style="left:1376px;top:459px;width:317px;height:28px;background:#f0f0f0"></div>
<svg class="a" style="left:1428px;top:464px" width="16" height="16"><path d="M3.5 9 V1.5 H14.5 V6" fill="none" stroke="#555" stroke-width="1"/><rect x="11.2" y="3" width="2.2" height="2.2" fill="#d42a2a"/><path d="M5.2 4.5 H9" stroke="#9a9a9a" stroke-width="1"/><path d="M1 2.5 H3 M1 4.5 H3 M1 6.5 H3" stroke="#2f7ec1" stroke-width="1"/><circle cx="10.5" cy="10.6" r="5.3" fill="#fff"/><circle cx="10.5" cy="10.6" r="4.6" fill="#16a05a"/><path d="M8 10.6 L9.8 12.4 L13 9" fill="none" stroke="#fff" stroke-width="1.4"/></svg>
<div class="a" style="left:1446px;top:466px;width:13px;height:13px;border:1px solid #b4b4b4;background:#f7f7f7"><div class="a" style="left:1px;top:1px;width:9px;height:9px;border:1px solid #e6e6e6"></div></div><svg class="a" style="left:1446px;top:466px" width="13" height="13"><path d="M3.5 6.5 L5.5 10 L10 2.5" fill="none" stroke="#a4a4a4" stroke-width="1.5"/></svg>
<div class="a" style="left:1596px;top:466px;width:13px;height:13px;border:1px solid #b4b4b4;background:#f7f7f7"><div class="a" style="left:1px;top:1px;width:9px;height:9px;border:1px solid #e6e6e6"></div></div>
<div class="a" style="left:83px;top:487px;width:35px;height:27px;background:#c8d9e9"></div>
<div class="a" style="left:119px;top:487px;width:39px;height:27px;background:#d3d9e0"></div>
<div class="a" style="left:159px;top:487px;width:39px;height:27px;background:#d3d9e0"></div>
<div class="a" style="left:83px;top:514px;width:115px;height:1px;background:#fff"></div>
<div class="a" style="left:118px;top:487px;width:1px;height:28px;background:#fff"></div>
<div class="a" style="left:158px;top:487px;width:1px;height:28px;background:#fff"></div>
<div class="t" style="left:16px;width:100px;text-align:right;top:495px;font-size:13.3px;color:#111;">3</div>
<svg class="a" style="left:200px;top:493px" width="17" height="17"><rect x="4.6" y="2.6" width="11" height="8.8" fill="#fff" stroke="#2f7ec1" stroke-width="1.2"/><path d="M6.5 5.8 H11 M6.5 8 H10" stroke="#2f7ec1" stroke-width="1.3"/><rect x="12.2" y="4.3" width="2.1" height="2.1" fill="#2f7ec1"/><path d="M2 4.5 H4.6 M2 6.5 H4.6 M2 8.5 H4.6" stroke="#2f7ec1" stroke-width="1"/></svg>
<div class="a" style="left:219px;top:487px;width:25px;height:28px;background:#dcf8d8"></div>
<svg class="a" style="left:221px;top:492px" width="16" height="16"><rect x="0" y="0" width="16" height="16" fill="#fff"/><rect x="6" y="0.3" width="4" height="1.5" fill="#737373"/><rect x="1" y="1.5" width="14" height="2" fill="#737373"/><rect x="2" y="4" width="12" height="12" fill="#737373"/><rect x="4" y="6" width="2" height="8" fill="#fff"/><rect x="7" y="6" width="2" height="8" fill="#fff"/><rect x="10" y="6" width="2" height="8" fill="#fff"/></svg>
<div class="a" style="left:240px;top:497px;width:1.5px;height:9px;background:#6b0a2a"></div>
<div class="t" style="left:246px;top:495px;font-size:13.3px;color:#111;">Adele Vance</div>
<div class="a" style="left:244px;top:514px;width:175px;height:1px;background:#f0f0f0"></div>
<div class="a" style="left:419px;top:487px;width:24px;height:28px;background:#d4d4d4"></div>
<div class="a" style="left:419px;top:514px;width:24px;height:1px;background:#fff"></div>
<div class="a" style="left:443px;top:487px;width:65px;height:28px;background:#f0f0f0"></div>
<div class="a" style="left:470px;top:494px;width:13px;height:13px;border:1px solid #b4b4b4;background:#fcfcfc"><div class="a" style="left:1px;top:1px;width:9px;height:9px;border:1px solid #e6e6e6"></div></div>
<div class="t" style="left:510px;top:495px;font-size:13.3px;color:#111;">Move all messages from Microsoft Viva to</div>
<div class="a" style="left:508px;top:514px;width:612px;height:1px;background:#f0f0f0"></div>
<div class="t" style="left:737px;width:100px;text-align:right;top:495px;font-size:13.3px;color:#111;">1</div>
<svg class="a" style="left:844px;top:493px" width="16" height="16"><path d="M2.5 8.5 V0.5 H14.5 V5.5" fill="none" stroke="#555" stroke-width="1"/><rect x="10.3" y="2" width="2.2" height="2.2" fill="#d42a2a"/><path d="M4.2 3.5 H9" stroke="#9a9a9a" stroke-width="1"/><rect x="4.2" y="5.2" width="1.2" height="1.2" fill="#999"/><path d="M0 2.5 H2 M0 4.5 H2 M0 6.5 H2" stroke="#2f7ec1" stroke-width="1"/><circle cx="9.5" cy="9.6" r="4.7" fill="#fff"/><circle cx="9.5" cy="9.6" r="4.5" fill="#2f7ec1"/><path d="M7 8.5 H12 M7 10.8 H12" stroke="#fff" stroke-width="1.1"/></svg>
<div class="t" style="left:862px;top:495px;font-size:13.3px;color:#111;">Condition</div>
<div class="t" style="left:947px;top:495px;font-size:13.3px;color:#111;">Is an Automatic Forward</div>
<div class="a" style="left:1120px;top:487px;width:256px;height:28px;background:#d4d4d4"></div>
<div class="a" style="left:1120px;top:514px;width:256px;height:1px;background:#f4f4f4"></div>
<div class="a" style="left:1120px;top:487px;width:1px;height:28px;background:#f0f0f0"></div>
<div class="a" style="left:1376px;top:487px;width:317px;height:28px;background:#f0f0f0"></div>
<svg class="a" style="left:1428px;top:492px" width="16" height="16"><path d="M3.5 9 V1.5 H14.5 V6" fill="none" stroke="#555" stroke-width="1"/><rect x="11.2" y="3" width="2.2" height="2.2" fill="#d42a2a"/><path d="M5.2 4.5 H9" stroke="#9a9a9a" stroke-width="1"/><path d="M1 2.5 H3 M1 4.5 H3 M1 6.5 H3" stroke="#2f7ec1" stroke-width="1"/><circle cx="10.5" cy="10.6" r="5.3" fill="#fff"/><circle cx="10.5" cy="10.6" r="4.6" fill="#16a05a"/><path d="M8 10.6 L9.8 12.4 L13 9" fill="none" stroke="#fff" stroke-width="1.4"/></svg>
<div class="a" style="left:1446px;top:494px;width:13px;height:13px;border:1px solid #b4b4b4;background:#f7f7f7"><div class="a" style="left:1px;top:1px;width:9px;height:9px;border:1px solid #e6e6e6"></div></div><svg class="a" style="left:1446px;top:494px" width="13" height="13"><path d="M3.5 6.5 L5.5 10 L10 2.5" fill="none" stroke="#a4a4a4" stroke-width="1.5"/></svg>
<div class="a" style="left:1596px;top:494px;width:13px;height:13px;border:1px solid #b4b4b4;background:#f7f7f7"><div class="a" style="left:1px;top:1px;width:9px;height:9px;border:1px solid #e6e6e6"></div></div>
<div class="a" style="left:83px;top:515px;width:35px;height:27px;background:#c8d9e9"></div>
<div class="a" style="left:119px;top:515px;width:39px;height:27px;background:#d3d9e0"></div>
<div class="a" style="left:159px;top:515px;width:39px;height:27px;background:#d3d9e0"></div>
<div class="a" style="left:83px;top:542px;width:115px;height:1px;background:#fff"></div>
<div class="a" style="left:118px;top:515px;width:1px;height:28px;background:#fff"></div>
<div class="a" style="left:158px;top:515px;width:1px;height:28px;background:#fff"></div>
<div class="t" style="left:16px;width:100px;text-align:right;top:523px;font-size:13.3px;color:#111;">3</div>
<svg class="a" style="left:200px;top:521px" width="17" height="17"><rect x="4.6" y="2.6" width="11" height="8.8" fill="#fff" stroke="#2f7ec1" stroke-width="1.2"/><path d="M6.5 5.8 H11 M6.5 8 H10" stroke="#2f7ec1" stroke-width="1.3"/><rect x="12.2" y="4.3" width="2.1" height="2.1" fill="#2f7ec1"/><path d="M2 4.5 H4.6 M2 6.5 H4.6 M2 8.5 H4.6" stroke="#2f7ec1" stroke-width="1"/></svg>
<div class="a" style="left:219px;top:515px;width:25px;height:28px;background:#dcf8d8"></div>
<svg class="a" style="left:221px;top:520px" width="16" height="16"><rect x="0" y="0" width="16" height="16" fill="#fff"/><rect x="6" y="0.3" width="4" height="1.5" fill="#737373"/><rect x="1" y="1.5" width="14" height="2" fill="#737373"/><rect x="2" y="4" width="12" height="12" fill="#737373"/><rect x="4" y="6" width="2" height="8" fill="#fff"/><rect x="7" y="6" width="2" height="8" fill="#fff"/><rect x="10" y="6" width="2" height="8" fill="#fff"/></svg>
<div class="a" style="left:240px;top:525px;width:1.5px;height:9px;background:#6b0a2a"></div>
<div class="t" style="left:246px;top:523px;font-size:13.3px;color:#111;">Adele Vance</div>
<div class="a" style="left:244px;top:542px;width:175px;height:1px;background:#f0f0f0"></div>
<div class="a" style="left:419px;top:515px;width:24px;height:28px;background:#d4d4d4"></div>
<div class="a" style="left:419px;top:542px;width:24px;height:1px;background:#fff"></div>
<div class="a" style="left:443px;top:515px;width:65px;height:28px;background:#f0f0f0"></div>
<div class="a" style="left:470px;top:522px;width:13px;height:13px;border:1px solid #b4b4b4;background:#fcfcfc"><div class="a" style="left:1px;top:1px;width:9px;height:9px;border:1px solid #e6e6e6"></div></div>
<div class="t" style="left:510px;top:523px;font-size:13.3px;color:#111;">Move all messages from Microsoft Viva to</div>
<div class="a" style="left:508px;top:542px;width:612px;height:1px;background:#f0f0f0"></div>
<div class="t" style="left:737px;width:100px;text-align:right;top:523px;font-size:13.3px;color:#111;">1</div>
<svg class="a" style="left:844px;top:521px" width="16" height="16"><path d="M2.5 8.5 V0.5 H14.5 V5.5" fill="none" stroke="#555" stroke-width="1"/><rect x="10.3" y="2" width="2.2" height="2.2" fill="#d42a2a"/><path d="M4.2 3.5 H9" stroke="#9a9a9a" stroke-width="1"/><rect x="4.2" y="5.2" width="1.2" height="1.2" fill="#999"/><path d="M0 2.5 H2 M0 4.5 H2 M0 6.5 H2" stroke="#2f7ec1" stroke-width="1"/><circle cx="9.5" cy="9.6" r="4.7" fill="#fff"/><circle cx="9.5" cy="9.6" r="4.5" fill="#2f7ec1"/><path d="M7 8.5 H12 M7 10.8 H12" stroke="#fff" stroke-width="1.1"/></svg>
<div class="t" style="left:862px;top:523px;font-size:13.3px;color:#111;">Condition</div>
<div class="t" style="left:947px;top:523px;font-size:13.3px;color:#111;">Is an Automatic Reply</div>
<div class="a" style="left:1120px;top:515px;width:256px;height:28px;background:#d4d4d4"></div>
<div class="a" style="left:1120px;top:542px;width:256px;height:1px;background:#f4f4f4"></div>
<div class="a" style="left:1120px;top:515px;width:1px;height:28px;background:#f0f0f0"></div>
<div class="a" style="left:1376px;top:515px;width:317px;height:28px;background:#f0f0f0"></div>
<svg class="a" style="left:1428px;top:520px" width="16" height="16"><path d="M3.5 9 V1.5 H14.5 V6" fill="none" stroke="#555" stroke-width="1"/><rect x="11.2" y="3" width="2.2" height="2.2" fill="#d42a2a"/><path d="M5.2 4.5 H9" stroke="#9a9a9a" stroke-width="1"/><path d="M1 2.5 H3 M1 4.5 H3 M1 6.5 H3" stroke="#2f7ec1" stroke-width="1"/><circle cx="10.5" cy="10.6" r="5.3" fill="#fff"/><circle cx="10.5" cy="10.6" r="4.6" fill="#16a05a"/><path d="M8 10.6 L9.8 12.4 L13 9" fill="none" stroke="#fff" stroke-width="1.4"/></svg>
<div class="a" style="left:1446px;top:522px;width:13px;height:13px;border:1px solid #b4b4b4;background:#f7f7f7"><div class="a" style="left:1px;top:1px;width:9px;height:9px;border:1px solid #e6e6e6"></div></div><svg class="a" style="left:1446px;top:522px" width="13" height="13"><path d="M3.5 6.5 L5.5 10 L10 2.5" fill="none" stroke="#a4a4a4" stroke-width="1.5"/></svg>
<div class="a" style="left:1596px;top:522px;width:13px;height:13px;border:1px solid #b4b4b4;background:#f7f7f7"><div class="a" style="left:1px;top:1px;width:9px;height:9px;border:1px solid #e6e6e6"></div></div>
<div class="a" style="left:83px;top:543px;width:35px;height:27px;background:#c8d9e9"></div>
<div class="a" style="left:119px;top:543px;width:39px;height:27px;background:#d3d9e0"></div>
<div class="a" style="left:159px;top:543px;width:39px;height:27px;background:#d3d9e0"></div>
<div class="a" style="left:83px;top:570px;width:115px;height:1px;background:#fff"></div>
<div class="a" style="left:118px;top:543px;width:1px;height:28px;background:#fff"></div>
<div class="a" style="left:158px;top:543px;width:1px;height:28px;background:#fff"></div>
<div class="t" style="left:16px;width:100px;text-align:right;top:551px;font-size:13.3px;color:#111;">3</div>
<svg class="a" style="left:200px;top:549px" width="17" height="17"><rect x="4.6" y="2.6" width="11" height="8.8" fill="#fff" stroke="#2f7ec1" stroke-width="1.2"/><path d="M6.5 5.8 H11 M6.5 8 H10" stroke="#2f7ec1" stroke-width="1.3"/><rect x="12.2" y="4.3" width="2.1" height="2.1" fill="#2f7ec1"/><path d="M2 4.5 H4.6 M2 6.5 H4.6 M2 8.5 H4.6" stroke="#2f7ec1" stroke-width="1"/></svg>
<div class="a" style="left:219px;top:543px;width:25px;height:28px;background:#dcf8d8"></div>
<svg class="a" style="left:221px;top:548px" width="16" height="16"><rect x="0" y="0" width="16" height="16" fill="#fff"/><rect x="6" y="0.3" width="4" height="1.5" fill="#737373"/><rect x="1" y="1.5" width="14" height="2" fill="#737373"/><rect x="2" y="4" width="12" height="12" fill="#737373"/><rect x="4" y="6" width="2" height="8" fill="#fff"/><rect x="7" y="6" width="2" height="8" fill="#fff"/><rect x="10" y="6" width="2" height="8" fill="#fff"/></svg>
<div class="a" style="left:240px;top:553px;width:1.5px;height:9px;background:#6b0a2a"></div>
<div class="t" style="left:246px;top:551px;font-size:13.3px;color:#111;">Adele Vance</div>
<div class="a" style="left:244px;top:570px;width:175px;height:1px;background:#f0f0f0"></div>
<div class="a" style="left:419px;top:543px;width:24px;height:28px;background:#d4d4d4"></div>
<div class="a" style="left:419px;top:570px;width:24px;height:1px;background:#fff"></div>
<div class="a" style="left:443px;top:543px;width:65px;height:28px;background:#f0f0f0"></div>
<div class="a" style="left:470px;top:550px;width:13px;height:13px;border:1px solid #b4b4b4;background:#fcfcfc"><div class="a" style="left:1px;top:1px;width:9px;height:9px;border:1px solid #e6e6e6"></div></div>
<div class="t" style="left:510px;top:551px;font-size:13.3px;color:#111;">Move all messages from Microsoft Viva to</div>
<div class="a" style="left:508px;top:570px;width:612px;height:1px;background:#f0f0f0"></div>
<div class="t" style="left:737px;width:100px;text-align:right;top:551px;font-size:13.3px;color:#111;">1</div>
<svg class="a" style="left:844px;top:549px" width="16" height="16"><path d="M2.5 8.5 V0.5 H14.5 V5.5" fill="none" stroke="#555" stroke-width="1"/><rect x="10.3" y="2" width="2.2" height="2.2" fill="#d42a2a"/><path d="M4.2 3.5 H9" stroke="#9a9a9a" stroke-width="1"/><rect x="4.2" y="5.2" width="1.2" height="1.2" fill="#999"/><path d="M0 2.5 H2 M0 4.5 H2 M0 6.5 H2" stroke="#2f7ec1" stroke-width="1"/><circle cx="9.5" cy="9.6" r="4.7" fill="#fff"/><circle cx="9.5" cy="9.6" r="4.5" fill="#2f7ec1"/><path d="M7 8.5 H12 M7 10.8 H12" stroke="#fff" stroke-width="1.1"/></svg>
<div class="t" style="left:862px;top:551px;font-size:13.3px;color:#111;">Condition</div>
<div class="t" style="left:947px;top:551px;font-size:13.3px;color:#111;">Is Encrypted</div>
<div class="a" style="left:1120px;top:543px;width:256px;height:28px;background:#d4d4d4"></div>
<div class="a" style="left:1120px;top:570px;width:256px;height:1px;background:#f4f4f4"></div>
<div class="a" style="left:1120px;top:543px;width:1px;height:28px;background:#f0f0f0"></div>
<div class="a" style="left:1376px;top:543px;width:317px;height:28px;background:#f0f0f0"></div>
<svg class="a" style="left:1428px;top:548px" width="16" height="16"><path d="M3.5 9 V1.5 H14.5 V6" fill="none" stroke="#555" stroke-width="1"/><rect x="11.2" y="3" width="2.2" height="2.2" fill="#d42a2a"/><path d="M5.2 4.5 H9" stroke="#9a9a9a" stroke-width="1"/><path d="M1 2.5 H3 M1 4.5 H3 M1 6.5 H3" stroke="#2f7ec1" stroke-width="1"/><circle cx="10.5" cy="10.6" r="5.3" fill="#fff"/><circle cx="10.5" cy="10.6" r="4.6" fill="#16a05a"/><path d="M8 10.6 L9.8 12.4 L13 9" fill="none" stroke="#fff" stroke-width="1.4"/></svg>
<div class="a" style="left:1446px;top:550px;width:13px;height:13px;border:1px solid #b4b4b4;background:#f7f7f7"><div class="a" style="left:1px;top:1px;width:9px;height:9px;border:1px solid #e6e6e6"></div></div><svg class="a" style="left:1446px;top:550px" width="13" height="13"><path d="M3.5 6.5 L5.5 10 L10 2.5" fill="none" stroke="#a4a4a4" stroke-width="1.5"/></svg>
<div class="a" style="left:1596px;top:550px;width:13px;height:13px;border:1px solid #b4b4b4;background:#f7f7f7"><div class="a" style="left:1px;top:1px;width:9px;height:9px;border:1px solid #e6e6e6"></div></div>
<div class="a" style="left:83px;top:571px;width:35px;height:27px;background:#c8d9e9"></div>
<div class="a" style="left:119px;top:571px;width:39px;height:27px;background:#d3d9e0"></div>
<div class="a" style="left:159px;top:571px;width:39px;height:27px;background:#d3d9e0"></div>
<div class="a" style="left:83px;top:598px;width:115px;height:1px;background:#fff"></div>
<div class="a" style="left:118px;top:571px;width:1px;height:28px;background:#fff"></div>
<div class="a" style="left:158px;top:571px;width:1px;height:28px;background:#fff"></div>
<div class="t" style="left:16px;width:100px;text-align:right;top:579px;font-size:13.3px;color:#111;">3</div>
<svg class="a" style="left:200px;top:577px" width="17" height="17"><rect x="4.6" y="2.6" width="11" height="8.8" fill="#fff" stroke="#2f7ec1" stroke-width="1.2"/><path d="M6.5 5.8 H11 M6.5 8 H10" stroke="#2f7ec1" stroke-width="1.3"/><rect x="12.2" y="4.3" width="2.1" height="2.1" fill="#2f7ec1"/><path d="M2 4.5 H4.6 M2 6.5 H4.6 M2 8.5 H4.6" stroke="#2f7ec1" stroke-width="1"/></svg>
<div class="a" style="left:219px;top:571px;width:25px;height:28px;background:#dcf8d8"></div>
<svg class="a" style="left:221px;top:576px" width="16" height="16"><rect x="0" y="0" width="16" height="16" fill="#fff"/><rect x="6" y="0.3" width="4" height="1.5" fill="#737373"/><rect x="1" y="1.5" width="14" height="2" fill="#737373"/><rect x="2" y="4" width="12" height="12" fill="#737373"/><rect x="4" y="6" width="2" height="8" fill="#fff"/><rect x="7" y="6" width="2" height="8" fill="#fff"/><rect x="10" y="6" width="2" height="8" fill="#fff"/></svg>
<div class="a" style="left:240px;top:581px;width:1.5px;height:9px;background:#6b0a2a"></div>
<div class="t" style="left:246px;top:579px;font-size:13.3px;color:#111;">Adele Vance</div>
<div class="a" style="left:244px;top:598px;width:175px;height:1px;background:#f0f0f0"></div>
<div class="a" style="left:419px;top:571px;width:24px;height:28px;background:#d4d4d4"></div>
<div class="a" style="left:419px;top:598px;width:24px;height:1px;background:#fff"></div>
<div class="a" style="left:443px;top:571px;width:65px;height:28px;background:#f0f0f0"></div>
<div class="a" style="left:470px;top:578px;width:13px;height:13px;border:1px solid #b4b4b4;background:#fcfcfc"><div class="a" style="left:1px;top:1px;width:9px;height:9px;border:1px solid #e6e6e6"></div></div>
<div class="t" style="left:510px;top:579px;font-size:13.3px;color:#111;">Move all messages from Microsoft Viva to</div>
<div class="a" style="left:508px;top:598px;width:612px;height:1px;background:#f0f0f0"></div>
<div class="t" style="left:737px;width:100px;text-align:right;top:579px;font-size:13.3px;color:#111;">1</div>
<svg class="a" style="left:844px;top:577px" width="16" height="16"><path d="M2.5 8.5 V0.5 H14.5 V5.5" fill="none" stroke="#555" stroke-width="1"/><rect x="10.3" y="2" width="2.2" height="2.2" fill="#d42a2a"/><path d="M4.2 3.5 H9" stroke="#9a9a9a" stroke-width="1"/><rect x="4.2" y="5.2" width="1.2" height="1.2" fill="#999"/><path d="M0 2.5 H2 M0 4.5 H2 M0 6.5 H2" stroke="#2f7ec1" stroke-width="1"/><circle cx="9.5" cy="9.6" r="4.7" fill="#fff"/><circle cx="9.5" cy="9.6" r="4.5" fill="#2f7ec1"/><path d="M7 8.5 H12 M7 10.8 H12" stroke="#fff" stroke-width="1.1"/></svg>
<div class="t" style="left:862px;top:579px;font-size:13.3px;color:#111;">Condition</div>
<div class="t" style="left:947px;top:579px;font-size:13.3px;color:#111;">Is a Meeting Request</div>
<div class="a" style="left:1120px;top:571px;width:256px;height:28px;background:#d4d4d4"></div>
<div class="a" style="left:1120px;top:598px;width:256px;height:1px;background:#f4f4f4"></div>
<div class="a" style="left:1120px;top:571px;width:1px;height:28px;background:#f0f0f0"></div>
<div class="a" style="left:1376px;top:571px;width:317px;height:28px;background:#f0f0f0"></div>
<svg class="a" style="left:1428px;top:576px" width="16" height="16"><path d="M3.5 9 V1.5 H14.5 V6" fill="none" stroke="#555" stroke-width="1"/><rect x="11.2" y="3" width="2.2" height="2.2" fill="#d42a2a"/><path d="M5.2 4.5 H9" stroke="#9a9a9a" stroke-width="1"/><path d="M1 2.5 H3 M1 4.5 H3 M1 6.5 H3" stroke="#2f7ec1" stroke-width="1"/><circle cx="10.5" cy="10.6" r="5.3" fill="#fff"/><circle cx="10.5" cy="10.6" r="4.6" fill="#16a05a"/><path d="M8 10.6 L9.8 12.4 L13 9" fill="none" stroke="#fff" stroke-width="1.4"/></svg>
<div class="a" style="left:1446px;top:578px;width:13px;height:13px;border:1px solid #b4b4b4;background:#f7f7f7"><div class="a" style="left:1px;top:1px;width:9px;height:9px;border:1px solid #e6e6e6"></div></div><svg class="a" style="left:1446px;top:578px" width="13" height="13"><path d="M3.5 6.5 L5.5 10 L10 2.5" fill="none" stroke="#a4a4a4" stroke-width="1.5"/></svg>
<div class="a" style="left:1596px;top:578px;width:13px;height:13px;border:1px solid #b4b4b4;background:#f7f7f7"><div class="a" style="left:1px;top:1px;width:9px;height:9px;border:1px solid #e6e6e6"></div></div>
<div class="a" style="left:83px;top:599px;width:35px;height:27px;background:#c8d9e9"></div>
<div class="a" style="left:119px;top:599px;width:39px;height:27px;background:#d3d9e0"></div>
<div class="a" style="left:159px;top:599px;width:39px;height:27px;background:#d3d9e0"></div>
<div class="a" style="left:83px;top:626px;width:115px;height:1px;background:#fff"></div>
<div class="a" style="left:118px;top:599px;width:1px;height:28px;background:#fff"></div>
<div class="a" style="left:158px;top:599px;width:1px;height:28px;background:#fff"></div>
<div class="t" style="left:16px;width:100px;text-align:right;top:607px;font-size:13.3px;color:#111;">3</div>
<svg class="a" style="left:200px;top:605px" width="17" height="17"><rect x="4.6" y="2.6" width="11" height="8.8" fill="#fff" stroke="#2f7ec1" stroke-width="1.2"/><path d="M6.5 5.8 H11 M6.5 8 H10" stroke="#2f7ec1" stroke-width="1.3"/><rect x="12.2" y="4.3" width="2.1" height="2.1" fill="#2f7ec1"/><path d="M2 4.5 H4.6 M2 6.5 H4.6 M2 8.5 H4.6" stroke="#2f7ec1" stroke-width="1"/></svg>
<div class="a" style="left:219px;top:599px;width:25px;height:28px;background:#dcf8d8"></div>
<svg class="a" style="left:221px;top:604px" width="16" height="16"><rect x="0" y="0" width="16" height="16" fill="#fff"/><rect x="6" y="0.3" width="4" height="1.5" fill="#737373"/><rect x="1" y="1.5" width="14" height="2" fill="#737373"/><rect x="2" y="4" width="12" height="12" fill="#737373"/><rect x="4" y="6" width="2" height="8" fill="#fff"/><rect x="7" y="6" width="2" height="8" fill="#fff"/><rect x="10" y="6" width="2" height="8" fill="#fff"/></svg>
<div class="a" style="left:240px;top:609px;width:1.5px;height:9px;background:#6b0a2a"></div>
<div class="t" style="left:246px;top:607px;font-size:13.3px;color:#111;">Adele Vance</div>
<div class="a" style="left:244px;top:626px;width:175px;height:1px;background:#f0f0f0"></div>
<div class="a" style="left:419px;top:599px;width:24px;height:28px;background:#d4d4d4"></div>
<div class="a" style="left:419px;top:626px;width:24px;height:1px;background:#fff"></div>
<div class="a" style="left:443px;top:599px;width:65px;height:28px;background:#f0f0f0"></div>
<div class="a" style="left:470px;top:606px;width:13px;height:13px;border:1px solid #b4b4b4;background:#fcfcfc"><div class="a" style="left:1px;top:1px;width:9px;height:9px;border:1px solid #e6e6e6"></div></div>
<div class="t" style="left:510px;top:607px;font-size:13.3px;color:#111;">Move all messages from Microsoft Viva to</div>
<div class="a" style="left:508px;top:626px;width:612px;height:1px;background:#f0f0f0"></div>
<div class="t" style="left:737px;width:100px;text-align:right;top:607px;font-size:13.3px;color:#111;">1</div>
<svg class="a" style="left:844px;top:605px" width="16" height="16"><path d="M2.5 8.5 V0.5 H14.5 V5.5" fill="none" stroke="#555" stroke-width="1"/><rect x="10.3" y="2" width="2.2" height="2.2" fill="#d42a2a"/><path d="M4.2 3.5 H9" stroke="#9a9a9a" stroke-width="1"/><rect x="4.2" y="5.2" width="1.2" height="1.2" fill="#999"/><path d="M0 2.5 H2 M0 4.5 H2 M0 6.5 H2" stroke="#2f7ec1" stroke-width="1"/><circle cx="9.5" cy="9.6" r="4.7" fill="#fff"/><circle cx="9.5" cy="9.6" r="4.5" fill="#2f7ec1"/><path d="M7 8.5 H12 M7 10.8 H12" stroke="#fff" stroke-width="1.1"/></svg>
<div class="t" style="left:862px;top:607px;font-size:13.3px;color:#111;">Condition</div>
<div class="t" style="left:947px;top:607px;font-size:13.3px;color:#111;">Is a Meeting Response</div>
<div class="a" style="left:1120px;top:599px;width:256px;height:28px;background:#d4d4d4"></div>
<div class="a" style="left:1120px;top:626px;width:256px;height:1px;background:#f4f4f4"></div>
<div class="a" style="left:1120px;top:599px;width:1px;height:28px;background:#f0f0f0"></div>
<div class="a" style="left:1376px;top:599px;width:317px;height:28px;background:#f0f0f0"></div>
<svg class="a" style="left:1428px;top:604px" width="16" height="16"><path d="M3.5 9 V1.5 H14.5 V6" fill="none" stroke="#555" stroke-width="1"/><rect x="11.2" y="3" width="2.2" height="2.2" fill="#d42a2a"/><path d="M5.2 4.5 H9" stroke="#9a9a9a" stroke-width="1"/><path d="M1 2.5 H3 M1 4.5 H3 M1 6.5 H3" stroke="#2f7ec1" stroke-width="1"/><circle cx="10.5" cy="10.6" r="5.3" fill="#fff"/><circle cx="10.5" cy="10.6" r="4.6" fill="#16a05a"/><path d="M8 10.6 L9.8 12.4 L13 9" fill="none" stroke="#fff" stroke-width="1.4"/></svg>
<div class="a" style="left:1446px;top:606px;width:13px;height:13px;border:1px solid #b4b4b4;background:#f7f7f7"><div class="a" style="left:1px;top:1px;width:9px;height:9px;border:1px solid #e6e6e6"></div></div><svg class="a" style="left:1446px;top:606px" width="13" height="13"><path d="M3.5 6.5 L5.5 10 L10 2.5" fill="none" stroke="#a4a4a4" stroke-width="1.5"/></svg>
<div class="a" style="left:1596px;top:606px;width:13px;height:13px;border:1px solid #b4b4b4;background:#f7f7f7"><div class="a" style="left:1px;top:1px;width:9px;height:9px;border:1px solid #e6e6e6"></div></div>
<div class="a" style="left:83px;top:627px;width:35px;height:27px;background:#c8d9e9"></div>
<div class="a" style="left:119px;top:627px;width:39px;height:27px;background:#d3d9e0"></div>
<div class="a" style="left:159px;top:627px;width:39px;height:27px;background:#d3d9e0"></div>
<div class="a" style="left:83px;top:654px;width:115px;height:1px;background:#fff"></div>
<div class="a" style="left:118px;top:627px;width:1px;height:28px;background:#fff"></div>
<div class="a" style="left:158px;top:627px;width:1px;height:28px;background:#fff"></div>
<div class="t" style="left:16px;width:100px;text-align:right;top:635px;font-size:13.3px;color:#111;">3</div>
<svg class="a" style="left:200px;top:633px" width="17" height="17"><rect x="4.6" y="2.6" width="11" height="8.8" fill="#fff" stroke="#2f7ec1" stroke-width="1.2"/><path d="M6.5 5.8 H11 M6.5 8 H10" stroke="#2f7ec1" stroke-width="1.3"/><rect x="12.2" y="4.3" width="2.1" height="2.1" fill="#2f7ec1"/><path d="M2 4.5 H4.6 M2 6.5 H4.6 M2 8.5 H4.6" stroke="#2f7ec1" stroke-width="1"/></svg>
<div class="a" style="left:219px;top:627px;width:25px;height:28px;background:#dcf8d8"></div>
<svg class="a" style="left:221px;top:632px" width="16" height="16"><rect x="0" y="0" width="16" height="16" fill="#fff"/><rect x="6" y="0.3" width="4" height="1.5" fill="#737373"/><rect x="1" y="1.5" width="14" height="2" fill="#737373"/><rect x="2" y="4" width="12" height="12" fill="#737373"/><rect x="4" y="6" width="2" height="8" fill="#fff"/><rect x="7" y="6" width="2" height="8" fill="#fff"/><rect x="10" y="6" width="2" height="8" fill="#fff"/></svg>
<div class="a" style="left:240px;top:637px;width:1.5px;height:9px;background:#6b0a2a"></div>
<div class="t" style="left:246px;top:635px;font-size:13.3px;color:#111;">Adele Vance</div>
<div class="a" style="left:244px;top:654px;width:175px;height:1px;background:#f0f0f0"></div>
<div class="a" style="left:419px;top:627px;width:24px;height:28px;background:#d4d4d4"></div>
<div class="a" style="left:419px;top:654px;width:24px;height:1px;background:#fff"></div>
<div class="a" style="left:443px;top:627px;width:65px;height:28px;background:#f0f0f0"></div>
<div class="a" style="left:470px;top:634px;width:13px;height:13px;border:1px solid #b4b4b4;background:#fcfcfc"><div class="a" style="left:1px;top:1px;width:9px;height:9px;border:1px solid #e6e6e6"></div></div>
<div class="t" style="left:510px;top:635px;font-size:13.3px;color:#111;">Move all messages from Microsoft Viva to</div>
<div class="a" style="left:508px;top:654px;width:612px;height:1px;background:#f0f0f0"></div>
<div class="t" style="left:737px;width:100px;text-align:right;top:635px;font-size:13.3px;color:#111;">1</div>
<svg class="a" style="left:844px;top:633px" width="16" height="16"><path d="M2.5 8.5 V0.5 H14.5 V5.5" fill="none" stroke="#555" stroke-width="1"/><rect x="10.3" y="2" width="2.2" height="2.2" fill="#d42a2a"/><path d="M4.2 3.5 H9" stroke="#9a9a9a" stroke-width="1"/><rect x="4.2" y="5.2" width="1.2" height="1.2" fill="#999"/><path d="M0 2.5 H2 M0 4.5 H2 M0 6.5 H2" stroke="#2f7ec1" stroke-width="1"/><circle cx="9.5" cy="9.6" r="4.7" fill="#fff"/><circle cx="9.5" cy="9.6" r="4.5" fill="#2f7ec1"/><path d="M7 8.5 H12 M7 10.8 H12" stroke="#fff" stroke-width="1.1"/></svg>
<div class="t" style="left:862px;top:635px;font-size:13.3px;color:#111;">Condition</div>
<div class="t" style="left:947px;top:635px;font-size:13.3px;color:#111;">Is a Non Delivery Report</div>
<div class="a" style="left:1120px;top:627px;width:256px;height:28px;background:#d4d4d4"></div>
<div class="a" style="left:1120px;top:654px;width:256px;height:1px;background:#f4f4f4"></div>
<div class="a" style="left:1120px;top:627px;width:1px;height:28px;background:#f0f0f0"></div>
<div class="a" style="left:1376px;top:627px;width:317px;height:28px;background:#f0f0f0"></div>
<svg class="a" style="left:1428px;top:632px" width="16" height="16"><path d="M3.5 9 V1.5 H14.5 V6" fill="none" stroke="#555" stroke-width="1"/><rect x="11.2" y="3" width="2.2" height="2.2" fill="#d42a2a"/><path d="M5.2 4.5 H9" stroke="#9a9a9a" stroke-width="1"/><path d="M1 2.5 H3 M1 4.5 H3 M1 6.5 H3" stroke="#2f7ec1" stroke-width="1"/><circle cx="10.5" cy="10.6" r="5.3" fill="#fff"/><circle cx="10.5" cy="10.6" r="4.6" fill="#16a05a"/><path d="M8 10.6 L9.8 12.4 L13 9" fill="none" stroke="#fff" stroke-width="1.4"/></svg>
<div class="a" style="left:1446px;top:634px;width:13px;height:13px;border:1px solid #b4b4b4;background:#f7f7f7"><div class="a" style="left:1px;top:1px;width:9px;height:9px;border:1px solid #e6e6e6"></div></div><svg class="a" style="left:1446px;top:634px" width="13" height="13"><path d="M3.5 6.5 L5.5 10 L10 2.5" fill="none" stroke="#a4a4a4" stroke-width="1.5"/></svg>
<div class="a" style="left:1596px;top:634px;width:13px;height:13px;border:1px solid #b4b4b4;background:#f7f7f7"><div class="a" style="left:1px;top:1px;width:9px;height:9px;border:1px solid #e6e6e6"></div></div>
<div class="a" style="left:83px;top:655px;width:35px;height:27px;background:#c8d9e9"></div>
<div class="a" style="left:119px;top:655px;width:39px;height:27px;background:#d3d9e0"></div>
<div class="a" style="left:159px;top:655px;width:39px;height:27px;background:#d3d9e0"></div>
<div class="a" style="left:83px;top:682px;width:115px;height:1px;background:#fff"></div>
<div class="a" style="left:118px;top:655px;width:1px;height:28px;background:#fff"></div>
<div class="a" style="left:158px;top:655px;width:1px;height:28px;background:#fff"></div>
<div class="t" style="left:16px;width:100px;text-align:right;top:663px;font-size:13.3px;color:#111;">3</div>
<svg class="a" style="left:200px;top:661px" width="17" height="17"><rect x="4.6" y="2.6" width="11" height="8.8" fill="#fff" stroke="#2f7ec1" stroke-width="1.2"/><path d="M6.5 5.8 H11 M6.5 8 H10" stroke="#2f7ec1" stroke-width="1.3"/><rect x="12.2" y="4.3" width="2.1" height="2.1" fill="#2f7ec1"/><path d="M2 4.5 H4.6 M2 6.5 H4.6 M2 8.5 H4.6" stroke="#2f7ec1" stroke-width="1"/></svg>
<div class="a" style="left:219px;top:655px;width:25px;height:28px;background:#dcf8d8"></div>
<svg class="a" style="left:221px;top:660px" width="16" height="16"><rect x="0" y="0" width="16" height="16" fill="#fff"/><rect x="6" y="0.3" width="4" height="1.5" fill="#737373"/><rect x="1" y="1.5" width="14" height="2" fill="#737373"/><rect x="2" y="4" width="12" height="12" fill="#737373"/><rect x="4" y="6" width="2" height="8" fill="#fff"/><rect x="7" y="6" width="2" height="8" fill="#fff"/><rect x="10" y="6" width="2" height="8" fill="#fff"/></svg>
<div class="a" style="left:240px;top:665px;width:1.5px;height:9px;background:#6b0a2a"></div>
<div class="t" style="left:246px;top:663px;font-size:13.3px;color:#111;">Adele Vance</div>
<div class="a" style="left:244px;top:682px;width:175px;height:1px;background:#f0f0f0"></div>
<div class="a" style="left:419px;top:655px;width:24px;height:28px;background:#d4d4d4"></div>
<div class="a" style="left:419px;top:682px;width:24px;height:1px;background:#fff"></div>
<div class="a" style="left:443px;top:655px;width:65px;height:28px;background:#f0f0f0"></div>
<div class="a" style="left:470px;top:662px;width:13px;height:13px;border:1px solid #b4b4b4;background:#fcfcfc"><div class="a" style="left:1px;top:1px;width:9px;height:9px;border:1px solid #e6e6e6"></div></div>
<div class="t" style="left:510px;top:663px;font-size:13.3px;color:#111;">Move all messages from Microsoft Viva to</div>
<div class="a" style="left:508px;top:682px;width:612px;height:1px;background:#f0f0f0"></div>
<div class="t" style="left:737px;width:100px;text-align:right;top:663px;font-size:13.3px;color:#111;">1</div>
<svg class="a" style="left:844px;top:661px" width="16" height="16"><path d="M2.5 8.5 V0.5 H14.5 V5.5" fill="none" stroke="#555" stroke-width="1"/><rect x="10.3" y="2" width="2.2" height="2.2" fill="#d42a2a"/><path d="M4.2 3.5 H9" stroke="#9a9a9a" stroke-width="1"/><rect x="4.2" y="5.2" width="1.2" height="1.2" fill="#999"/><path d="M0 2.5 H2 M0 4.5 H2 M0 6.5 H2" stroke="#2f7ec1" stroke-width="1"/><circle cx="9.5" cy="9.6" r="4.7" fill="#fff"/><circle cx="9.5" cy="9.6" r="4.5" fill="#2f7ec1"/><path d="M7 8.5 H12 M7 10.8 H12" stroke="#fff" stroke-width="1.1"/></svg>
<div class="t" style="left:862px;top:663px;font-size:13.3px;color:#111;">Condition</div>
<div class="t" style="left:947px;top:663px;font-size:13.3px;color:#111;">Is Permission Controlled</div>
<div class="a" style="left:1120px;top:655px;width:256px;height:28px;background:#d4d4d4"></div>
<div class="a" style="left:1120px;top:682px;width:256px;height:1px;background:#f4f4f4"></div>
<div class="a" style="left:1120px;top:655px;width:1px;height:28px;background:#f0f0f0"></div>
<div class="a" style="left:1376px;top:655px;width:317px;height:28px;background:#f0f0f0"></div>
<svg class="a" style="left:1428px;top:660px" width="16" height="16"><path d="M3.5 9 V1.5 H14.5 V6" fill="none" stroke="#555" stroke-width="1"/><rect x="11.2" y="3" width="2.2" height="2.2" fill="#d42a2a"/><path d="M5.2 4.5 H9" stroke="#9a9a9a" stroke-width="1"/><path d="M1 2.5 H3 M1 4.5 H3 M1 6.5 H3" stroke="#2f7ec1" stroke-width="1"/><circle cx="10.5" cy="10.6" r="5.3" fill="#fff"/><circle cx="10.5" cy="10.6" r="4.6" fill="#16a05a"/><path d="M8 10.6 L9.8 12.4 L13 9" fill="none" stroke="#fff" stroke-width="1.4"/></svg>
<div class="a" style="left:1446px;top:662px;width:13px;height:13px;border:1px solid #b4b4b4;background:#f7f7f7"><div class="a" style="left:1px;top:1px;width:9px;height:9px;border:1px solid #e6e6e6"></div></div><svg class="a" style="left:1446px;top:662px" width="13" height="13"><path d="M3.5 6.5 L5.5 10 L10 2.5" fill="none" stroke="#a4a4a4" stroke-width="1.5"/></svg>
<div class="a" style="left:1596px;top:662px;width:13px;height:13px;border:1px solid #b4b4b4;background:#f7f7f7"><div class="a" style="left:1px;top:1px;width:9px;height:9px;border:1px solid #e6e6e6"></div></div>
<div class="a" style="left:83px;top:683px;width:35px;height:27px;background:#c8d9e9"></div>
<div class="a" style="left:119px;top:683px;width:39px;height:27px;background:#d3d9e0"></div>
<div class="a" style="left:159px;top:683px;width:39px;height:27px;background:#d3d9e0"></div>
<div class="a" style="left:83px;top:710px;width:115px;height:1px;background:#fff"></div>
<div class="a" style="left:118px;top:683px;width:1px;height:28px;background:#fff"></div>
<div class="a" style="left:158px;top:683px;width:1px;height:28px;background:#fff"></div>
<div class="t" style="left:16px;width:100px;text-align:right;top:691px;font-size:13.3px;color:#111;">3</div>
<svg class="a" style="left:200px;top:689px" width="17" height="17"><rect x="4.6" y="2.6" width="11" height="8.8" fill="#fff" stroke="#2f7ec1" stroke-width="1.2"/><path d="M6.5 5.8 H11 M6.5 8 H10" stroke="#2f7ec1" stroke-width="1.3"/><rect x="12.2" y="4.3" width="2.1" height="2.1" fill="#2f7ec1"/><path d="M2 4.5 H4.6 M2 6.5 H4.6 M2 8.5 H4.6" stroke="#2f7ec1" stroke-width="1"/></svg>
<div class="a" style="left:219px;top:683px;width:25px;height:28px;background:#dcf8d8"></div>
<svg class="a" style="left:221px;top:688px" width="16" height="16"><rect x="0" y="0" width="16" height="16" fill="#fff"/><rect x="6" y="0.3" width="4" height="1.5" fill="#737373"/><rect x="1" y="1.5" width="14" height="2" fill="#737373"/><rect x="2" y="4" width="12" height="12" fill="#737373"/><rect x="4" y="6" width="2" height="8" fill="#fff"/><rect x="7" y="6" width="2" height="8" fill="#fff"/><rect x="10" y="6" width="2" height="8" fill="#fff"/></svg>
<div class="a" style="left:240px;top:693px;width:1.5px;height:9px;background:#6b0a2a"></div>
<div class="t" style="left:246px;top:691px;font-size:13.3px;color:#111;">Adele Vance</div>
<div class="a" style="left:244px;top:710px;width:175px;height:1px;background:#f0f0f0"></div>
<div class="a" style="left:419px;top:683px;width:24px;height:28px;background:#d4d4d4"></div>
<div class="a" style="left:419px;top:710px;width:24px;height:1px;background:#fff"></div>
<div class="a" style="left:443px;top:683px;width:65px;height:28px;background:#f0f0f0"></div>
<div class="a" style="left:470px;top:690px;width:13px;height:13px;border:1px solid #b4b4b4;background:#fcfcfc"><div class="a" style="left:1px;top:1px;width:9px;height:9px;border:1px solid #e6e6e6"></div></div>
<div class="t" style="left:510px;top:691px;font-size:13.3px;color:#111;">Move all messages from Microsoft Viva to</div>
<div class="a" style="left:508px;top:710px;width:612px;height:1px;background:#f0f0f0"></div>
<div class="t" style="left:737px;width:100px;text-align:right;top:691px;font-size:13.3px;color:#111;">1</div>
<svg class="a" style="left:844px;top:689px" width="16" height="16"><path d="M2.5 8.5 V0.5 H14.5 V5.5" fill="none" stroke="#555" stroke-width="1"/><rect x="10.3" y="2" width="2.2" height="2.2" fill="#d42a2a"/><path d="M4.2 3.5 H9" stroke="#9a9a9a" stroke-width="1"/><rect x="4.2" y="5.2" width="1.2" height="1.2" fill="#999"/><path d="M0 2.5 H2 M0 4.5 H2 M0 6.5 H2" stroke="#2f7ec1" stroke-width="1"/><circle cx="9.5" cy="9.6" r="4.7" fill="#fff"/><circle cx="9.5" cy="9.6" r="4.5" fill="#2f7ec1"/><path d="M7 8.5 H12 M7 10.8 H12" stroke="#fff" stroke-width="1.1"/></svg>
<div class="t" style="left:862px;top:691px;font-size:13.3px;color:#111;">Condition</div>
<div class="t" style="left:947px;top:691px;font-size:13.3px;color:#111;">Is Read Receipt</div>
<div class="a" style="left:1120px;top:683px;width:256px;height:28px;background:#d4d4d4"></div>
<div class="a" style="left:1120px;top:710px;width:256px;height:1px;background:#f4f4f4"></div>
<div class="a" style="left:1120px;top:683px;width:1px;height:28px;background:#f0f0f0"></div>
<div class="a" style="left:1376px;top:683px;width:317px;height:28px;background:#f0f0f0"></div>
<svg class="a" style="left:1428px;top:688px" width="16" height="16"><path d="M3.5 9 V1.5 H14.5 V6" fill="none" stroke="#555" stroke-width="1"/><rect x="11.2" y="3" width="2.2" height="2.2" fill="#d42a2a"/><path d="M5.2 4.5 H9" stroke="#9a9a9a" stroke-width="1"/><path d="M1 2.5 H3 M1 4.5 H3 M1 6.5 H3" stroke="#2f7ec1" stroke-width="1"/><circle cx="10.5" cy="10.6" r="5.3" fill="#fff"/><circle cx="10.5" cy="10.6" r="4.6" fill="#16a05a"/><path d="M8 10.6 L9.8 12.4 L13 9" fill="none" stroke="#fff" stroke-width="1.4"/></svg>
<div class="a" style="left:1446px;top:690px;width:13px;height:13px;border:1px solid #b4b4b4;background:#f7f7f7"><div class="a" style="left:1px;top:1px;width:9px;height:9px;border:1px solid #e6e6e6"></div></div><svg class="a" style="left:1446px;top:690px" width="13" height="13"><path d="M3.5 6.5 L5.5 10 L10 2.5" fill="none" stroke="#a4a4a4" stroke-width="1.5"/></svg>
<div class="a" style="left:1596px;top:690px;width:13px;height:13px;border:1px solid #b4b4b4;background:#f7f7f7"><div class="a" style="left:1px;top:1px;width:9px;height:9px;border:1px solid #e6e6e6"></div></div>
<div class="a" style="left:83px;top:711px;width:35px;height:27px;background:#c8d9e9"></div>
<div class="a" style="left:119px;top:711px;width:39px;height:27px;background:#d3d9e0"></div>
<div class="a" style="left:159px;top:711px;width:39px;height:27px;background:#d3d9e0"></div>
<div class="a" style="left:83px;top:738px;width:115px;height:1px;background:#fff"></div>
<div class="a" style="left:118px;top:711px;width:1px;height:28px;background:#fff"></div>
<div class="a" style="left:158px;top:711px;width:1px;height:28px;background:#fff"></div>
<div class="t" style="left:16px;width:100px;text-align:right;top:719px;font-size:13.3px;color:#111;">3</div>
<svg class="a" style="left:200px;top:717px" width="17" height="17"><rect x="4.6" y="2.6" width="11" height="8.8" fill="#fff" stroke="#2f7ec1" stroke-width="1.2"/><path d="M6.5 5.8 H11 M6.5 8 H10" stroke="#2f7ec1" stroke-width="1.3"/><rect x="12.2" y="4.3" width="2.1" height="2.1" fill="#2f7ec1"/><path d="M2 4.5 H4.6 M2 6.5 H4.6 M2 8.5 H4.6" stroke="#2f7ec1" stroke-width="1"/></svg>
<div class="a" style="left:219px;top:711px;width:25px;height:28px;background:#dcf8d8"></div>
<svg class="a" style="left:221px;top:716px" width="16" height="16"><rect x="0" y="0" width="16" height="16" fill="#fff"/><rect x="6" y="0.3" width="4" height="1.5" fill="#737373"/><rect x="1" y="1.5" width="14" height="2" fill="#737373"/><rect x="2" y="4" width="12" height="12" fill="#737373"/><rect x="4" y="6" width="2" height="8" fill="#fff"/><rect x="7" y="6" width="2" height="8" fill="#fff"/><rect x="10" y="6" width="2" height="8" fill="#fff"/></svg>
<div class="a" style="left:240px;top:721px;width:1.5px;height:9px;background:#6b0a2a"></div>
<div class="t" style="left:246px;top:719px;font-size:13.3px;color:#111;">Adele Vance</div>
<div class="a" style="left:244px;top:738px;width:175px;height:1px;background:#f0f0f0"></div>
<div class="a" style="left:419px;top:711px;width:24px;height:28px;background:#d4d4d4"></div>
<div class="a" style="left:419px;top:738px;width:24px;height:1px;background:#fff"></div>
<div class="a" style="left:443px;top:711px;width:65px;height:28px;background:#f0f0f0"></div>
<div class="a" style="left:470px;top:718px;width:13px;height:13px;border:1px solid #b4b4b4;background:#fcfcfc"><div class="a" style="left:1px;top:1px;width:9px;height:9px;border:1px solid #e6e6e6"></div></div>
<div class="t" style="left:510px;top:719px;font-size:13.3px;color:#111;">Move all messages from Microsoft Viva to</div>
<div class="a" style="left:508px;top:738px;width:612px;height:1px;background:#f0f0f0"></div>
<div class="t" style="left:737px;width:100px;text-align:right;top:719px;font-size:13.3px;color:#111;">1</div>
<svg class="a" style="left:844px;top:717px" width="16" height="16"><path d="M2.5 8.5 V0.5 H14.5 V5.5" fill="none" stroke="#555" stroke-width="1"/><rect x="10.3" y="2" width="2.2" height="2.2" fill="#d42a2a"/><path d="M4.2 3.5 H9" stroke="#9a9a9a" stroke-width="1"/><rect x="4.2" y="5.2" width="1.2" height="1.2" fill="#999"/><path d="M0 2.5 H2 M0 4.5 H2 M0 6.5 H2" stroke="#2f7ec1" stroke-width="1"/><circle cx="9.5" cy="9.6" r="4.7" fill="#fff"/><circle cx="9.5" cy="9.6" r="4.5" fill="#2f7ec1"/><path d="M7 8.5 H12 M7 10.8 H12" stroke="#fff" stroke-width="1.1"/></svg>
<div class="t" style="left:862px;top:719px;font-size:13.3px;color:#111;">Condition</div>
<div class="t" style="left:947px;top:719px;font-size:13.3px;color:#111;">Is Signed</div>
<div class="a" style="left:1120px;top:711px;width:256px;height:28px;background:#d4d4d4"></div>
<div class="a" style="left:1120px;top:738px;width:256px;height:1px;background:#f4f4f4"></div>
<div class="a" style="left:1120px;top:711px;width:1px;height:28px;background:#f0f0f0"></div>
<div class="a" style="left:1376px;top:711px;width:317px;height:28px;background:#f0f0f0"></div>
<svg class="a" style="left:1428px;top:716px" width="16" height="16"><path d="M3.5 9 V1.5 H14.5 V6" fill="none" stroke="#555" stroke-width="1"/><rect x="11.2" y="3" width="2.2" height="2.2" fill="#d42a2a"/><path d="M5.2 4.5 H9" stroke="#9a9a9a" stroke-width="1"/><path d="M1 2.5 H3 M1 4.5 H3 M1 6.5 H3" stroke="#2f7ec1" stroke-width="1"/><circle cx="10.5" cy="10.6" r="5.3" fill="#fff"/><circle cx="10.5" cy="10.6" r="4.6" fill="#16a05a"/><path d="M8 10.6 L9.8 12.4 L13 9" fill="none" stroke="#fff" stroke-width="1.4"/></svg>
<div class="a" style="left:1446px;top:718px;width:13px;height:13px;border:1px solid #b4b4b4;background:#f7f7f7"><div class="a" style="left:1px;top:1px;width:9px;height:9px;border:1px solid #e6e6e6"></div></div><svg class="a" style="left:1446px;top:718px" width="13" height="13"><path d="M3.5 6.5 L5.5 10 L10 2.5" fill="none" stroke="#a4a4a4" stroke-width="1.5"/></svg>
<div class="a" style="left:1596px;top:718px;width:13px;height:13px;border:1px solid #b4b4b4;background:#f7f7f7"><div class="a" style="left:1px;top:1px;width:9px;height:9px;border:1px solid #e6e6e6"></div></div>
<div class="a" style="left:83px;top:739px;width:35px;height:27px;background:#c8d9e9"></div>
<div class="a" style="left:119px;top:739px;width:39px;height:27px;background:#d3d9e0"></div>
<div class="a" style="left:159px;top:739px;width:39px;height:27px;background:#d3d9e0"></div>
<div class="a" style="left:83px;top:766px;width:115px;height:1px;background:#fff"></div>
<div class="a" style="left:118px;top:739px;width:1px;height:28px;background:#fff"></div>
<div class="a" style="left:158px;top:739px;width:1px;height:28px;background:#fff"></div>
<div class="t" style="left:16px;width:100px;text-align:right;top:747px;font-size:13.3px;color:#111;">3</div>
<svg class="a" style="left:200px;top:745px" width="17" height="17"><rect x="4.6" y="2.6" width="11" height="8.8" fill="#fff" stroke="#2f7ec1" stroke-width="1.2"/><path d="M6.5 5.8 H11 M6.5 8 H10" stroke="#2f7ec1" stroke-width="1.3"/><rect x="12.2" y="4.3" width="2.1" height="2.1" fill="#2f7ec1"/><path d="M2 4.5 H4.6 M2 6.5 H4.6 M2 8.5 H4.6" stroke="#2f7ec1" stroke-width="1"/></svg>
<div class="a" style="left:219px;top:739px;width:25px;height:28px;background:#dcf8d8"></div>
<svg class="a" style="left:221px;top:744px" width="16" height="16"><rect x="0" y="0" width="16" height="16" fill="#fff"/><rect x="6" y="0.3" width="4" height="1.5" fill="#737373"/><rect x="1" y="1.5" width="14" height="2" fill="#737373"/><rect x="2" y="4" width="12" height="12" fill="#737373"/><rect x="4" y="6" width="2" height="8" fill="#fff"/><rect x="7" y="6" width="2" height="8" fill="#fff"/><rect x="10" y="6" width="2" height="8" fill="#fff"/></svg>
<div class="a" style="left:240px;top:749px;width:1.5px;height:9px;background:#6b0a2a"></div>
<div class="t" style="left:246px;top:747px;font-size:13.3px;color:#111;">Adele Vance</div>
<div class="a" style="left:244px;top:766px;width:175px;height:1px;background:#f0f0f0"></div>
<div class="a" style="left:419px;top:739px;width:24px;height:28px;background:#d4d4d4"></div>
<div class="a" style="left:419px;top:766px;width:24px;height:1px;background:#fff"></div>
<div class="a" style="left:443px;top:739px;width:65px;height:28px;background:#f0f0f0"></div>
<div class="a" style="left:470px;top:746px;width:13px;height:13px;border:1px solid #b4b4b4;background:#fcfcfc"><div class="a" style="left:1px;top:1px;width:9px;height:9px;border:1px solid #e6e6e6"></div></div>
<div class="t" style="left:510px;top:747px;font-size:13.3px;color:#111;">Move all messages from Microsoft Viva to</div>
<div class="a" style="left:508px;top:766px;width:612px;height:1px;background:#f0f0f0"></div>
<div class="t" style="left:737px;width:100px;text-align:right;top:747px;font-size:13.3px;color:#111;">1</div>
<svg class="a" style="left:844px;top:745px" width="16" height="16"><path d="M2.5 8.5 V0.5 H14.5 V5.5" fill="none" stroke="#555" stroke-width="1"/><rect x="10.3" y="2" width="2.2" height="2.2" fill="#d42a2a"/><path d="M4.2 3.5 H9" stroke="#9a9a9a" stroke-width="1"/><rect x="4.2" y="5.2" width="1.2" height="1.2" fill="#999"/><path d="M0 2.5 H2 M0 4.5 H2 M0 6.5 H2" stroke="#2f7ec1" stroke-width="1"/><circle cx="9.5" cy="9.6" r="4.7" fill="#fff"/><circle cx="9.5" cy="9.6" r="4.5" fill="#2f7ec1"/><path d="M7 8.5 H12 M7 10.8 H12" stroke="#fff" stroke-width="1.1"/></svg>
<div class="t" style="left:862px;top:747px;font-size:13.3px;color:#111;">Condition</div>
<div class="t" style="left:947px;top:747px;font-size:13.3px;color:#111;">Is a Voicemail</div>
<div class="a" style="left:1120px;top:739px;width:256px;height:28px;background:#d4d4d4"></div>
<div class="a" style="left:1120px;top:766px;width:256px;height:1px;background:#f4f4f4"></div>
<div class="a" style="left:1120px;top:739px;width:1px;height:28px;background:#f0f0f0"></div>
<div class="a" style="left:1376px;top:739px;width:317px;height:28px;background:#f0f0f0"></div>
<svg class="a" style="left:1428px;top:744px" width="16" height="16"><path d="M3.5 9 V1.5 H14.5 V6" fill="none" stroke="#555" stroke-width="1"/><rect x="11.2" y="3" width="2.2" height="2.2" fill="#d42a2a"/><path d="M5.2 4.5 H9" stroke="#9a9a9a" stroke-width="1"/><path d="M1 2.5 H3 M1 4.5 H3 M1 6.5 H3" stroke="#2f7ec1" stroke-width="1"/><circle cx="10.5" cy="10.6" r="5.3" fill="#fff"/><circle cx="10.5" cy="10.6" r="4.6" fill="#16a05a"/><path d="M8 10.6 L9.8 12.4 L13 9" fill="none" stroke="#fff" stroke-width="1.4"/></svg>
<div class="a" style="left:1446px;top:746px;width:13px;height:13px;border:1px solid #b4b4b4;background:#f7f7f7"><div class="a" style="left:1px;top:1px;width:9px;height:9px;border:1px solid #e6e6e6"></div></div><svg class="a" style="left:1446px;top:746px" width="13" height="13"><path d="M3.5 6.5 L5.5 10 L10 2.5" fill="none" stroke="#a4a4a4" stroke-width="1.5"/></svg>
<div class="a" style="left:1596px;top:746px;width:13px;height:13px;border:1px solid #b4b4b4;background:#f7f7f7"><div class="a" style="left:1px;top:1px;width:9px;height:9px;border:1px solid #e6e6e6"></div></div>
<div class="a" style="left:83px;top:767px;width:35px;height:27px;background:#c8d9e9"></div>
<div class="a" style="left:119px;top:767px;width:39px;height:27px;background:#d3d9e0"></div>
<div class="a" style="left:159px;top:767px;width:39px;height:27px;background:#d3d9e0"></div>
<div class="a" style="left:83px;top:794px;width:115px;height:1px;background:#fff"></div>
<div class="a" style="left:118px;top:767px;width:1px;height:28px;background:#fff"></div>
<div class="a" style="left:158px;top:767px;width:1px;height:28px;background:#fff"></div>
<div class="t" style="left:16px;width:100px;text-align:right;top:775px;font-size:13.3px;color:#111;">3</div>
<svg class="a" style="left:200px;top:773px" width="17" height="17"><rect x="4.6" y="2.6" width="11" height="8.8" fill="#fff" stroke="#2f7ec1" stroke-width="1.2"/><path d="M6.5 5.8 H11 M6.5 8 H10" stroke="#2f7ec1" stroke-width="1.3"/><rect x="12.2" y="4.3" width="2.1" height="2.1" fill="#2f7ec1"/><path d="M2 4.5 H4.6 M2 6.5 H4.6 M2 8.5 H4.6" stroke="#2f7ec1" stroke-width="1"/></svg>
<div class="a" style="left:219px;top:767px;width:25px;height:28px;background:#dcf8d8"></div>
<svg class="a" style="left:221px;top:772px" width="16" height="16"><rect x="0" y="0" width="16" height="16" fill="#fff"/><rect x="6" y="0.3" width="4" height="1.5" fill="#737373"/><rect x="1" y="1.5" width="14" height="2" fill="#737373"/><rect x="2" y="4" width="12" height="12" fill="#737373"/><rect x="4" y="6" width="2" height="8" fill="#fff"/><rect x="7" y="6" width="2" height="8" fill="#fff"/><rect x="10" y="6" width="2" height="8" fill="#fff"/></svg>
<div class="a" style="left:240px;top:777px;width:1.5px;height:9px;background:#6b0a2a"></div>
<div class="t" style="left:246px;top:775px;font-size:13.3px;color:#111;">Adele Vance</div>
<div class="a" style="left:244px;top:794px;width:175px;height:1px;background:#f0f0f0"></div>
<div class="a" style="left:419px;top:767px;width:24px;height:28px;background:#d4d4d4"></div>
<div class="a" style="left:419px;top:794px;width:24px;height:1px;background:#fff"></div>
<div class="a" style="left:443px;top:767px;width:65px;height:28px;background:#f0f0f0"></div>
<div class="a" style="left:470px;top:774px;width:13px;height:13px;border:1px solid #b4b4b4;background:#fcfcfc"><div class="a" style="left:1px;top:1px;width:9px;height:9px;border:1px solid #e6e6e6"></div></div>
<div class="t" style="left:510px;top:775px;font-size:13.3px;color:#111;">Move all messages from Microsoft Viva to</div>
<div class="a" style="left:508px;top:794px;width:612px;height:1px;background:#f0f0f0"></div>
<div class="t" style="left:737px;width:100px;text-align:right;top:775px;font-size:13.3px;color:#111;">1</div>
<svg class="a" style="left:844px;top:773px" width="16" height="16"><path d="M2.5 8.5 V0.5 H14.5 V5.5" fill="none" stroke="#555" stroke-width="1"/><rect x="10.3" y="2" width="2.2" height="2.2" fill="#d42a2a"/><path d="M4.2 3.5 H9" stroke="#9a9a9a" stroke-width="1"/><rect x="4.2" y="5.2" width="1.2" height="1.2" fill="#999"/><path d="M0 2.5 H2 M0 4.5 H2 M0 6.5 H2" stroke="#2f7ec1" stroke-width="1"/><circle cx="9.5" cy="9.6" r="4.7" fill="#fff"/><circle cx="9.5" cy="9.6" r="4.5" fill="#2f7ec1"/><path d="M7 8.5 H12 M7 10.8 H12" stroke="#fff" stroke-width="1.1"/></svg>
<div class="t" style="left:862px;top:775px;font-size:13.3px;color:#111;">Condition</div>
<div class="t" style="left:947px;top:775px;font-size:13.3px;color:#111;">Message Action Flag</div>
<div class="a" style="left:1120px;top:767px;width:256px;height:28px;background:#d4d4d4"></div>
<div class="a" style="left:1120px;top:794px;width:256px;height:1px;background:#f4f4f4"></div>
<div class="a" style="left:1120px;top:767px;width:1px;height:28px;background:#f0f0f0"></div>
<div class="a" style="left:1376px;top:767px;width:317px;height:28px;background:#f0f0f0"></div>
<svg class="a" style="left:1428px;top:772px" width="16" height="16"><path d="M3.5 9 V1.5 H14.5 V6" fill="none" stroke="#555" stroke-width="1"/><rect x="11.2" y="3" width="2.2" height="2.2" fill="#d42a2a"/><path d="M5.2 4.5 H9" stroke="#9a9a9a" stroke-width="1"/><path d="M1 2.5 H3 M1 4.5 H3 M1 6.5 H3" stroke="#2f7ec1" stroke-width="1"/><circle cx="10.5" cy="10.6" r="5.3" fill="#fff"/><circle cx="10.5" cy="10.6" r="4.6" fill="#16a05a"/><path d="M8 10.6 L9.8 12.4 L13 9" fill="none" stroke="#fff" stroke-width="1.4"/></svg>
<div class="a" style="left:1446px;top:774px;width:13px;height:13px;border:1px solid #b4b4b4;background:#f7f7f7"><div class="a" style="left:1px;top:1px;width:9px;height:9px;border:1px solid #e6e6e6"></div></div><svg class="a" style="left:1446px;top:774px" width="13" height="13"><path d="M3.5 6.5 L5.5 10 L10 2.5" fill="none" stroke="#a4a4a4" stroke-width="1.5"/></svg>
<div class="a" style="left:1596px;top:774px;width:13px;height:13px;border:1px solid #b4b4b4;background:#f7f7f7"><div class="a" style="left:1px;top:1px;width:9px;height:9px;border:1px solid #e6e6e6"></div></div>
<div class="a" style="left:83px;top:795px;width:35px;height:27px;background:#c8d9e9"></div>
<div class="a" style="left:119px;top:795px;width:39px;height:27px;background:#d3d9e0"></div>
<div class="a" style="left:159px;top:795px;width:39px;height:27px;background:#d3d9e0"></div>
<div class="a" style="left:83px;top:822px;width:115px;height:1px;background:#fff"></div>
<div class="a" style="left:118px;top:795px;width:1px;height:28px;background:#fff"></div>
<div class="a" style="left:158px;top:795px;width:1px;height:28px;background:#fff"></div>
<div class="t" style="left:16px;width:100px;text-align:right;top:803px;font-size:13.3px;color:#111;">3</div>
<svg class="a" style="left:200px;top:801px" width="17" height="17"><rect x="4.6" y="2.6" width="11" height="8.8" fill="#fff" stroke="#2f7ec1" stroke-width="1.2"/><path d="M6.5 5.8 H11 M6.5 8 H10" stroke="#2f7ec1" stroke-width="1.3"/><rect x="12.2" y="4.3" width="2.1" height="2.1" fill="#2f7ec1"/><path d="M2 4.5 H4.6 M2 6.5 H4.6 M2 8.5 H4.6" stroke="#2f7ec1" stroke-width="1"/></svg>
<div class="a" style="left:219px;top:795px;width:25px;height:28px;background:#dcf8d8"></div>
<svg class="a" style="left:221px;top:800px" width="16" height="16"><rect x="0" y="0" width="16" height="16" fill="#fff"/><rect x="6" y="0.3" width="4" height="1.5" fill="#737373"/><rect x="1" y="1.5" width="14" height="2" fill="#737373"/><rect x="2" y="4" width="12" height="12" fill="#737373"/><rect x="4" y="6" width="2" height="8" fill="#fff"/><rect x="7" y="6" width="2" height="8" fill="#fff"/><rect x="10" y="6" width="2" height="8" fill="#fff"/></svg>
<div class="a" style="left:240px;top:805px;width:1.5px;height:9px;background:#6b0a2a"></div>
<div class="t" style="left:246px;top:803px;font-size:13.3px;color:#111;">Adele Vance</div>
<div class="a" style="left:244px;top:822px;width:175px;height:1px;background:#f0f0f0"></div>
<div class="a" style="left:419px;top:795px;width:24px;height:28px;background:#d4d4d4"></div>
<div class="a" style="left:419px;top:822px;width:24px;height:1px;background:#fff"></div>
<div class="a" style="left:443px;top:795px;width:65px;height:28px;background:#f0f0f0"></div>
<div class="a" style="left:470px;top:802px;width:13px;height:13px;border:1px solid #b4b4b4;background:#fcfcfc"><div class="a" style="left:1px;top:1px;width:9px;height:9px;border:1px solid #e6e6e6"></div></div>
<div class="t" style="left:510px;top:803px;font-size:13.3px;color:#111;">Move all messages from Microsoft Viva to</div>
<div class="a" style="left:508px;top:822px;width:612px;height:1px;background:#f0f0f0"></div>
<div class="t" style="left:737px;width:100px;text-align:right;top:803px;font-size:13.3px;color:#111;">1</div>
<svg class="a" style="left:844px;top:801px" width="16" height="16"><path d="M2.5 8.5 V0.5 H14.5 V5.5" fill="none" stroke="#555" stroke-width="1"/><rect x="10.3" y="2" width="2.2" height="2.2" fill="#d42a2a"/><path d="M4.2 3.5 H9" stroke="#9a9a9a" stroke-width="1"/><rect x="4.2" y="5.2" width="1.2" height="1.2" fill="#999"/><path d="M0 2.5 H2 M0 4.5 H2 M0 6.5 H2" stroke="#2f7ec1" stroke-width="1"/><circle cx="9.5" cy="9.6" r="4.7" fill="#fff"/><circle cx="9.5" cy="9.6" r="4.5" fill="#2f7ec1"/><path d="M7 8.5 H12 M7 10.8 H12" stroke="#fff" stroke-width="1.1"/></svg>
<div class="t" style="left:862px;top:803px;font-size:13.3px;color:#111;">Condition</div>
<div class="t" style="left:947px;top:803px;font-size:13.3px;color:#111;">Is not Sent To Me</div>
<div class="a" style="left:1120px;top:795px;width:256px;height:28px;background:#d4d4d4"></div>
<div class="a" style="left:1120px;top:822px;width:256px;height:1px;background:#f4f4f4"></div>
<div class="a" style="left:1120px;top:795px;width:1px;height:28px;background:#f0f0f0"></div>
<div class="a" style="left:1376px;top:795px;width:317px;height:28px;background:#f0f0f0"></div>
<svg class="a" style="left:1428px;top:800px" width="16" height="16"><path d="M3.5 9 V1.5 H14.5 V6" fill="none" stroke="#555" stroke-width="1"/><rect x="11.2" y="3" width="2.2" height="2.2" fill="#d42a2a"/><path d="M5.2 4.5 H9" stroke="#9a9a9a" stroke-width="1"/><path d="M1 2.5 H3 M1 4.5 H3 M1 6.5 H3" stroke="#2f7ec1" stroke-width="1"/><circle cx="10.5" cy="10.6" r="5.3" fill="#fff"/><circle cx="10.5" cy="10.6" r="4.6" fill="#16a05a"/><path d="M8 10.6 L9.8 12.4 L13 9" fill="none" stroke="#fff" stroke-width="1.4"/></svg>
<div class="a" style="left:1446px;top:802px;width:13px;height:13px;border:1px solid #b4b4b4;background:#f7f7f7"><div class="a" style="left:1px;top:1px;width:9px;height:9px;border:1px solid #e6e6e6"></div></div><svg class="a" style="left:1446px;top:802px" width="13" height="13"><path d="M3.5 6.5 L5.5 10 L10 2.5" fill="none" stroke="#a4a4a4" stroke-width="1.5"/></svg>
<div class="a" style="left:1596px;top:802px;width:13px;height:13px;border:1px solid #b4b4b4;background:#f7f7f7"><div class="a" style="left:1px;top:1px;width:9px;height:9px;border:1px solid #e6e6e6"></div></div>
<div class="a" style="left:83px;top:823px;width:35px;height:27px;background:#c8d9e9"></div>
<div class="a" style="left:119px;top:823px;width:39px;height:27px;background:#d3d9e0"></div>
<div class="a" style="left:159px;top:823px;width:39px;height:27px;background:#d3d9e0"></div>
<div class="a" style="left:83px;top:850px;width:115px;height:1px;background:#fff"></div>
<div class="a" style="left:118px;top:823px;width:1px;height:28px;background:#fff"></div>
<div class="a" style="left:158px;top:823px;width:1px;height:28px;background:#fff"></div>
<div class="t" style="left:16px;width:100px;text-align:right;top:831px;font-size:13.3px;color:#111;">3</div>
<svg class="a" style="left:200px;top:829px" width="17" height="17"><rect x="4.6" y="2.6" width="11" height="8.8" fill="#fff" stroke="#2f7ec1" stroke-width="1.2"/><path d="M6.5 5.8 H11 M6.5 8 H10" stroke="#2f7ec1" stroke-width="1.3"/><rect x="12.2" y="4.3" width="2.1" height="2.1" fill="#2f7ec1"/><path d="M2 4.5 H4.6 M2 6.5 H4.6 M2 8.5 H4.6" stroke="#2f7ec1" stroke-width="1"/></svg>
<div class="a" style="left:219px;top:823px;width:25px;height:28px;background:#dcf8d8"></div>
<svg class="a" style="left:221px;top:828px" width="16" height="16"><rect x="0" y="0" width="16" height="16" fill="#fff"/><rect x="6" y="0.3" width="4" height="1.5" fill="#737373"/><rect x="1" y="1.5" width="14" height="2" fill="#737373"/><rect x="2" y="4" width="12" height="12" fill="#737373"/><rect x="4" y="6" width="2" height="8" fill="#fff"/><rect x="7" y="6" width="2" height="8" fill="#fff"/><rect x="10" y="6" width="2" height="8" fill="#fff"/></svg>
<div class="a" style="left:240px;top:833px;width:1.5px;height:9px;background:#6b0a2a"></div>
<div class="t" style="left:246px;top:831px;font-size:13.3px;color:#111;">Adele Vance</div>
<div class="a" style="left:244px;top:850px;width:175px;height:1px;background:#f0f0f0"></div>
<div class="a" style="left:419px;top:823px;width:24px;height:28px;background:#d4d4d4"></div>
<div class="a" style="left:419px;top:850px;width:24px;height:1px;background:#fff"></div>
<div class="a" style="left:443px;top:823px;width:65px;height:28px;background:#f0f0f0"></div>
<div class="a" style="left:470px;top:830px;width:13px;height:13px;border:1px solid #b4b4b4;background:#fcfcfc"><div class="a" style="left:1px;top:1px;width:9px;height:9px;border:1px solid #e6e6e6"></div></div>
<div class="t" style="left:510px;top:831px;font-size:13.3px;color:#111;">Move all messages from Microsoft Viva to</div>
<div class="a" style="left:508px;top:850px;width:612px;height:1px;background:#f0f0f0"></div>
<div class="t" style="left:737px;width:100px;text-align:right;top:831px;font-size:13.3px;color:#111;">1</div>
<svg class="a" style="left:844px;top:829px" width="16" height="16"><path d="M2.5 8.5 V0.5 H14.5 V5.5" fill="none" stroke="#555" stroke-width="1"/><rect x="10.3" y="2" width="2.2" height="2.2" fill="#d42a2a"/><path d="M4.2 3.5 H9" stroke="#9a9a9a" stroke-width="1"/><rect x="4.2" y="5.2" width="1.2" height="1.2" fill="#999"/><path d="M0 2.5 H2 M0 4.5 H2 M0 6.5 H2" stroke="#2f7ec1" stroke-width="1"/><circle cx="9.5" cy="9.6" r="4.7" fill="#fff"/><circle cx="9.5" cy="9.6" r="4.5" fill="#2f7ec1"/><path d="M7 8.5 H12 M7 10.8 H12" stroke="#fff" stroke-width="1.1"/></svg>
<div class="t" style="left:862px;top:831px;font-size:13.3px;color:#111;">Condition</div>
<div class="t" style="left:947px;top:831px;font-size:13.3px;color:#111;">Recipient Contains</div>
<div class="a" style="left:1120px;top:823px;width:256px;height:28px;background:#d4d4d4"></div>
<div class="a" style="left:1120px;top:850px;width:256px;height:1px;background:#f4f4f4"></div>
<div class="a" style="left:1120px;top:823px;width:1px;height:28px;background:#f0f0f0"></div>
<div class="a" style="left:1376px;top:823px;width:317px;height:28px;background:#f0f0f0"></div>
<svg class="a" style="left:1428px;top:828px" width="16" height="16"><path d="M3.5 9 V1.5 H14.5 V6" fill="none" stroke="#555" stroke-width="1"/><rect x="11.2" y="3" width="2.2" height="2.2" fill="#d42a2a"/><path d="M5.2 4.5 H9" stroke="#9a9a9a" stroke-width="1"/><path d="M1 2.5 H3 M1 4.5 H3 M1 6.5 H3" stroke="#2f7ec1" stroke-width="1"/><circle cx="10.5" cy="10.6" r="5.3" fill="#fff"/><circle cx="10.5" cy="10.6" r="4.6" fill="#16a05a"/><path d="M8 10.6 L9.8 12.4 L13 9" fill="none" stroke="#fff" stroke-width="1.4"/></svg>
<div class="a" style="left:1446px;top:830px;width:13px;height:13px;border:1px solid #b4b4b4;background:#f7f7f7"><div class="a" style="left:1px;top:1px;width:9px;height:9px;border:1px solid #e6e6e6"></div></div><svg class="a" style="left:1446px;top:830px" width="13" height="13"><path d="M3.5 6.5 L5.5 10 L10 2.5" fill="none" stroke="#a4a4a4" stroke-width="1.5"/></svg>
<div class="a" style="left:1596px;top:830px;width:13px;height:13px;border:1px solid #b4b4b4;background:#f7f7f7"><div class="a" style="left:1px;top:1px;width:9px;height:9px;border:1px solid #e6e6e6"></div></div>
<div class="a" style="left:83px;top:851px;width:35px;height:27px;background:#c8d9e9"></div>
<div class="a" style="left:119px;top:851px;width:39px;height:27px;background:#d3d9e0"></div>
<div class="a" style="left:159px;top:851px;width:39px;height:27px;background:#d3d9e0"></div>
<div class="a" style="left:83px;top:878px;width:115px;height:1px;background:#fff"></div>
<div class="a" style="left:118px;top:851px;width:1px;height:28px;background:#fff"></div>
<div class="a" style="left:158px;top:851px;width:1px;height:28px;background:#fff"></div>
<div class="t" style="left:16px;width:100px;text-align:right;top:859px;font-size:13.3px;color:#111;">3</div>
<svg class="a" style="left:200px;top:857px" width="17" height="17"><rect x="4.6" y="2.6" width="11" height="8.8" fill="#fff" stroke="#2f7ec1" stroke-width="1.2"/><path d="M6.5 5.8 H11 M6.5 8 H10" stroke="#2f7ec1" stroke-width="1.3"/><rect x="12.2" y="4.3" width="2.1" height="2.1" fill="#2f7ec1"/><path d="M2 4.5 H4.6 M2 6.5 H4.6 M2 8.5 H4.6" stroke="#2f7ec1" stroke-width="1"/></svg>
<div class="a" style="left:219px;top:851px;width:25px;height:28px;background:#dcf8d8"></div>
<svg class="a" style="left:221px;top:856px" width="16" height="16"><rect x="0" y="0" width="16" height="16" fill="#fff"/><rect x="6" y="0.3" width="4" height="1.5" fill="#737373"/><rect x="1" y="1.5" width="14" height="2" fill="#737373"/><rect x="2" y="4" width="12" height="12" fill="#737373"/><rect x="4" y="6" width="2" height="8" fill="#fff"/><rect x="7" y="6" width="2" height="8" fill="#fff"/><rect x="10" y="6" width="2" height="8" fill="#fff"/></svg>
<div class="a" style="left:240px;top:861px;width:1.5px;height:9px;background:#6b0a2a"></div>
<div class="t" style="left:246px;top:859px;font-size:13.3px;color:#111;">Adele Vance</div>
<div class="a" style="left:244px;top:878px;width:175px;height:1px;background:#f0f0f0"></div>
<div class="a" style="left:419px;top:851px;width:24px;height:28px;background:#d4d4d4"></div>
<div class="a" style="left:419px;top:878px;width:24px;height:1px;background:#fff"></div>
<div class="a" style="left:443px;top:851px;width:65px;height:28px;background:#f0f0f0"></div>
<div class="a" style="left:470px;top:858px;width:13px;height:13px;border:1px solid #b4b4b4;background:#fcfcfc"><div class="a" style="left:1px;top:1px;width:9px;height:9px;border:1px solid #e6e6e6"></div></div>
<div class="t" style="left:510px;top:859px;font-size:13.3px;color:#111;">Move all messages from Microsoft Viva to</div>
<div class="a" style="left:508px;top:878px;width:612px;height:1px;background:#f0f0f0"></div>
<div class="t" style="left:737px;width:100px;text-align:right;top:859px;font-size:13.3px;color:#111;">1</div>
<svg class="a" style="left:844px;top:857px" width="16" height="16"><path d="M2.5 8.5 V0.5 H14.5 V5.5" fill="none" stroke="#555" stroke-width="1"/><rect x="10.3" y="2" width="2.2" height="2.2" fill="#d42a2a"/><path d="M4.2 3.5 H9" stroke="#9a9a9a" stroke-width="1"/><rect x="4.2" y="5.2" width="1.2" height="1.2" fill="#999"/><path d="M0 2.5 H2 M0 4.5 H2 M0 6.5 H2" stroke="#2f7ec1" stroke-width="1"/><circle cx="9.5" cy="9.6" r="4.7" fill="#fff"/><circle cx="9.5" cy="9.6" r="4.5" fill="#2f7ec1"/><path d="M7 8.5 H12 M7 10.8 H12" stroke="#fff" stroke-width="1.1"/></svg>
<div class="t" style="left:862px;top:859px;font-size:13.3px;color:#111;">Condition</div>
<div class="t" style="left:947px;top:859px;font-size:13.3px;color:#111;">Sender Contains</div>
<div class="a" style="left:1120px;top:851px;width:256px;height:28px;background:#d4d4d4"></div>
<div class="a" style="left:1120px;top:878px;width:256px;height:1px;background:#f4f4f4"></div>
<div class="a" style="left:1120px;top:851px;width:1px;height:28px;background:#f0f0f0"></div>
<div class="a" style="left:1376px;top:851px;width:317px;height:28px;background:#f0f0f0"></div>
<svg class="a" style="left:1428px;top:856px" width="16" height="16"><path d="M3.5 9 V1.5 H14.5 V6" fill="none" stroke="#555" stroke-width="1"/><rect x="11.2" y="3" width="2.2" height="2.2" fill="#d42a2a"/><path d="M5.2 4.5 H9" stroke="#9a9a9a" stroke-width="1"/><path d="M1 2.5 H3 M1 4.5 H3 M1 6.5 H3" stroke="#2f7ec1" stroke-width="1"/><circle cx="10.5" cy="10.6" r="5.3" fill="#fff"/><circle cx="10.5" cy="10.6" r="4.6" fill="#16a05a"/><path d="M8 10.6 L9.8 12.4 L13 9" fill="none" stroke="#fff" stroke-width="1.4"/></svg>
<div class="a" style="left:1446px;top:858px;width:13px;height:13px;border:1px solid #b4b4b4;background:#f7f7f7"><div class="a" style="left:1px;top:1px;width:9px;height:9px;border:1px solid #e6e6e6"></div></div><svg class="a" style="left:1446px;top:858px" width="13" height="13"><path d="M3.5 6.5 L5.5 10 L10 2.5" fill="none" stroke="#a4a4a4" stroke-width="1.5"/></svg>
<div class="a" style="left:1596px;top:858px;width:13px;height:13px;border:1px solid #b4b4b4;background:#f7f7f7"><div class="a" style="left:1px;top:1px;width:9px;height:9px;border:1px solid #e6e6e6"></div></div>
<div class="a" style="left:83px;top:879px;width:35px;height:27px;background:#c8d9e9"></div>
<div class="a" style="left:119px;top:879px;width:39px;height:27px;background:#d3d9e0"></div>
<div class="a" style="left:159px;top:879px;width:39px;height:27px;background:#d3d9e0"></div>
<div class="a" style="left:83px;top:906px;width:115px;height:1px;background:#fff"></div>
<div class="a" style="left:118px;top:879px;width:1px;height:28px;background:#fff"></div>
<div class="a" style="left:158px;top:879px;width:1px;height:28px;background:#fff"></div>
<div class="t" style="left:16px;width:100px;text-align:right;top:887px;font-size:13.3px;color:#111;">3</div>
<svg class="a" style="left:200px;top:885px" width="17" height="17"><rect x="4.6" y="2.6" width="11" height="8.8" fill="#fff" stroke="#2f7ec1" stroke-width="1.2"/><path d="M6.5 5.8 H11 M6.5 8 H10" stroke="#2f7ec1" stroke-width="1.3"/><rect x="12.2" y="4.3" width="2.1" height="2.1" fill="#2f7ec1"/><path d="M2 4.5 H4.6 M2 6.5 H4.6 M2 8.5 H4.6" stroke="#2f7ec1" stroke-width="1"/></svg>
<div class="a" style="left:219px;top:879px;width:25px;height:28px;background:#dcf8d8"></div>
<svg class="a" style="left:221px;top:884px" width="16" height="16"><rect x="0" y="0" width="16" height="16" fill="#fff"/><rect x="6" y="0.3" width="4" height="1.5" fill="#737373"/><rect x="1" y="1.5" width="14" height="2" fill="#737373"/><rect x="2" y="4" width="12" height="12" fill="#737373"/><rect x="4" y="6" width="2" height="8" fill="#fff"/><rect x="7" y="6" width="2" height="8" fill="#fff"/><rect x="10" y="6" width="2" height="8" fill="#fff"/></svg>
<div class="a" style="left:240px;top:889px;width:1.5px;height:9px;background:#6b0a2a"></div>
<div class="t" style="left:246px;top:887px;font-size:13.3px;color:#111;">Adele Vance</div>
<div class="a" style="left:244px;top:906px;width:175px;height:1px;background:#f0f0f0"></div>
<div class="a" style="left:419px;top:879px;width:24px;height:28px;background:#d4d4d4"></div>
<div class="a" style="left:419px;top:906px;width:24px;height:1px;background:#fff"></div>
<div class="a" style="left:443px;top:879px;width:65px;height:28px;background:#f0f0f0"></div>
<div class="a" style="left:470px;top:886px;width:13px;height:13px;border:1px solid #b4b4b4;background:#fcfcfc"><div class="a" style="left:1px;top:1px;width:9px;height:9px;border:1px solid #e6e6e6"></div></div>
<div class="t" style="left:510px;top:887px;font-size:13.3px;color:#111;">Move all messages from Microsoft Viva to</div>
<div class="a" style="left:508px;top:906px;width:612px;height:1px;background:#f0f0f0"></div>
<div class="t" style="left:737px;width:100px;text-align:right;top:887px;font-size:13.3px;color:#111;">1</div>
<svg class="a" style="left:844px;top:885px" width="16" height="16"><path d="M2.5 8.5 V0.5 H14.5 V5.5" fill="none" stroke="#555" stroke-width="1"/><rect x="10.3" y="2" width="2.2" height="2.2" fill="#d42a2a"/><path d="M4.2 3.5 H9" stroke="#9a9a9a" stroke-width="1"/><rect x="4.2" y="5.2" width="1.2" height="1.2" fill="#999"/><path d="M0 2.5 H2 M0 4.5 H2 M0 6.5 H2" stroke="#2f7ec1" stroke-width="1"/><circle cx="9.5" cy="9.6" r="4.7" fill="#fff"/><circle cx="9.5" cy="9.6" r="4.5" fill="#2f7ec1"/><path d="M7 8.5 H12 M7 10.8 H12" stroke="#fff" stroke-width="1.1"/></svg>
<div class="t" style="left:862px;top:887px;font-size:13.3px;color:#111;">Condition</div>
<div class="t" style="left:947px;top:887px;font-size:13.3px;color:#111;">Sensitivity</div>
<div class="a" style="left:1120px;top:879px;width:256px;height:28px;background:#d4d4d4"></div>
<div class="a" style="left:1120px;top:906px;width:256px;height:1px;background:#f4f4f4"></div>
<div class="a" style="left:1120px;top:879px;width:1px;height:28px;background:#f0f0f0"></div>
<div class="a" style="left:1376px;top:879px;width:317px;height:28px;background:#f0f0f0"></div>
<svg class="a" style="left:1428px;top:884px" width="16" height="16"><path d="M3.5 9 V1.5 H14.5 V6" fill="none" stroke="#555" stroke-width="1"/><rect x="11.2" y="3" width="2.2" height="2.2" fill="#d42a2a"/><path d="M5.2 4.5 H9" stroke="#9a9a9a" stroke-width="1"/><path d="M1 2.5 H3 M1 4.5 H3 M1 6.5 H3" stroke="#2f7ec1" stroke-width="1"/><circle cx="10.5" cy="10.6" r="5.3" fill="#fff"/><circle cx="10.5" cy="10.6" r="4.6" fill="#16a05a"/><path d="M8 10.6 L9.8 12.4 L13 9" fill="none" stroke="#fff" stroke-width="1.4"/></svg>
<div class="a" style="left:1446px;top:886px;width:13px;height:13px;border:1px solid #b4b4b4;background:#f7f7f7"><div class="a" style="left:1px;top:1px;width:9px;height:9px;border:1px solid #e6e6e6"></div></div><svg class="a" style="left:1446px;top:886px" width="13" height="13"><path d="M3.5 6.5 L5.5 10 L10 2.5" fill="none" stroke="#a4a4a4" stroke-width="1.5"/></svg>
<div class="a" style="left:1596px;top:886px;width:13px;height:13px;border:1px solid #b4b4b4;background:#f7f7f7"><div class="a" style="left:1px;top:1px;width:9px;height:9px;border:1px solid #e6e6e6"></div></div>
<div class="a" style="left:83px;top:907px;width:35px;height:27px;background:#c8d9e9"></div>
<div class="a" style="left:119px;top:907px;width:39px;height:27px;background:#d3d9e0"></div>
<div class="a" style="left:159px;top:907px;width:39px;height:27px;background:#d3d9e0"></div>
<div class="a" style="left:83px;top:934px;width:115px;height:1px;background:#fff"></div>
<div class="a" style="left:118px;top:907px;width:1px;height:28px;background:#fff"></div>
<div class="a" style="left:158px;top:907px;width:1px;height:28px;background:#fff"></div>
<div class="t" style="left:16px;width:100px;text-align:right;top:915px;font-size:13.3px;color:#111;">3</div>
<svg class="a" style="left:200px;top:913px" width="17" height="17"><rect x="4.6" y="2.6" width="11" height="8.8" fill="#fff" stroke="#2f7ec1" stroke-width="1.2"/><path d="M6.5 5.8 H11 M6.5 8 H10" stroke="#2f7ec1" stroke-width="1.3"/><rect x="12.2" y="4.3" width="2.1" height="2.1" fill="#2f7ec1"/><path d="M2 4.5 H4.6 M2 6.5 H4.6 M2 8.5 H4.6" stroke="#2f7ec1" stroke-width="1"/></svg>
<div class="a" style="left:219px;top:907px;width:25px;height:28px;background:#dcf8d8"></div>
<svg class="a" style="left:221px;top:912px" width="16" height="16"><rect x="0" y="0" width="16" height="16" fill="#fff"/><rect x="6" y="0.3" width="4" height="1.5" fill="#737373"/><rect x="1" y="1.5" width="14" height="2" fill="#737373"/><rect x="2" y="4" width="12" height="12" fill="#737373"/><rect x="4" y="6" width="2" height="8" fill="#fff"/><rect x="7" y="6" width="2" height="8" fill="#fff"/><rect x="10" y="6" width="2" height="8" fill="#fff"/></svg>
<div class="a" style="left:240px;top:917px;width:1.5px;height:9px;background:#6b0a2a"></div>
<div class="t" style="left:246px;top:915px;font-size:13.3px;color:#111;">Adele Vance</div>
<div class="a" style="left:244px;top:934px;width:175px;height:1px;background:#f0f0f0"></div>
<div class="a" style="left:419px;top:907px;width:24px;height:28px;background:#d4d4d4"></div>
<div class="a" style="left:419px;top:934px;width:24px;height:1px;background:#fff"></div>
<div class="a" style="left:443px;top:907px;width:65px;height:28px;background:#f0f0f0"></div>
<div class="a" style="left:470px;top:914px;width:13px;height:13px;border:1px solid #b4b4b4;background:#fcfcfc"><div class="a" style="left:1px;top:1px;width:9px;height:9px;border:1px solid #e6e6e6"></div></div>
<div class="t" style="left:510px;top:915px;font-size:13.3px;color:#111;">Move all messages from Microsoft Viva to</div>
<div class="a" style="left:508px;top:934px;width:612px;height:1px;background:#f0f0f0"></div>
<div class="t" style="left:737px;width:100px;text-align:right;top:915px;font-size:13.3px;color:#111;">1</div>
<svg class="a" style="left:844px;top:913px" width="16" height="16"><path d="M2.5 8.5 V0.5 H14.5 V5.5" fill="none" stroke="#555" stroke-width="1"/><rect x="10.3" y="2" width="2.2" height="2.2" fill="#d42a2a"/><path d="M4.2 3.5 H9" stroke="#9a9a9a" stroke-width="1"/><rect x="4.2" y="5.2" width="1.2" height="1.2" fill="#999"/><path d="M0 2.5 H2 M0 4.5 H2 M0 6.5 H2" stroke="#2f7ec1" stroke-width="1"/><circle cx="9.5" cy="9.6" r="4.7" fill="#fff"/><circle cx="9.5" cy="9.6" r="4.5" fill="#2f7ec1"/><path d="M7 8.5 H12 M7 10.8 H12" stroke="#fff" stroke-width="1.1"/></svg>
<div class="t" style="left:862px;top:915px;font-size:13.3px;color:#111;">Condition</div>
<div class="t" style="left:947px;top:915px;font-size:13.3px;color:#111;">Sent CC to Me</div>
<div class="a" style="left:1120px;top:907px;width:256px;height:28px;background:#d4d4d4"></div>
<div class="a" style="left:1120px;top:934px;width:256px;height:1px;background:#f4f4f4"></div>
<div class="a" style="left:1120px;top:907px;width:1px;height:28px;background:#f0f0f0"></div>
<div class="a" style="left:1376px;top:907px;width:317px;height:28px;background:#f0f0f0"></div>
<svg class="a" style="left:1428px;top:912px" width="16" height="16"><path d="M3.5 9 V1.5 H14.5 V6" fill="none" stroke="#555" stroke-width="1"/><rect x="11.2" y="3" width="2.2" height="2.2" fill="#d42a2a"/><path d="M5.2 4.5 H9" stroke="#9a9a9a" stroke-width="1"/><path d="M1 2.5 H3 M1 4.5 H3 M1 6.5 H3" stroke="#2f7ec1" stroke-width="1"/><circle cx="10.5" cy="10.6" r="5.3" fill="#fff"/><circle cx="10.5" cy="10.6" r="4.6" fill="#16a05a"/><path d="M8 10.6 L9.8 12.4 L13 9" fill="none" stroke="#fff" stroke-width="1.4"/></svg>
<div class="a" style="left:1446px;top:914px;width:13px;height:13px;border:1px solid #b4b4b4;background:#f7f7f7"><div class="a" style="left:1px;top:1px;width:9px;height:9px;border:1px solid #e6e6e6"></div></div><svg class="a" style="left:1446px;top:914px" width="13" height="13"><path d="M3.5 6.5 L5.5 10 L10 2.5" fill="none" stroke="#a4a4a4" stroke-width="1.5"/></svg>
<div class="a" style="left:1596px;top:914px;width:13px;height:13px;border:1px solid #b4b4b4;background:#f7f7f7"><div class="a" style="left:1px;top:1px;width:9px;height:9px;border:1px solid #e6e6e6"></div></div>
<div class="a" style="left:83px;top:935px;width:35px;height:27px;background:#c8d9e9"></div>
<div class="a" style="left:119px;top:935px;width:39px;height:27px;background:#d3d9e0"></div>
<div class="a" style="left:159px;top:935px;width:39px;height:27px;background:#d3d9e0"></div>
<div class="a" style="left:83px;top:962px;width:115px;height:1px;background:#fff"></div>
<div class="a" style="left:118px;top:935px;width:1px;height:28px;background:#fff"></div>
<div class="a" style="left:158px;top:935px;width:1px;height:28px;background:#fff"></div>
<div class="t" style="left:16px;width:100px;text-align:right;top:943px;font-size:13.3px;color:#111;">3</div>
<svg class="a" style="left:200px;top:941px" width="17" height="17"><rect x="4.6" y="2.6" width="11" height="8.8" fill="#fff" stroke="#2f7ec1" stroke-width="1.2"/><path d="M6.5 5.8 H11 M6.5 8 H10" stroke="#2f7ec1" stroke-width="1.3"/><rect x="12.2" y="4.3" width="2.1" height="2.1" fill="#2f7ec1"/><path d="M2 4.5 H4.6 M2 6.5 H4.6 M2 8.5 H4.6" stroke="#2f7ec1" stroke-width="1"/></svg>
<div class="a" style="left:219px;top:935px;width:25px;height:28px;background:#dcf8d8"></div>
<svg class="a" style="left:221px;top:940px" width="16" height="16"><rect x="0" y="0" width="16" height="16" fill="#fff"/><rect x="6" y="0.3" width="4" height="1.5" fill="#737373"/><rect x="1" y="1.5" width="14" height="2" fill="#737373"/><rect x="2" y="4" width="12" height="12" fill="#737373"/><rect x="4" y="6" width="2" height="8" fill="#fff"/><rect x="7" y="6" width="2" height="8" fill="#fff"/><rect x="10" y="6" width="2" height="8" fill="#fff"/></svg>
<div class="a" style="left:240px;top:945px;width:1.5px;height:9px;background:#6b0a2a"></div>
<div class="t" style="left:246px;top:943px;font-size:13.3px;color:#111;">Adele Vance</div>
<div class="a" style="left:244px;top:962px;width:175px;height:1px;background:#f0f0f0"></div>
<div class="a" style="left:419px;top:935px;width:24px;height:28px;background:#d4d4d4"></div>
<div class="a" style="left:419px;top:962px;width:24px;height:1px;background:#fff"></div>
<div class="a" style="left:443px;top:935px;width:65px;height:28px;background:#f0f0f0"></div>
<div class="a" style="left:470px;top:942px;width:13px;height:13px;border:1px solid #b4b4b4;background:#fcfcfc"><div class="a" style="left:1px;top:1px;width:9px;height:9px;border:1px solid #e6e6e6"></div></div>
<div class="t" style="left:510px;top:943px;font-size:13.3px;color:#111;">Move all messages from Microsoft Viva to</div>
<div class="a" style="left:508px;top:962px;width:612px;height:1px;background:#f0f0f0"></div>
<div class="t" style="left:737px;width:100px;text-align:right;top:943px;font-size:13.3px;color:#111;">1</div>
<svg class="a" style="left:844px;top:941px" width="16" height="16"><path d="M2.5 8.5 V0.5 H14.5 V5.5" fill="none" stroke="#555" stroke-width="1"/><rect x="10.3" y="2" width="2.2" height="2.2" fill="#d42a2a"/><path d="M4.2 3.5 H9" stroke="#9a9a9a" stroke-width="1"/><rect x="4.2" y="5.2" width="1.2" height="1.2" fill="#999"/><path d="M0 2.5 H2 M0 4.5 H2 M0 6.5 H2" stroke="#2f7ec1" stroke-width="1"/><circle cx="9.5" cy="9.6" r="4.7" fill="#fff"/><circle cx="9.5" cy="9.6" r="4.5" fill="#2f7ec1"/><path d="M7 8.5 H12 M7 10.8 H12" stroke="#fff" stroke-width="1.1"/></svg>
<div class="t" style="left:862px;top:943px;font-size:13.3px;color:#111;">Condition</div>
<div class="t" style="left:947px;top:943px;font-size:13.3px;color:#111;">Sent Only To Me</div>
<div class="a" style="left:1120px;top:935px;width:256px;height:28px;background:#d4d4d4"></div>
<div class="a" style="left:1120px;top:962px;width:256px;height:1px;background:#f4f4f4"></div>
<div class="a" style="left:1120px;top:935px;width:1px;height:28px;background:#f0f0f0"></div>
<div class="a" style="left:1376px;top:935px;width:317px;height:28px;background:#f0f0f0"></div>
<svg class="a" style="left:1428px;top:940px" width="16" height="16"><path d="M3.5 9 V1.5 H14.5 V6" fill="none" stroke="#555" stroke-width="1"/><rect x="11.2" y="3" width="2.2" height="2.2" fill="#d42a2a"/><path d="M5.2 4.5 H9" stroke="#9a9a9a" stroke-width="1"/><path d="M1 2.5 H3 M1 4.5 H3 M1 6.5 H3" stroke="#2f7ec1" stroke-width="1"/><circle cx="10.5" cy="10.6" r="5.3" fill="#fff"/><circle cx="10.5" cy="10.6" r="4.6" fill="#16a05a"/><path d="M8 10.6 L9.8 12.4 L13 9" fill="none" stroke="#fff" stroke-width="1.4"/></svg>
<div class="a" style="left:1446px;top:942px;width:13px;height:13px;border:1px solid #b4b4b4;background:#f7f7f7"><div class="a" style="left:1px;top:1px;width:9px;height:9px;border:1px solid #e6e6e6"></div></div><svg class="a" style="left:1446px;top:942px" width="13" height="13"><path d="M3.5 6.5 L5.5 10 L10 2.5" fill="none" stroke="#a4a4a4" stroke-width="1.5"/></svg>
<div class="a" style="left:1596px;top:942px;width:13px;height:13px;border:1px solid #b4b4b4;background:#f7f7f7"><div class="a" style="left:1px;top:1px;width:9px;height:9px;border:1px solid #e6e6e6"></div></div>
<div class="a" style="left:83px;top:963px;width:35px;height:27px;background:#c8d9e9"></div>
<div class="a" style="left:119px;top:963px;width:39px;height:27px;background:#d3d9e0"></div>
<div class="a" style="left:159px;top:963px;width:39px;height:27px;background:#d3d9e0"></div>
<div class="a" style="left:83px;top:990px;width:115px;height:1px;background:#fff"></div>
<div class="a" style="left:118px;top:963px;width:1px;height:28px;background:#fff"></div>
<div class="a" style="left:158px;top:963px;width:1px;height:28px;background:#fff"></div>
<div class="t" style="left:16px;width:100px;text-align:right;top:971px;font-size:13.3px;color:#111;">3</div>
<svg class="a" style="left:200px;top:969px" width="17" height="17"><rect x="4.6" y="2.6" width="11" height="8.8" fill="#fff" stroke="#2f7ec1" stroke-width="1.2"/><path d="M6.5 5.8 H11 M6.5 8 H10" stroke="#2f7ec1" stroke-width="1.3"/><rect x="12.2" y="4.3" width="2.1" height="2.1" fill="#2f7ec1"/><path d="M2 4.5 H4.6 M2 6.5 H4.6 M2 8.5 H4.6" stroke="#2f7ec1" stroke-width="1"/></svg>
<div class="a" style="left:219px;top:963px;width:25px;height:28px;background:#dcf8d8"></div>
<svg class="a" style="left:221px;top:968px" width="16" height="16"><rect x="0" y="0" width="16" height="16" fill="#fff"/><rect x="6" y="0.3" width="4" height="1.5" fill="#737373"/><rect x="1" y="1.5" width="14" height="2" fill="#737373"/><rect x="2" y="4" width="12" height="12" fill="#737373"/><rect x="4" y="6" width="2" height="8" fill="#fff"/><rect x="7" y="6" width="2" height="8" fill="#fff"/><rect x="10" y="6" width="2" height="8" fill="#fff"/></svg>
<div class="a" style="left:240px;top:973px;width:1.5px;height:9px;background:#6b0a2a"></div>
<div class="t" style="left:246px;top:971px;font-size:13.3px;color:#111;">Adele Vance</div>
<div class="a" style="left:244px;top:990px;width:175px;height:1px;background:#f0f0f0"></div>
<div class="a" style="left:419px;top:963px;width:24px;height:28px;background:#d4d4d4"></div>
<div class="a" style="left:419px;top:990px;width:24px;height:1px;background:#fff"></div>
<div class="a" style="left:443px;top:963px;width:65px;height:28px;background:#f0f0f0"></div>
<div class="a" style="left:470px;top:970px;width:13px;height:13px;border:1px solid #b4b4b4;background:#fcfcfc"><div class="a" style="left:1px;top:1px;width:9px;height:9px;border:1px solid #e6e6e6"></div></div>
<div class="t" style="left:510px;top:971px;font-size:13.3px;color:#111;">Move all messages from Microsoft Viva to</div>
<div class="a" style="left:508px;top:990px;width:612px;height:1px;background:#f0f0f0"></div>
<div class="t" style="left:737px;width:100px;text-align:right;top:971px;font-size:13.3px;color:#111;">1</div>
<svg class="a" style="left:844px;top:969px" width="16" height="16"><path d="M2.5 8.5 V0.5 H14.5 V5.5" fill="none" stroke="#555" stroke-width="1"/><rect x="10.3" y="2" width="2.2" height="2.2" fill="#d42a2a"/><path d="M4.2 3.5 H9" stroke="#9a9a9a" stroke-width="1"/><rect x="4.2" y="5.2" width="1.2" height="1.2" fill="#999"/><path d="M0 2.5 H2 M0 4.5 H2 M0 6.5 H2" stroke="#2f7ec1" stroke-width="1"/><circle cx="9.5" cy="9.6" r="4.7" fill="#fff"/><circle cx="9.5" cy="9.6" r="4.5" fill="#2f7ec1"/><path d="M7 8.5 H12 M7 10.8 H12" stroke="#fff" stroke-width="1.1"/></svg>
<div class="t" style="left:862px;top:971px;font-size:13.3px;color:#111;">Condition</div>
<div class="t" style="left:947px;top:971px;font-size:13.3px;color:#111;">Sent To Addresses</div>
<div class="a" style="left:1120px;top:963px;width:256px;height:28px;background:#d4d4d4"></div>
<div class="a" style="left:1120px;top:990px;width:256px;height:1px;background:#f4f4f4"></div>
<div class="a" style="left:1120px;top:963px;width:1px;height:28px;background:#f0f0f0"></div>
<div class="a" style="left:1376px;top:963px;width:317px;height:28px;background:#f0f0f0"></div>
<svg class="a" style="left:1428px;top:968px" width="16" height="16"><path d="M3.5 9 V1.5 H14.5 V6" fill="none" stroke="#555" stroke-width="1"/><rect x="11.2" y="3" width="2.2" height="2.2" fill="#d42a2a"/><path d="M5.2 4.5 H9" stroke="#9a9a9a" stroke-width="1"/><path d="M1 2.5 H3 M1 4.5 H3 M1 6.5 H3" stroke="#2f7ec1" stroke-width="1"/><circle cx="10.5" cy="10.6" r="5.3" fill="#fff"/><circle cx="10.5" cy="10.6" r="4.6" fill="#16a05a"/><path d="M8 10.6 L9.8 12.4 L13 9" fill="none" stroke="#fff" stroke-width="1.4"/></svg>
<div class="a" style="left:1446px;top:970px;width:13px;height:13px;border:1px solid #b4b4b4;background:#f7f7f7"><div class="a" style="left:1px;top:1px;width:9px;height:9px;border:1px solid #e6e6e6"></div></div><svg class="a" style="left:1446px;top:970px" width="13" height="13"><path d="M3.5 6.5 L5.5 10 L10 2.5" fill="none" stroke="#a4a4a4" stroke-width="1.5"/></svg>
<div class="a" style="left:1596px;top:970px;width:13px;height:13px;border:1px solid #b4b4b4;background:#f7f7f7"><div class="a" style="left:1px;top:1px;width:9px;height:9px;border:1px solid #e6e6e6"></div></div>
<div class="a" style="left:83px;top:991px;width:35px;height:27px;background:#c8d9e9"></div>
<div class="a" style="left:119px;top:991px;width:39px;height:27px;background:#d3d9e0"></div>
<div class="a" style="left:159px;top:991px;width:39px;height:27px;background:#d3d9e0"></div>
<div class="a" style="left:83px;top:1018px;width:115px;height:1px;background:#fff"></div>
<div class="a" style="left:118px;top:991px;width:1px;height:28px;background:#fff"></div>
<div class="a" style="left:158px;top:991px;width:1px;height:28px;background:#fff"></div>
<div class="t" style="left:16px;width:100px;text-align:right;top:999px;font-size:13.3px;color:#111;">3</div>
<svg class="a" style="left:200px;top:997px" width="17" height="17"><rect x="4.6" y="2.6" width="11" height="8.8" fill="#fff" stroke="#2f7ec1" stroke-width="1.2"/><path d="M6.5 5.8 H11 M6.5 8 H10" stroke="#2f7ec1" stroke-width="1.3"/><rect x="12.2" y="4.3" width="2.1" height="2.1" fill="#2f7ec1"/><path d="M2 4.5 H4.6 M2 6.5 H4.6 M2 8.5 H4.6" stroke="#2f7ec1" stroke-width="1"/></svg>
<div class="a" style="left:219px;top:991px;width:25px;height:28px;background:#dcf8d8"></div>
<svg class="a" style="left:221px;top:996px" width="16" height="16"><rect x="0" y="0" width="16" height="16" fill="#fff"/><rect x="6" y="0.3" width="4" height="1.5" fill="#737373"/><rect x="1" y="1.5" width="14" height="2" fill="#737373"/><rect x="2" y="4" width="12" height="12" fill="#737373"/><rect x="4" y="6" width="2" height="8" fill="#fff"/><rect x="7" y="6" width="2" height="8" fill="#fff"/><rect x="10" y="6" width="2" height="8" fill="#fff"/></svg>
<div class="a" style="left:240px;top:1001px;width:1.5px;height:9px;background:#6b0a2a"></div>
<div class="t" style="left:246px;top:999px;font-size:13.3px;color:#111;">Adele Vance</div>
<div class="a" style="left:244px;top:1018px;width:175px;height:1px;background:#f0f0f0"></div>
<div class="a" style="left:419px;top:991px;width:24px;height:28px;background:#d4d4d4"></div>
<div class="a" style="left:419px;top:1018px;width:24px;height:1px;background:#fff"></div>
<div class="a" style="left:443px;top:991px;width:65px;height:28px;background:#f0f0f0"></div>
<div class="a" style="left:470px;top:998px;width:13px;height:13px;border:1px solid #b4b4b4;background:#fcfcfc"><div class="a" style="left:1px;top:1px;width:9px;height:9px;border:1px solid #e6e6e6"></div></div>
<div class="t" style="left:510px;top:999px;font-size:13.3px;color:#111;">Move all messages from Microsoft Viva to</div>
<div class="a" style="left:508px;top:1018px;width:612px;height:1px;background:#f0f0f0"></div>
<div class="t" style="left:737px;width:100px;text-align:right;top:999px;font-size:13.3px;color:#111;">1</div>
<svg class="a" style="left:844px;top:997px" width="16" height="16"><path d="M2.5 8.5 V0.5 H14.5 V5.5" fill="none" stroke="#555" stroke-width="1"/><rect x="10.3" y="2" width="2.2" height="2.2" fill="#d42a2a"/><path d="M4.2 3.5 H9" stroke="#9a9a9a" stroke-width="1"/><rect x="4.2" y="5.2" width="1.2" height="1.2" fill="#999"/><path d="M0 2.5 H2 M0 4.5 H2 M0 6.5 H2" stroke="#2f7ec1" stroke-width="1"/><circle cx="9.5" cy="9.6" r="4.7" fill="#fff"/><circle cx="9.5" cy="9.6" r="4.5" fill="#2f7ec1"/><path d="M7 8.5 H12 M7 10.8 H12" stroke="#fff" stroke-width="1.1"/></svg>
<div class="t" style="left:862px;top:999px;font-size:13.3px;color:#111;">Condition</div>
<div class="t" style="left:947px;top:999px;font-size:13.3px;color:#111;">Sent To Me</div>
<div class="a" style="left:1120px;top:991px;width:256px;height:28px;background:#d4d4d4"></div>
<div class="a" style="left:1120px;top:1018px;width:256px;height:1px;background:#f4f4f4"></div>
<div class="a" style="left:1120px;top:991px;width:1px;height:28px;background:#f0f0f0"></div>
<div class="a" style="left:1376px;top:991px;width:317px;height:28px;background:#f0f0f0"></div>
<svg class="a" style="left:1428px;top:996px" width="16" height="16"><path d="M3.5 9 V1.5 H14.5 V6" fill="none" stroke="#555" stroke-width="1"/><rect x="11.2" y="3" width="2.2" height="2.2" fill="#d42a2a"/><path d="M5.2 4.5 H9" stroke="#9a9a9a" stroke-width="1"/><path d="M1 2.5 H3 M1 4.5 H3 M1 6.5 H3" stroke="#2f7ec1" stroke-width="1"/><circle cx="10.5" cy="10.6" r="5.3" fill="#fff"/><circle cx="10.5" cy="10.6" r="4.6" fill="#16a05a"/><path d="M8 10.6 L9.8 12.4 L13 9" fill="none" stroke="#fff" stroke-width="1.4"/></svg>
<div class="a" style="left:1446px;top:998px;width:13px;height:13px;border:1px solid #b4b4b4;background:#f7f7f7"><div class="a" style="left:1px;top:1px;width:9px;height:9px;border:1px solid #e6e6e6"></div></div><svg class="a" style="left:1446px;top:998px" width="13" height="13"><path d="M3.5 6.5 L5.5 10 L10 2.5" fill="none" stroke="#a4a4a4" stroke-width="1.5"/></svg>
<div class="a" style="left:1596px;top:998px;width:13px;height:13px;border:1px solid #b4b4b4;background:#f7f7f7"><div class="a" style="left:1px;top:1px;width:9px;height:9px;border:1px solid #e6e6e6"></div></div>
<div class="a" style="left:83px;top:1019px;width:35px;height:27px;background:#c8d9e9"></div>
<div class="a" style="left:119px;top:1019px;width:39px;height:27px;background:#d3d9e0"></div>
<div class="a" style="left:159px;top:1019px;width:39px;height:27px;background:#d3d9e0"></div>
<div class="a" style="left:83px;top:1046px;width:115px;height:1px;background:#fff"></div>
<div class="a" style="left:118px;top:1019px;width:1px;height:28px;background:#fff"></div>
<div class="a" style="left:158px;top:1019px;width:1px;height:28px;background:#fff"></div>
<div class="t" style="left:16px;width:100px;text-align:right;top:1027px;font-size:13.3px;color:#111;">3</div>
<svg class="a" style="left:200px;top:1025px" width="17" height="17"><rect x="4.6" y="2.6" width="11" height="8.8" fill="#fff" stroke="#2f7ec1" stroke-width="1.2"/><path d="M6.5 5.8 H11 M6.5 8 H10" stroke="#2f7ec1" stroke-width="1.3"/><rect x="12.2" y="4.3" width="2.1" height="2.1" fill="#2f7ec1"/><path d="M2 4.5 H4.6 M2 6.5 H4.6 M2 8.5 H4.6" stroke="#2f7ec1" stroke-width="1"/></svg>
<div class="a" style="left:219px;top:1019px;width:25px;height:28px;background:#dcf8d8"></div>
<svg class="a" style="left:221px;top:1024px" width="16" height="16"><rect x="0" y="0" width="16" height="16" fill="#fff"/><rect x="6" y="0.3" width="4" height="1.5" fill="#737373"/><rect x="1" y="1.5" width="14" height="2" fill="#737373"/><rect x="2" y="4" width="12" height="12" fill="#737373"/><rect x="4" y="6" width="2" height="8" fill="#fff"/><rect x="7" y="6" width="2" height="8" fill="#fff"/><rect x="10" y="6" width="2" height="8" fill="#fff"/></svg>
<div class="a" style="left:240px;top:1029px;width:1.5px;height:9px;background:#6b0a2a"></div>
<div class="t" style="left:246px;top:1027px;font-size:13.3px;color:#111;">Adele Vance</div>
<div class="a" style="left:244px;top:1046px;width:175px;height:1px;background:#f0f0f0"></div>
<div class="a" style="left:419px;top:1019px;width:24px;height:28px;background:#d4d4d4"></div>
<div class="a" style="left:419px;top:1046px;width:24px;height:1px;background:#fff"></div>
<div class="a" style="left:443px;top:1019px;width:65px;height:28px;background:#f0f0f0"></div>
<div class="a" style="left:470px;top:1026px;width:13px;height:13px;border:1px solid #b4b4b4;background:#fcfcfc"><div class="a" style="left:1px;top:1px;width:9px;height:9px;border:1px solid #e6e6e6"></div></div>
<div class="t" style="left:510px;top:1027px;font-size:13.3px;color:#111;">Move all messages from Microsoft Viva to</div>
<div class="a" style="left:508px;top:1046px;width:612px;height:1px;background:#f0f0f0"></div>
<div class="t" style="left:737px;width:100px;text-align:right;top:1027px;font-size:13.3px;color:#111;">1</div>
<svg class="a" style="left:844px;top:1025px" width="16" height="16"><path d="M2.5 8.5 V0.5 H14.5 V5.5" fill="none" stroke="#555" stroke-width="1"/><rect x="10.3" y="2" width="2.2" height="2.2" fill="#d42a2a"/><path d="M4.2 3.5 H9" stroke="#9a9a9a" stroke-width="1"/><rect x="4.2" y="5.2" width="1.2" height="1.2" fill="#999"/><path d="M0 2.5 H2 M0 4.5 H2 M0 6.5 H2" stroke="#2f7ec1" stroke-width="1"/><circle cx="9.5" cy="9.6" r="4.7" fill="#fff"/><circle cx="9.5" cy="9.6" r="4.5" fill="#2f7ec1"/><path d="M7 8.5 H12 M7 10.8 H12" stroke="#fff" stroke-width="1.1"/></svg>
<div class="t" style="left:862px;top:1027px;font-size:13.3px;color:#111;">Condition</div>
<div class="t" style="left:947px;top:1027px;font-size:13.3px;color:#111;">Sent To Or CC Me</div>
<div class="a" style="left:1120px;top:1019px;width:256px;height:28px;background:#d4d4d4"></div>
<div class="a" style="left:1120px;top:1046px;width:256px;height:1px;background:#f4f4f4"></div>
<div class="a" style="left:1120px;top:1019px;width:1px;height:28px;background:#f0f0f0"></div>
<div class="a" style="left:1376px;top:1019px;width:317px;height:28px;background:#f0f0f0"></div>
<svg class="a" style="left:1428px;top:1024px" width="16" height="16"><path d="M3.5 9 V1.5 H14.5 V6" fill="none" stroke="#555" stroke-width="1"/><rect x="11.2" y="3" width="2.2" height="2.2" fill="#d42a2a"/><path d="M5.2 4.5 H9" stroke="#9a9a9a" stroke-width="1"/><path d="M1 2.5 H3 M1 4.5 H3 M1 6.5 H3" stroke="#2f7ec1" stroke-width="1"/><circle cx="10.5" cy="10.6" r="5.3" fill="#fff"/><circle cx="10.5" cy="10.6" r="4.6" fill="#16a05a"/><path d="M8 10.6 L9.8 12.4 L13 9" fill="none" stroke="#fff" stroke-width="1.4"/></svg>
<div class="a" style="left:1446px;top:1026px;width:13px;height:13px;border:1px solid #b4b4b4;background:#f7f7f7"><div class="a" style="left:1px;top:1px;width:9px;height:9px;border:1px solid #e6e6e6"></div></div><svg class="a" style="left:1446px;top:1026px" width="13" height="13"><path d="M3.5 6.5 L5.5 10 L10 2.5" fill="none" stroke="#a4a4a4" stroke-width="1.5"/></svg>
<div class="a" style="left:1596px;top:1026px;width:13px;height:13px;border:1px solid #b4b4b4;background:#f7f7f7"><div class="a" style="left:1px;top:1px;width:9px;height:9px;border:1px solid #e6e6e6"></div></div>
<div class="a" style="left:763px;top:263px;width:1px;height:774px;background:#ececec"></div>
<div class="a" style="left:840px;top:263px;width:1px;height:774px;background:#ececec"></div>
<div class="a" style="left:944px;top:263px;width:1px;height:774px;background:#ececec"></div>
<div class="a" style="left:243px;top:207px;width:1px;height:830px;background:#1d4f8f"></div>
<div class="a" style="left:244px;top:207px;width:1px;height:830px;background:#0a78d7"></div>
<div class="a" style="left:418px;top:207px;width:1px;height:830px;background:#2b86d8"></div>
<div class="a" style="left:0;top:1037px;width:1920px;height:43px;background:#fff"></div>
<div class="a" style="left:0px;top:1037px;width:1918px;height:20px;background:#f8f8f8"></div>
<div class="t" style="left:7px;top:1042px;font-size:12.9px;color:#111;">Rows Loaded: 526 | Rows Displayed: 515 | Rows Hidden: 11 | Rows Selected: 3 | Hierarchy view with 22 top row(s) [11 hidden]</div>
<div class="a" style="left:2px;top:1057px;width:1916px;height:20px;background:#7a50c2"></div>
<div class="t" style="left:5.5px;top:1061.5px;font-size:10.9px;color:#fff;">Ready</div>
<div class="t" style="left:1815px;top:1061.5px;font-size:11px;color:#a78fd8;">CAP</div>
<div class="t" style="left:1848px;top:1061.5px;font-size:11.4px;color:#fff;">NUM</div>
<div class="t" style="left:1886px;top:1061.5px;font-size:10.8px;color:#a78fd8;">SCRL</div>
<div class="a" style="left:0px;top:1077px;width:1920px;height:3px;background:#3a3a46"></div>
<div class="a" style="left:48px;top:1077px;width:287px;height:3px;background:#ececec"></div>
<div class="a" style="left:584px;top:1077px;width:46px;height:3px;background:#8a8a90"></div>
<div class="a" style="left:0px;top:1077px;width:1920px;height:1px;background:#fff"></div>
</body></html>
